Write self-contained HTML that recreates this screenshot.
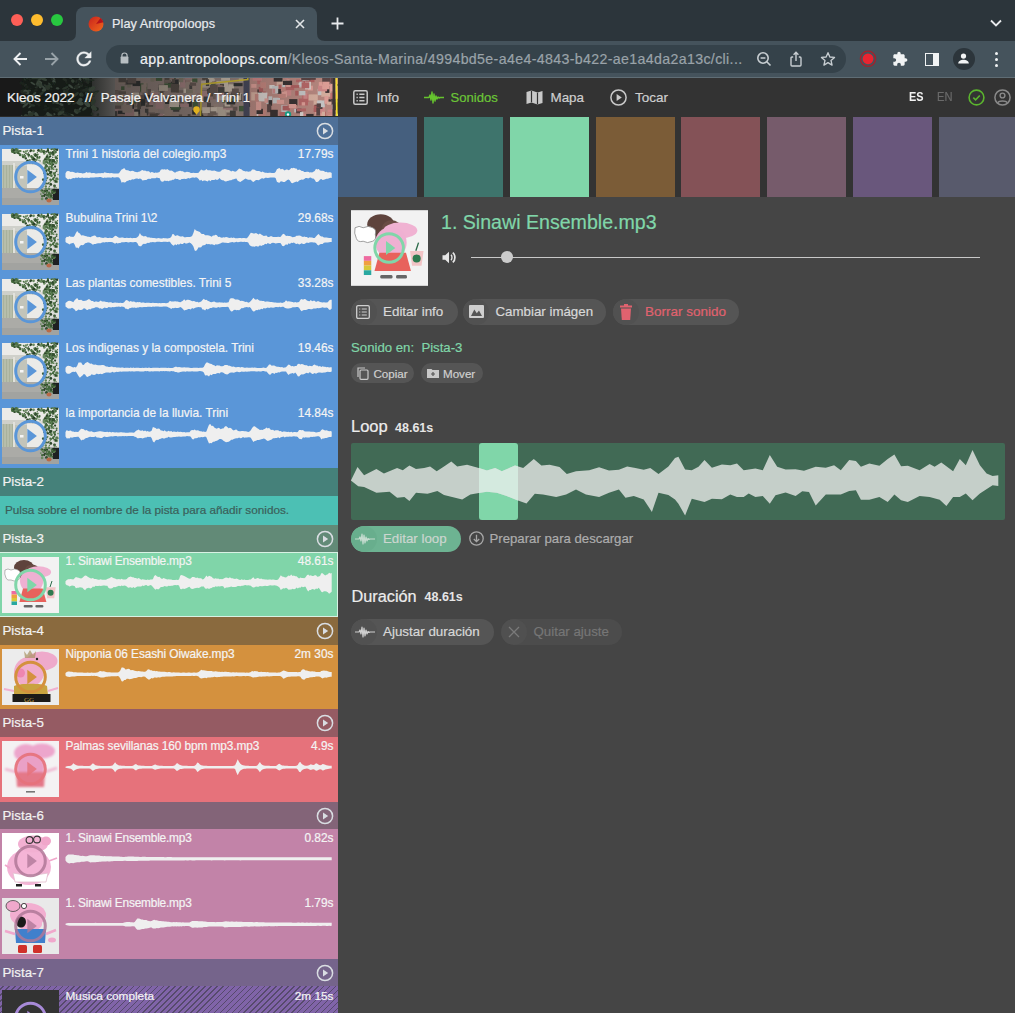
<!DOCTYPE html><html><head><meta charset="utf-8"><style>
*{margin:0;padding:0;box-sizing:border-box}
html,body{width:1015px;height:1013px;overflow:hidden;background:#2c353b;font-family:"Liberation Sans", sans-serif;}
.a{position:absolute}
.t{position:absolute;white-space:nowrap;line-height:1;-webkit-text-stroke:0.2px currentColor}
svg{position:absolute;overflow:visible}
</style></head><body><div class="a" style="left:0;top:0;width:1015px;height:41px;background:#2c353b"></div>
<div class="a" style="left:11px;top:14px;width:12px;height:12px;border-radius:50%;background:#fe5f57"></div>
<div class="a" style="left:31px;top:14px;width:12px;height:12px;border-radius:50%;background:#febc2e"></div>
<div class="a" style="left:51px;top:14px;width:12px;height:12px;border-radius:50%;background:#28c840"></div>
<div class="a" style="left:76px;top:7px;width:241px;height:35px;background:#45535c;border-radius:8px 8px 0 0"></div>
<svg style="left:68px;top:33px" width="8" height="8"><path d="M0 8 Q8 8 8 0 L8 8 Z" fill="#45535c"/></svg>
<svg style="left:317px;top:33px" width="8" height="8"><path d="M8 8 Q0 8 0 0 L0 8 Z" fill="#45535c"/></svg>
<svg style="left:88px;top:16px" width="16" height="16" viewBox="0 0 16 16"><defs><linearGradient id="fv" x1="0" y1="0" x2="1" y2="1"><stop offset="0" stop-color="#c8211d"/><stop offset="1" stop-color="#f26a1b"/></linearGradient></defs><circle cx="8" cy="8" r="7.5" fill="url(#fv)"/><path d="M8 8 L12.5 2 A7.5 7.5 0 0 1 15.3 6.3 Z" fill="#b3121c"/></svg>
<div class="t" style="left:112px;top:18px;font-size:12.7px;color:#e8eaed;letter-spacing:0.05px">Play Antropoloops</div>
<svg style="left:295px;top:18.5px" width="10" height="10" viewBox="0 0 10 10"><path d="M1 1 L9 9 M9 1 L1 9" stroke="#e3e6e8" stroke-width="1.6"/></svg>
<svg style="left:331px;top:17px" width="13" height="13" viewBox="0 0 13 13"><path d="M6.5 0.5 V12.5 M0.5 6.5 H12.5" stroke="#e8eaed" stroke-width="1.8"/></svg>
<svg style="left:990px;top:19px" width="12" height="8" viewBox="0 0 12 8"><path d="M1 1.5 L6 6.5 L11 1.5" stroke="#e8eaed" stroke-width="1.8" fill="none"/></svg>
<div class="a" style="left:0;top:41px;width:1015px;height:36px;background:#45535c"></div>
<div class="a" style="left:0;top:77px;width:1015px;height:1px;background:#5f6d75"></div>
<svg style="left:12px;top:51px" width="16" height="16" viewBox="0 0 16 16"><path d="M15 8 H2.5 M8.5 2 L2.5 8 L8.5 14" stroke="#eef0f2" stroke-width="1.9" fill="none"/></svg>
<svg style="left:44px;top:51px" width="16" height="16" viewBox="0 0 16 16"><path d="M1 8 H13.5 M7.5 2 L13.5 8 L7.5 14" stroke="#98a2a8" stroke-width="1.9" fill="none"/></svg>
<svg style="left:73.2px;top:48px" width="21.8" height="21.8" viewBox="0 0 24 24"><path stroke="#eef0f2" stroke-width="0.4" d="M17.65 6.35C16.2 4.9 14.21 4 12 4c-4.42 0-7.99 3.58-7.99 8s3.57 8 7.99 8c3.73 0 6.84-2.55 7.73-6h-2.08c-.82 2.33-3.04 4-5.65 4-3.31 0-6-2.690-6-6s2.69-6 6-6c1.66 0 3.140.69 4.22 1.78L13 11h7V4l-2.350 2.35z" fill="#eef0f2"/></svg>
<div class="a" style="left:106px;top:45px;width:740px;height:28px;border-radius:14px;background:#35424a"></div>
<svg style="left:119.6px;top:51.8px" width="9" height="12" viewBox="0 0 9 12"><path d="M1.9 5 V3.6 A2.6 2.6 0 0 1 7.1 3.6 V5" stroke="#b8bec2" stroke-width="1.2" fill="none"/><rect x="0.6" y="4.6" width="7.8" height="6.8" rx="0.6" fill="#b8bec2"/></svg>
<div class="t" style="left:140px;top:51.5px;font-size:14.2px;letter-spacing:0.35px;color:#eef0f2">app.antropoloops.com<span style="color:#9aa3a9">/Kleos-Santa-Marina/4994bd5e-a4e4-4843-b422-ae1a4da2a13c/cli...</span></div>
<svg style="left:756px;top:51px" width="16" height="16" viewBox="0 0 16 16"><circle cx="7" cy="7" r="5.2" stroke="#c8ced2" stroke-width="1.6" fill="none"/><path d="M4.6 7 H9.4 M10.8 10.8 L14.5 14.5" stroke="#c8ced2" stroke-width="1.6"/></svg>
<svg style="left:788px;top:50px" width="16" height="18" viewBox="0 0 16 18"><path d="M5.2 7 H4 Q3 7 3 8 V15 Q3 16 4 16 H12 Q13 16 13 15 V8 Q13 7 12 7 H10.8" stroke="#c8ced2" stroke-width="1.4" fill="none"/><path d="M8 11 V2.5 M5.6 4.7 L8 2.2 L10.4 4.7" stroke="#c8ced2" stroke-width="1.4" fill="none"/></svg>
<svg style="left:820px;top:51px" width="16" height="16" viewBox="0 0 24 24"><path d="M12 2.5 L14.8 9 L21.8 9.6 L16.5 14.2 L18.1 21.1 L12 17.4 L5.9 21.1 L7.5 14.2 L2.2 9.6 L9.2 9 Z" stroke="#c8ced2" stroke-width="2" fill="none" stroke-linejoin="round"/></svg>
<svg style="left:858px;top:49px" width="20" height="20" viewBox="0 0 20 20"><circle cx="10" cy="9.8" r="7.6" stroke="#a2222c" stroke-width="1.3" fill="none"/><circle cx="10" cy="9.8" r="5.4" fill="#ea2430"/></svg>
<svg style="left:892px;top:51px" width="16" height="16" viewBox="0 0 24 24"><path d="M20.5 11H19V7c0-1.1-.9-2-2-2h-4V3.5C13 2.12 11.88 1 10.5 1S8 2.12 8 3.5V5H4c-1.1 0-1.99.9-1.99 2v3.8H3.5c1.49 0 2.7 1.21 2.7 2.7s-1.21 2.7-2.7 2.7H2V20c0 1.1.9 2 2 2h3.8v-1.5c0-1.49 1.21-2.7 2.7-2.7 1.49 0 2.7 1.21 2.7 2.7V22H17c1.1 0 2-.9 2-2v-4h1.5c1.38 0 2.5-1.12 2.5-2.5S21.88 11 20.5 11z" fill="#f1f3f4"/></svg>
<div class="a" style="left:925px;top:53px;width:14px;height:13px;border:1.6px solid #f1f3f4;background:#45535c"></div>
<div class="a" style="left:933px;top:53px;width:6px;height:13px;background:#f1f3f4"></div>
<div class="a" style="left:952.5px;top:48px;width:22px;height:22px;border-radius:50%;background:#2c353b"></div>
<svg style="left:956px;top:51px" width="15" height="15" viewBox="0 0 24 24"><circle cx="12" cy="8" r="4.2" fill="#f1f3f4"/><path d="M3.5 20 C3.5 15.5 8 13.8 12 13.8 C16 13.8 20.5 15.5 20.5 20 Z" fill="#f1f3f4"/></svg>
<div class="a" style="left:994.5px;top:51.5px;width:3.2px;height:3.2px;border-radius:50%;background:#f1f3f4"></div>
<div class="a" style="left:994.5px;top:57.5px;width:3.2px;height:3.2px;border-radius:50%;background:#f1f3f4"></div>
<div class="a" style="left:994.5px;top:63.5px;width:3.2px;height:3.2px;border-radius:50%;background:#f1f3f4"></div>
<svg style="left:0;top:78px;overflow:hidden" width="338" height="38" viewBox="0 0 338 38"><defs><filter id="mb" x="0" y="0" width="1" height="1"><feGaussianBlur stdDeviation="0.75"/></filter><clipPath id="hc"><rect width="338" height="38"/></clipPath></defs><g clip-path="url(#hc)"><rect x="0" y="0" width="338" height="38" fill="#9a8680"/><rect x="250" y="0" width="88" height="38" fill="#b88880"/><g filter="url(#mb)"><rect x="185.2" y="2.3" width="7.4" height="3.0" fill="#9a7a74"/><rect x="133.3" y="20.5" width="9.3" height="3.9" fill="#a08a80"/><rect x="210.0" y="-1.1" width="3.2" height="5.3" fill="#4a6040"/><rect x="140.0" y="5.4" width="7.2" height="8.7" fill="#4a6040"/><rect x="244.3" y="-1.9" width="4.2" height="6.1" fill="#b08888"/><rect x="177.5" y="2.1" width="3.4" height="4.5" fill="#d0c0b0"/><rect x="152.8" y="20.4" width="7.3" height="4.9" fill="#9a7a74"/><rect x="272.9" y="19.7" width="7.1" height="5.7" fill="#c8c8c8"/><rect x="208.6" y="9.2" width="6.9" height="5.4" fill="#303030"/><rect x="168.1" y="3.6" width="8.3" height="3.0" fill="#303030"/><rect x="230.7" y="32.8" width="8.0" height="4.4" fill="#a08a80"/><rect x="138.7" y="13.6" width="8.2" height="3.5" fill="#7a6a62"/><rect x="207.3" y="36.4" width="3.1" height="6.1" fill="#4a4542"/><rect x="188.9" y="10.7" width="6.2" height="7.7" fill="#a08a80"/><rect x="301.8" y="35.7" width="6.1" height="6.8" fill="#d08888"/><rect x="277.2" y="9.0" width="6.8" height="6.9" fill="#3a3030"/><rect x="176.3" y="12.2" width="7.5" height="2.6" fill="#7a6a62"/><rect x="192.3" y="21.7" width="6.2" height="3.9" fill="#303030"/><rect x="141.2" y="6.4" width="5.4" height="8.2" fill="#a08a80"/><rect x="149.6" y="12.9" width="4.6" height="3.4" fill="#c0b0a0"/><rect x="307.3" y="7.7" width="5.6" height="4.8" fill="#e0a098"/><rect x="328.4" y="2.3" width="3.8" height="4.0" fill="#dcd4d0"/><rect x="114.7" y="30.9" width="3.9" height="4.3" fill="#b08888"/><rect x="206.7" y="11.5" width="6.7" height="8.7" fill="#5a5048"/><rect x="306.2" y="35.9" width="7.4" height="7.3" fill="#3a3030"/><rect x="315.3" y="28.8" width="9.1" height="7.7" fill="#e0a098"/><rect x="202.0" y="12.6" width="6.1" height="5.1" fill="#6a5a55"/><rect x="127.2" y="4.8" width="3.7" height="4.7" fill="#8a8070"/><rect x="135.1" y="19.8" width="6.5" height="8.7" fill="#4a6040"/><rect x="117.8" y="32.7" width="7.1" height="3.5" fill="#303030"/><rect x="327.9" y="21.3" width="6.1" height="3.2" fill="#3a3030"/><rect x="336.4" y="15.6" width="6.1" height="3.1" fill="#c07070"/><rect x="281.4" y="27.1" width="6.1" height="7.0" fill="#c8c8c8"/><rect x="117.2" y="35.9" width="6.5" height="3.5" fill="#9a7a74"/><rect x="318.6" y="27.8" width="4.7" height="6.7" fill="#c07070"/><rect x="269.3" y="7.0" width="5.3" height="3.6" fill="#dcd4d0"/><rect x="232.4" y="28.7" width="5.0" height="3.9" fill="#6a5a55"/><rect x="294.2" y="30.4" width="8.0" height="4.0" fill="#c8c8c8"/><rect x="223.4" y="26.7" width="9.9" height="7.6" fill="#7a6a62"/><rect x="170.6" y="25.1" width="9.7" height="5.4" fill="#5a5048"/><rect x="335.3" y="36.1" width="5.2" height="3.9" fill="#dcd4d0"/><rect x="218.2" y="10.2" width="6.1" height="8.9" fill="#4a6040"/><rect x="301.9" y="16.1" width="7.4" height="7.7" fill="#c07070"/><rect x="300.6" y="1.0" width="5.4" height="7.1" fill="#dcd4d0"/><rect x="220.0" y="3.5" width="8.4" height="4.7" fill="#5a5048"/><rect x="201.5" y="12.9" width="9.6" height="7.2" fill="#b08888"/><rect x="336.4" y="-2.8" width="6.9" height="5.5" fill="#c88880"/><rect x="145.0" y="30.7" width="9.9" height="6.8" fill="#4a4542"/><rect x="147.2" y="19.0" width="2.7" height="7.7" fill="#5a5048"/><rect x="258.8" y="18.1" width="9.5" height="5.3" fill="#dcd4d0"/><rect x="298.7" y="4.9" width="4.4" height="4.4" fill="#dcd4d0"/><rect x="284.6" y="9.7" width="6.6" height="7.9" fill="#d08888"/><rect x="317.7" y="10.9" width="5.9" height="6.3" fill="#c8c8c8"/><rect x="207.1" y="34.5" width="6.3" height="6.0" fill="#9a7a74"/><rect x="227.4" y="32.7" width="8.3" height="6.5" fill="#b08888"/><rect x="151.0" y="15.9" width="7.9" height="6.1" fill="#4a4542"/><rect x="266.2" y="18.3" width="6.1" height="7.5" fill="#c8c8c8"/><rect x="124.8" y="4.0" width="2.8" height="3.1" fill="#7a6a62"/><rect x="239.0" y="27.9" width="9.3" height="5.4" fill="#4a6040"/><rect x="332.0" y="21.5" width="4.0" height="4.3" fill="#c8c8c8"/><rect x="232.5" y="16.1" width="9.6" height="7.0" fill="#303030"/><rect x="320.5" y="33.5" width="4.0" height="5.4" fill="#e0a098"/><rect x="139.5" y="14.6" width="3.0" height="4.1" fill="#a08a80"/><rect x="160.1" y="8.7" width="3.4" height="7.6" fill="#5a5048"/><rect x="257.4" y="11.4" width="4.4" height="3.4" fill="#3a3030"/><rect x="161.6" y="36.0" width="5.5" height="5.7" fill="#d0c0b0"/><rect x="300.1" y="2.8" width="5.7" height="5.9" fill="#b06060"/><rect x="207.2" y="11.0" width="3.2" height="4.9" fill="#4a4542"/><rect x="237.2" y="14.5" width="2.6" height="4.7" fill="#4a6040"/><rect x="178.8" y="36.4" width="3.3" height="8.5" fill="#6a5a55"/><rect x="331.6" y="0.4" width="4.5" height="2.8" fill="#d8b0a0"/><rect x="173.1" y="1.4" width="5.7" height="8.4" fill="#303030"/><rect x="203.7" y="18.5" width="6.4" height="5.7" fill="#4a4542"/><rect x="132.2" y="-1.6" width="7.7" height="5.3" fill="#a08a80"/><rect x="172.8" y="-3.3" width="3.2" height="4.2" fill="#4a6040"/><rect x="305.5" y="-1.2" width="9.0" height="5.4" fill="#b06060"/><rect x="336.7" y="13.5" width="9.4" height="6.5" fill="#d08888"/><rect x="231.1" y="6.0" width="3.3" height="3.5" fill="#8a8070"/><rect x="152.9" y="35.2" width="7.2" height="6.0" fill="#6a5a55"/><rect x="177.5" y="17.0" width="3.8" height="4.8" fill="#8a8070"/><rect x="336.8" y="-2.4" width="2.6" height="5.8" fill="#dcd4d0"/><rect x="228.2" y="6.3" width="5.9" height="6.8" fill="#d0c0b0"/><rect x="209.7" y="16.8" width="8.8" height="5.1" fill="#9a7a74"/><rect x="181.6" y="5.0" width="4.2" height="3.8" fill="#5a5048"/><rect x="276.7" y="1.9" width="9.9" height="8.9" fill="#d8b0a0"/><rect x="115.2" y="22.3" width="9.1" height="5.3" fill="#8a8070"/><rect x="131.1" y="31.3" width="9.0" height="6.9" fill="#303030"/><rect x="247.3" y="25.1" width="2.8" height="3.7" fill="#303030"/><rect x="212.8" y="7.1" width="9.7" height="8.8" fill="#9a7a74"/><rect x="185.1" y="-2.6" width="9.1" height="3.9" fill="#b08888"/><rect x="112.2" y="12.0" width="6.1" height="5.8" fill="#6a5a55"/><rect x="168.1" y="28.6" width="3.2" height="7.8" fill="#b08888"/><rect x="202.3" y="-2.2" width="2.7" height="4.5" fill="#6a5a55"/><rect x="131.1" y="36.2" width="8.9" height="3.5" fill="#5a5048"/><rect x="289.2" y="21.1" width="8.2" height="7.2" fill="#3a3030"/><rect x="145.8" y="26.4" width="7.3" height="2.8" fill="#5a5048"/><rect x="313.6" y="22.3" width="8.0" height="7.8" fill="#d8b0a0"/><rect x="317.6" y="27.6" width="6.8" height="7.8" fill="#d08888"/><rect x="298.8" y="20.5" width="9.2" height="6.9" fill="#b86868"/><rect x="257.3" y="-0.4" width="2.8" height="6.6" fill="#c07070"/><rect x="197.1" y="15.0" width="2.9" height="2.6" fill="#9a7a74"/><rect x="265.8" y="16.6" width="2.5" height="7.7" fill="#b86868"/><rect x="322.7" y="33.7" width="3.2" height="5.9" fill="#b86868"/><rect x="278.5" y="6.6" width="3.1" height="4.2" fill="#b86868"/><rect x="283.0" y="5.7" width="7.4" height="5.5" fill="#e0a098"/><rect x="129.3" y="34.2" width="4.7" height="2.8" fill="#d0c0b0"/><rect x="257.3" y="-0.7" width="3.6" height="4.2" fill="#b86868"/><rect x="268.6" y="22.1" width="3.5" height="5.6" fill="#3a3030"/><rect x="172.7" y="24.2" width="7.7" height="6.9" fill="#303030"/><rect x="272.2" y="8.0" width="6.0" height="7.5" fill="#c8c8c8"/><rect x="157.0" y="37.1" width="9.5" height="2.6" fill="#7a6a62"/><rect x="129.3" y="17.3" width="10.0" height="9.0" fill="#c0b0a0"/><rect x="159.4" y="35.7" width="4.1" height="6.3" fill="#b08888"/><rect x="280.9" y="7.0" width="5.2" height="6.4" fill="#c88880"/><rect x="227.0" y="33.2" width="7.8" height="4.0" fill="#7a6a62"/><rect x="201.1" y="2.7" width="9.6" height="6.9" fill="#c0b0a0"/><rect x="180.2" y="1.9" width="5.1" height="4.6" fill="#4a4542"/><rect x="112.4" y="27.5" width="8.8" height="3.3" fill="#6a5a55"/><rect x="273.1" y="33.9" width="4.7" height="4.9" fill="#e0a098"/><rect x="200.2" y="32.5" width="3.1" height="8.5" fill="#303030"/><rect x="305.1" y="7.8" width="2.9" height="6.8" fill="#c88880"/><rect x="323.4" y="6.5" width="4.5" height="5.8" fill="#dcd4d0"/><rect x="286.7" y="29.0" width="5.7" height="2.7" fill="#c88880"/><rect x="202.4" y="32.8" width="6.7" height="3.8" fill="#a08a80"/><rect x="123.2" y="26.8" width="5.9" height="7.4" fill="#d0c0b0"/><rect x="308.5" y="16.4" width="9.3" height="6.1" fill="#d8b0a0"/><rect x="218.7" y="10.4" width="4.7" height="7.3" fill="#d0c0b0"/><rect x="170.8" y="23.6" width="4.8" height="6.1" fill="#c0b0a0"/><rect x="139.1" y="23.0" width="3.1" height="5.8" fill="#7a6a62"/><rect x="236.4" y="15.0" width="5.0" height="7.4" fill="#c0b0a0"/><rect x="143.5" y="4.1" width="3.2" height="4.7" fill="#a08a80"/><rect x="184.2" y="11.5" width="8.6" height="3.8" fill="#8a8070"/><rect x="281.4" y="13.3" width="5.6" height="5.9" fill="#e0a098"/><rect x="173.1" y="27.6" width="6.2" height="6.2" fill="#4a4542"/><rect x="140.4" y="17.1" width="7.2" height="8.1" fill="#6a5a55"/><rect x="132.9" y="33.7" width="5.4" height="6.7" fill="#c0b0a0"/><rect x="327.6" y="31.6" width="9.0" height="2.6" fill="#d08888"/><rect x="208.1" y="28.1" width="8.5" height="8.8" fill="#7a6a62"/><rect x="112.0" y="12.4" width="9.5" height="7.9" fill="#7a6a62"/><rect x="331.7" y="6.4" width="3.3" height="3.5" fill="#c8c8c8"/><rect x="331.6" y="0.6" width="8.7" height="7.1" fill="#3a3030"/><rect x="131.2" y="28.6" width="2.5" height="3.3" fill="#4a6040"/><rect x="319.9" y="23.1" width="4.8" height="3.3" fill="#2a2222"/><rect x="231.4" y="14.4" width="8.2" height="3.1" fill="#303030"/><rect x="230.5" y="20.5" width="5.4" height="4.0" fill="#4a6040"/><rect x="112.3" y="18.6" width="10.0" height="4.3" fill="#4a4542"/><rect x="257.7" y="33.1" width="6.1" height="4.0" fill="#dcd4d0"/><rect x="118.6" y="13.3" width="7.4" height="2.9" fill="#6a5a55"/><rect x="224.6" y="24.3" width="5.7" height="4.2" fill="#d0c0b0"/><rect x="207.9" y="11.5" width="6.2" height="7.0" fill="#5a5048"/><rect x="207.0" y="24.7" width="4.0" height="7.7" fill="#5a5048"/><rect x="303.0" y="-1.2" width="6.2" height="3.8" fill="#dcd4d0"/><rect x="164.2" y="5.3" width="8.2" height="4.4" fill="#4a6040"/><rect x="224.0" y="3.9" width="4.2" height="5.2" fill="#d0c0b0"/><rect x="124.8" y="21.0" width="9.4" height="2.9" fill="#8a8070"/><rect x="332.2" y="2.0" width="2.9" height="2.9" fill="#e0a098"/><rect x="213.6" y="25.9" width="4.9" height="3.2" fill="#a08a80"/><rect x="322.5" y="9.8" width="3.9" height="8.6" fill="#b86868"/><rect x="217.7" y="9.1" width="7.9" height="8.0" fill="#4a4542"/><rect x="212.0" y="0.6" width="3.1" height="3.0" fill="#c0b0a0"/><rect x="327.9" y="1.2" width="9.7" height="3.8" fill="#b06060"/><rect x="285.7" y="9.0" width="8.5" height="3.1" fill="#b86868"/><rect x="219.0" y="11.7" width="9.4" height="3.8" fill="#4a4542"/><rect x="278.6" y="15.9" width="7.2" height="4.1" fill="#c88880"/><rect x="285.3" y="-2.3" width="2.8" height="2.9" fill="#d08888"/><rect x="170.1" y="27.4" width="9.2" height="4.7" fill="#303030"/><rect x="187.7" y="36.1" width="2.8" height="7.4" fill="#5a5048"/><rect x="183.5" y="7.6" width="2.5" height="7.4" fill="#d0c0b0"/><rect x="325.9" y="-1.3" width="8.7" height="3.2" fill="#b86868"/><rect x="328.2" y="36.1" width="5.4" height="4.1" fill="#e0a098"/><rect x="296.1" y="1.6" width="6.2" height="2.6" fill="#b86868"/><rect x="180.5" y="25.1" width="3.6" height="4.0" fill="#4a4542"/><rect x="216.1" y="28.9" width="7.0" height="5.8" fill="#c0b0a0"/><rect x="282.2" y="6.4" width="3.0" height="2.7" fill="#c8c8c8"/><rect x="235.1" y="2.7" width="5.7" height="3.2" fill="#a08a80"/><rect x="171.9" y="-0.5" width="3.2" height="5.7" fill="#5a5048"/><rect x="331.7" y="3.3" width="3.5" height="5.5" fill="#c88880"/><rect x="165.1" y="18.6" width="8.3" height="7.4" fill="#303030"/><rect x="178.4" y="19.8" width="5.3" height="7.3" fill="#6a5a55"/><rect x="211.3" y="3.8" width="4.3" height="4.3" fill="#4a6040"/><rect x="154.5" y="-1.3" width="4.4" height="4.1" fill="#9a7a74"/><rect x="164.3" y="30.0" width="7.4" height="8.9" fill="#a08a80"/><rect x="113.0" y="33.1" width="4.2" height="5.4" fill="#4a4542"/><rect x="121.1" y="8.3" width="3.4" height="3.7" fill="#4a6040"/><rect x="155.9" y="-0.8" width="6.3" height="3.7" fill="#4a6040"/><rect x="170.7" y="28.7" width="9.6" height="3.2" fill="#4a6040"/><rect x="272.4" y="10.7" width="2.8" height="4.7" fill="#d08888"/><rect x="158.1" y="6.7" width="7.0" height="6.7" fill="#6a5a55"/><rect x="296.1" y="30.4" width="5.6" height="4.9" fill="#5a4444"/><rect x="182.6" y="4.5" width="8.5" height="6.1" fill="#a08a80"/><rect x="204.2" y="29.4" width="7.5" height="3.5" fill="#9a7a74"/><rect x="132.6" y="2.9" width="7.7" height="5.2" fill="#303030"/><rect x="262.9" y="13.5" width="2.9" height="7.3" fill="#b06060"/><rect x="205.6" y="-3.2" width="8.2" height="7.7" fill="#d0c0b0"/><rect x="156.6" y="26.6" width="4.0" height="2.5" fill="#b08888"/><rect x="207.8" y="30.5" width="5.5" height="8.2" fill="#7a6a62"/><rect x="286.7" y="1.5" width="2.9" height="3.4" fill="#e0a098"/><rect x="132.1" y="22.1" width="5.3" height="5.8" fill="#b08888"/><rect x="190.6" y="2.8" width="3.8" height="2.9" fill="#c0b0a0"/><rect x="222.9" y="29.8" width="9.8" height="3.8" fill="#b08888"/><rect x="301.2" y="-2.2" width="9.3" height="4.5" fill="#5a4444"/><rect x="321.3" y="12.3" width="9.3" height="6.5" fill="#d8b0a0"/><rect x="256.7" y="32.0" width="7.2" height="6.5" fill="#dcd4d0"/><rect x="299.4" y="3.7" width="4.1" height="5.1" fill="#c8c8c8"/><rect x="147.4" y="11.1" width="3.6" height="8.8" fill="#6a5a55"/><rect x="121.3" y="19.6" width="8.2" height="2.7" fill="#4a4542"/><rect x="138.6" y="21.2" width="6.6" height="6.6" fill="#303030"/><rect x="258.7" y="8.9" width="4.4" height="5.0" fill="#b06060"/><rect x="213.0" y="14.4" width="2.7" height="6.5" fill="#7a6a62"/><rect x="217.2" y="14.8" width="7.1" height="7.8" fill="#b08888"/><rect x="295.2" y="12.8" width="3.0" height="4.8" fill="#b06060"/><rect x="132.7" y="14.6" width="6.3" height="2.8" fill="#d0c0b0"/><rect x="141.4" y="34.7" width="4.9" height="7.2" fill="#a08a80"/><rect x="124.3" y="17.2" width="5.3" height="8.7" fill="#b08888"/><rect x="117.8" y="-1.2" width="7.1" height="7.0" fill="#a08a80"/><rect x="155.8" y="37.2" width="6.2" height="8.7" fill="#b08888"/><rect x="267.1" y="26.3" width="4.2" height="7.9" fill="#5a4444"/><rect x="282.9" y="2.7" width="9.2" height="4.3" fill="#3a3030"/><rect x="144.4" y="17.1" width="9.4" height="3.9" fill="#303030"/><rect x="251.2" y="6.0" width="5.3" height="3.8" fill="#e0a098"/><rect x="148.4" y="35.3" width="7.6" height="8.3" fill="#b08888"/><rect x="291.0" y="7.1" width="8.3" height="2.8" fill="#b06060"/><rect x="330.4" y="15.0" width="6.4" height="7.0" fill="#c07070"/><rect x="169.0" y="18.5" width="8.9" height="7.3" fill="#4a4542"/><rect x="171.8" y="37.6" width="6.8" height="4.8" fill="#a08a80"/><rect x="212.0" y="3.4" width="8.1" height="2.8" fill="#9a7a74"/><rect x="169.3" y="22.8" width="9.9" height="6.3" fill="#d0c0b0"/><rect x="314.4" y="26.8" width="8.1" height="3.9" fill="#2a2222"/><rect x="251.2" y="14.2" width="6.3" height="8.3" fill="#d8b0a0"/><rect x="222.4" y="21.7" width="2.8" height="2.9" fill="#4a6040"/><rect x="192.2" y="0.5" width="5.2" height="4.0" fill="#4a6040"/><rect x="180.1" y="1.6" width="5.2" height="7.9" fill="#b08888"/><rect x="142.5" y="35.3" width="4.3" height="3.5" fill="#a08a80"/><rect x="126.4" y="2.1" width="7.5" height="4.3" fill="#303030"/><rect x="330.6" y="-1.6" width="8.7" height="8.3" fill="#5a4444"/><rect x="257.9" y="14.6" width="9.5" height="7.3" fill="#dcd4d0"/><rect x="149.3" y="-4.0" width="3.0" height="2.7" fill="#b08888"/><rect x="165.7" y="-1.5" width="8.3" height="2.6" fill="#9a7a74"/><rect x="260.4" y="4.3" width="5.6" height="5.9" fill="#c88880"/><rect x="226.6" y="22.9" width="8.6" height="3.6" fill="#303030"/><rect x="126.4" y="22.3" width="10.0" height="7.2" fill="#7a6a62"/><rect x="273.7" y="-3.7" width="8.8" height="7.3" fill="#3a3030"/><rect x="130.2" y="23.5" width="3.8" height="9.0" fill="#303030"/><rect x="164.5" y="-2.4" width="5.0" height="7.4" fill="#5a5048"/><rect x="325.1" y="7.1" width="2.9" height="6.6" fill="#c88880"/><rect x="210.5" y="29.1" width="6.4" height="4.2" fill="#d0c0b0"/><rect x="321.9" y="33.6" width="3.1" height="5.8" fill="#d8b0a0"/><rect x="170.8" y="5.9" width="8.1" height="8.6" fill="#5a5048"/><rect x="318.8" y="4.1" width="5.4" height="6.4" fill="#e0a098"/><rect x="317.1" y="22.5" width="7.7" height="6.8" fill="#c8c8c8"/><rect x="218.1" y="31.3" width="7.7" height="8.1" fill="#c0b0a0"/><rect x="328.0" y="5.8" width="9.1" height="7.6" fill="#e0a098"/><rect x="252.7" y="-0.7" width="9.3" height="3.4" fill="#d08888"/><rect x="137.3" y="22.1" width="3.7" height="8.9" fill="#5a5048"/><rect x="118.5" y="-2.3" width="7.7" height="6.6" fill="#5a5048"/><rect x="127.3" y="-2.0" width="8.9" height="7.5" fill="#6a5a55"/><rect x="296.8" y="30.4" width="9.2" height="2.9" fill="#b86868"/><rect x="325.4" y="0.5" width="4.0" height="3.2" fill="#d08888"/><rect x="326.5" y="34.3" width="8.2" height="3.1" fill="#c88880"/><rect x="254.9" y="16.0" width="3.5" height="7.6" fill="#c88880"/><rect x="158.3" y="9.4" width="5.7" height="2.6" fill="#303030"/><rect x="322.2" y="-2.0" width="8.2" height="8.4" fill="#5a4444"/><rect x="225.8" y="31.8" width="7.1" height="2.7" fill="#c0b0a0"/><rect x="119.1" y="17.8" width="3.2" height="5.5" fill="#8a8070"/><rect x="233.6" y="5.1" width="9.0" height="3.1" fill="#303030"/><rect x="150.5" y="-3.9" width="4.0" height="7.5" fill="#8a8070"/><rect x="113.0" y="16.6" width="6.2" height="7.7" fill="#b08888"/><rect x="330.6" y="20.9" width="9.7" height="5.8" fill="#5a4444"/><rect x="325.3" y="7.9" width="4.1" height="7.0" fill="#3a3030"/><rect x="149.5" y="35.4" width="8.3" height="5.7" fill="#5a5048"/><rect x="238.8" y="0.4" width="4.9" height="3.1" fill="#c0b0a0"/><rect x="313.6" y="27.3" width="5.7" height="6.7" fill="#b06060"/><rect x="158.6" y="7.1" width="9.3" height="5.8" fill="#c0b0a0"/><rect x="334.0" y="22.5" width="9.6" height="3.3" fill="#5a4444"/><rect x="282.5" y="27.6" width="7.3" height="4.8" fill="#b06060"/><rect x="229.9" y="32.5" width="5.9" height="6.1" fill="#4a4542"/><rect x="150.3" y="14.4" width="8.3" height="6.3" fill="#b08888"/><rect x="187.5" y="23.0" width="7.7" height="5.8" fill="#303030"/><rect x="180.1" y="25.5" width="8.8" height="3.5" fill="#b08888"/><rect x="332.3" y="26.4" width="7.0" height="4.8" fill="#dcd4d0"/><rect x="186.1" y="3.9" width="9.8" height="7.2" fill="#a08a80"/><rect x="149.2" y="23.6" width="4.0" height="3.5" fill="#b08888"/><rect x="291.6" y="26.8" width="5.8" height="3.8" fill="#c88880"/><rect x="318.0" y="7.8" width="9.1" height="5.5" fill="#d08888"/><rect x="202.2" y="29.2" width="7.7" height="5.8" fill="#d0c0b0"/><rect x="178.9" y="-3.1" width="4.4" height="7.3" fill="#8a8070"/><rect x="279.5" y="34.1" width="5.7" height="6.2" fill="#b86868"/><rect x="258.3" y="31.5" width="7.5" height="6.7" fill="#c88880"/><rect x="270.2" y="31.8" width="7.6" height="6.7" fill="#3a3030"/><rect x="209.8" y="6.9" width="7.8" height="8.3" fill="#6a5a55"/><rect x="288.8" y="26.0" width="7.2" height="4.1" fill="#e0a098"/><rect x="221.1" y="-3.2" width="8.9" height="5.9" fill="#d0c0b0"/><rect x="322.2" y="3.7" width="7.4" height="7.6" fill="#e0a098"/><rect x="300.0" y="34.1" width="3.3" height="4.1" fill="#dcd4d0"/><rect x="148.4" y="28.8" width="9.6" height="5.9" fill="#a08a80"/><rect x="303.5" y="15.2" width="4.0" height="5.6" fill="#d08888"/><rect x="256.5" y="30.8" width="6.4" height="5.2" fill="#3a3030"/><rect x="159.5" y="24.7" width="5.4" height="7.5" fill="#a08a80"/><rect x="276.8" y="21.8" width="7.3" height="4.1" fill="#e0a098"/><rect x="202.3" y="-3.4" width="5.6" height="5.2" fill="#5a5048"/><rect x="264.5" y="20.4" width="3.3" height="4.5" fill="#e0a098"/><rect x="324.4" y="18.1" width="4.1" height="7.7" fill="#e0a098"/><rect x="216.4" y="2.9" width="9.5" height="2.9" fill="#d0c0b0"/><rect x="155.7" y="23.0" width="7.9" height="7.8" fill="#b08888"/><rect x="191.8" y="22.8" width="8.6" height="7.8" fill="#7a6a62"/><rect x="337.1" y="27.9" width="7.4" height="7.6" fill="#3a3030"/><rect x="192.2" y="31.7" width="4.5" height="4.9" fill="#303030"/><rect x="334.1" y="24.5" width="6.1" height="7.7" fill="#2a2222"/><rect x="192.9" y="23.5" width="4.9" height="5.7" fill="#4a6040"/><rect x="256.0" y="23.7" width="5.2" height="8.5" fill="#e0a098"/><rect x="124.9" y="30.8" width="9.3" height="7.6" fill="#b08888"/><rect x="231.9" y="10.5" width="6.9" height="6.8" fill="#6a5a55"/><rect x="327.1" y="23.6" width="4.4" height="3.2" fill="#d8b0a0"/><rect x="305.0" y="3.8" width="5.9" height="7.6" fill="#dcd4d0"/><rect x="316.3" y="29.3" width="3.8" height="8.3" fill="#5a4444"/><rect x="332.8" y="-0.2" width="9.3" height="6.1" fill="#c88880"/><rect x="301.6" y="4.3" width="7.7" height="6.0" fill="#b86868"/><rect x="301.7" y="24.2" width="3.4" height="3.3" fill="#e0a098"/><rect x="164.9" y="1.9" width="6.2" height="2.9" fill="#7a6a62"/><rect x="316.6" y="25.4" width="4.3" height="3.6" fill="#5a4444"/><rect x="307.0" y="-3.7" width="8.8" height="5.5" fill="#5a4444"/><rect x="224.5" y="8.5" width="6.0" height="5.3" fill="#d0c0b0"/><rect x="129.0" y="22.8" width="7.3" height="2.7" fill="#4a6040"/><rect x="122.4" y="26.9" width="10.0" height="7.8" fill="#a08a80"/><rect x="227.4" y="16.4" width="9.2" height="2.7" fill="#5a5048"/><rect x="205.9" y="1.3" width="3.2" height="6.8" fill="#4a4542"/><rect x="219.2" y="18.1" width="8.3" height="3.9" fill="#c0b0a0"/><rect x="189.3" y="6.6" width="2.9" height="4.4" fill="#4a4542"/><rect x="299.1" y="13.0" width="6.3" height="4.3" fill="#c8c8c8"/><rect x="189.9" y="4.5" width="6.2" height="3.3" fill="#6a5a55"/><rect x="243.5" y="0" width="6" height="38" fill="#4a4a5c"/><rect x="332.5" y="0" width="3" height="38" fill="#3a3434"/></g><path d="M200.5 38 L201.7 6.3 L247.8 1.5 L247.8 -1" stroke="#d8c030" stroke-width="1.5" fill="none"/><path d="M336.4 0 L336.8 38" stroke="#f0e030" stroke-width="1.8" fill="none"/><defs><linearGradient id="hg" x1="0" y1="0" x2="1" y2="0"><stop offset="0" stop-color="#141615" stop-opacity="0.45"/><stop offset="0.6" stop-color="#141615" stop-opacity="0.2"/><stop offset="1" stop-color="#141615" stop-opacity="0"/></linearGradient><linearGradient id="wg" x1="0" y1="0" x2="1" y2="0"><stop offset="0" stop-color="#2e302e"/><stop offset="1" stop-color="#545250"/></linearGradient></defs><rect x="115" y="0" width="223" height="38" fill="url(#hg)"/><rect x="0" y="0" width="115" height="38" fill="#161b17"/><rect x="92" y="0" width="23" height="38" fill="url(#wg)"/><rect x="0" y="0" width="22" height="38" fill="#191919"/><g filter="url(#mb)"><ellipse cx="46.1" cy="9.9" rx="2.8" ry="1.7" fill="#2a342c" transform="rotate(-12 46.1 9.9)"/><ellipse cx="64.1" cy="14.5" rx="2.8" ry="1.4" fill="#2a342c" transform="rotate(-59 64.1 14.5)"/><ellipse cx="36.4" cy="36.6" rx="2.9" ry="1.7" fill="#3b463d" transform="rotate(49 36.4 36.6)"/><ellipse cx="68.5" cy="23.5" rx="3.0" ry="1.8" fill="#3b463d" transform="rotate(45 68.5 23.5)"/><ellipse cx="28.3" cy="-1.3" rx="3.0" ry="1.7" fill="#222a23" transform="rotate(-48 28.3 -1.3)"/><ellipse cx="35.8" cy="-1.4" rx="3.4" ry="2.1" fill="#2a342c" transform="rotate(-16 35.8 -1.4)"/><ellipse cx="84.5" cy="30.8" rx="2.8" ry="1.2" fill="#323e33" transform="rotate(-38 84.5 30.8)"/><ellipse cx="24.6" cy="-2.1" rx="2.8" ry="1.6" fill="#2a342c" transform="rotate(-0 24.6 -2.1)"/><ellipse cx="61.7" cy="32.5" rx="3.4" ry="1.4" fill="#1a201b" transform="rotate(-6 61.7 32.5)"/><ellipse cx="23.1" cy="13.6" rx="2.9" ry="2.1" fill="#222a23" transform="rotate(-3 23.1 13.6)"/><ellipse cx="53.3" cy="1.4" rx="3.0" ry="1.1" fill="#222a23" transform="rotate(15 53.3 1.4)"/><ellipse cx="54.5" cy="-2.6" rx="3.1" ry="2.2" fill="#2a342c" transform="rotate(-34 54.5 -2.6)"/><ellipse cx="31.2" cy="17.3" rx="2.0" ry="1.6" fill="#1a201b" transform="rotate(28 31.2 17.3)"/><ellipse cx="36.2" cy="-0.8" rx="3.4" ry="1.8" fill="#222a23" transform="rotate(28 36.2 -0.8)"/><ellipse cx="28.4" cy="24.0" rx="3.2" ry="1.4" fill="#323e33" transform="rotate(50 28.4 24.0)"/><ellipse cx="26.0" cy="-1.6" rx="1.4" ry="2.0" fill="#3b463d" transform="rotate(-50 26.0 -1.6)"/><ellipse cx="45.6" cy="28.4" rx="1.7" ry="2.0" fill="#1a201b" transform="rotate(13 45.6 28.4)"/><ellipse cx="46.0" cy="37.8" rx="3.2" ry="1.5" fill="#222a23" transform="rotate(-43 46.0 37.8)"/><ellipse cx="82.6" cy="12.6" rx="3.0" ry="1.7" fill="#1a201b" transform="rotate(-3 82.6 12.6)"/><ellipse cx="81.1" cy="16.5" rx="2.0" ry="1.9" fill="#323e33" transform="rotate(-25 81.1 16.5)"/><ellipse cx="26.6" cy="38.9" rx="3.2" ry="2.0" fill="#323e33" transform="rotate(44 26.6 38.9)"/><ellipse cx="77.2" cy="-2.3" rx="1.6" ry="2.0" fill="#3b463d" transform="rotate(-9 77.2 -2.3)"/><ellipse cx="89.5" cy="13.2" rx="3.1" ry="1.6" fill="#222a23" transform="rotate(37 89.5 13.2)"/><ellipse cx="43.5" cy="-2.9" rx="1.9" ry="1.4" fill="#3b463d" transform="rotate(50 43.5 -2.9)"/><ellipse cx="80.0" cy="30.7" rx="2.0" ry="1.0" fill="#3b463d" transform="rotate(-42 80.0 30.7)"/><ellipse cx="96.1" cy="31.3" rx="2.7" ry="1.9" fill="#1a201b" transform="rotate(-18 96.1 31.3)"/><ellipse cx="28.5" cy="20.8" rx="3.4" ry="1.1" fill="#222a23" transform="rotate(-23 28.5 20.8)"/><ellipse cx="26.4" cy="14.0" rx="3.2" ry="2.1" fill="#3b463d" transform="rotate(30 26.4 14.0)"/><ellipse cx="82.2" cy="16.8" rx="1.4" ry="1.9" fill="#2a342c" transform="rotate(-32 82.2 16.8)"/><ellipse cx="66.0" cy="35.6" rx="3.7" ry="1.5" fill="#1a201b" transform="rotate(1 66.0 35.6)"/><ellipse cx="37.3" cy="6.1" rx="1.5" ry="1.9" fill="#323e33" transform="rotate(-16 37.3 6.1)"/><ellipse cx="64.9" cy="14.3" rx="2.6" ry="1.0" fill="#2a342c" transform="rotate(51 64.9 14.3)"/><ellipse cx="59.5" cy="34.3" rx="2.2" ry="1.4" fill="#2a342c" transform="rotate(-41 59.5 34.3)"/><ellipse cx="67.4" cy="11.8" rx="2.7" ry="0.8" fill="#2a342c" transform="rotate(-35 67.4 11.8)"/><ellipse cx="88.2" cy="21.3" rx="2.8" ry="1.1" fill="#323e33" transform="rotate(-9 88.2 21.3)"/><ellipse cx="93.9" cy="30.0" rx="3.5" ry="2.1" fill="#323e33" transform="rotate(41 93.9 30.0)"/><ellipse cx="47.8" cy="39.8" rx="2.3" ry="0.8" fill="#2a342c" transform="rotate(7 47.8 39.8)"/><ellipse cx="88.2" cy="16.7" rx="3.9" ry="2.1" fill="#2a342c" transform="rotate(44 88.2 16.7)"/><ellipse cx="70.6" cy="36.7" rx="3.2" ry="0.9" fill="#323e33" transform="rotate(8 70.6 36.7)"/><ellipse cx="70.7" cy="38.1" rx="3.1" ry="1.4" fill="#1a201b" transform="rotate(42 70.7 38.1)"/><ellipse cx="50.2" cy="7.1" rx="3.2" ry="1.0" fill="#323e33" transform="rotate(53 50.2 7.1)"/><ellipse cx="26.5" cy="20.8" rx="1.3" ry="2.1" fill="#323e33" transform="rotate(34 26.5 20.8)"/><ellipse cx="75.9" cy="24.8" rx="4.0" ry="0.9" fill="#222a23" transform="rotate(-22 75.9 24.8)"/><ellipse cx="22.4" cy="5.6" rx="3.3" ry="1.6" fill="#1a201b" transform="rotate(31 22.4 5.6)"/><ellipse cx="30.0" cy="10.9" rx="1.9" ry="1.0" fill="#1a201b" transform="rotate(-14 30.0 10.9)"/><ellipse cx="55.5" cy="31.7" rx="3.8" ry="2.0" fill="#1a201b" transform="rotate(26 55.5 31.7)"/><ellipse cx="36.8" cy="-1.5" rx="3.8" ry="1.1" fill="#3b463d" transform="rotate(44 36.8 -1.5)"/><ellipse cx="89.5" cy="3.0" rx="2.5" ry="0.9" fill="#1a201b" transform="rotate(41 89.5 3.0)"/><ellipse cx="69.8" cy="16.5" rx="2.2" ry="2.0" fill="#1a201b" transform="rotate(-46 69.8 16.5)"/><ellipse cx="49.8" cy="11.3" rx="3.3" ry="1.1" fill="#1a201b" transform="rotate(6 49.8 11.3)"/><ellipse cx="33.0" cy="34.4" rx="1.9" ry="1.4" fill="#222a23" transform="rotate(-57 33.0 34.4)"/><ellipse cx="65.4" cy="9.8" rx="3.5" ry="1.2" fill="#2a342c" transform="rotate(-22 65.4 9.8)"/><ellipse cx="90.6" cy="1.9" rx="3.9" ry="0.9" fill="#222a23" transform="rotate(7 90.6 1.9)"/><ellipse cx="85.5" cy="2.1" rx="3.3" ry="2.2" fill="#1a201b" transform="rotate(59 85.5 2.1)"/><ellipse cx="97.9" cy="36.8" rx="1.5" ry="1.2" fill="#222a23" transform="rotate(-53 97.9 36.8)"/><ellipse cx="77.2" cy="9.6" rx="3.9" ry="0.8" fill="#3b463d" transform="rotate(-19 77.2 9.6)"/><ellipse cx="32.7" cy="-2.9" rx="3.5" ry="1.5" fill="#222a23" transform="rotate(-17 32.7 -2.9)"/><ellipse cx="25.1" cy="14.6" rx="2.0" ry="1.1" fill="#222a23" transform="rotate(3 25.1 14.6)"/><ellipse cx="39.5" cy="4.6" rx="2.9" ry="2.0" fill="#3b463d" transform="rotate(28 39.5 4.6)"/><ellipse cx="79.9" cy="4.5" rx="1.6" ry="1.7" fill="#222a23" transform="rotate(10 79.9 4.5)"/><ellipse cx="37.4" cy="-0.2" rx="3.3" ry="1.4" fill="#2a342c" transform="rotate(2 37.4 -0.2)"/><ellipse cx="48.4" cy="9.1" rx="3.0" ry="2.1" fill="#2a342c" transform="rotate(-58 48.4 9.1)"/><ellipse cx="91.2" cy="17.5" rx="3.6" ry="1.2" fill="#222a23" transform="rotate(8 91.2 17.5)"/><ellipse cx="96.9" cy="-1.4" rx="3.2" ry="1.6" fill="#2a342c" transform="rotate(-17 96.9 -1.4)"/><ellipse cx="92.8" cy="38.7" rx="1.4" ry="1.3" fill="#222a23" transform="rotate(38 92.8 38.7)"/><ellipse cx="87.8" cy="10.8" rx="3.2" ry="1.3" fill="#2a342c" transform="rotate(-25 87.8 10.8)"/><ellipse cx="30.2" cy="28.4" rx="2.5" ry="0.8" fill="#3b463d" transform="rotate(-44 30.2 28.4)"/><ellipse cx="40.5" cy="0.8" rx="2.9" ry="1.0" fill="#323e33" transform="rotate(-30 40.5 0.8)"/><ellipse cx="84.1" cy="-1.7" rx="1.5" ry="1.8" fill="#222a23" transform="rotate(-29 84.1 -1.7)"/><ellipse cx="85.6" cy="24.4" rx="2.5" ry="1.1" fill="#1a201b" transform="rotate(-48 85.6 24.4)"/><ellipse cx="88.1" cy="27.8" rx="1.3" ry="1.0" fill="#1a201b" transform="rotate(10 88.1 27.8)"/><ellipse cx="79.9" cy="1.7" rx="1.5" ry="2.0" fill="#3b463d" transform="rotate(11 79.9 1.7)"/><ellipse cx="87.4" cy="3.3" rx="2.8" ry="1.8" fill="#222a23" transform="rotate(54 87.4 3.3)"/><ellipse cx="23.4" cy="24.3" rx="3.1" ry="1.6" fill="#3b463d" transform="rotate(3 23.4 24.3)"/><ellipse cx="52.1" cy="37.5" rx="3.4" ry="1.3" fill="#222a23" transform="rotate(41 52.1 37.5)"/><ellipse cx="76.4" cy="33.3" rx="2.8" ry="2.2" fill="#323e33" transform="rotate(38 76.4 33.3)"/><ellipse cx="86.4" cy="-0.7" rx="2.6" ry="2.1" fill="#323e33" transform="rotate(-30 86.4 -0.7)"/><ellipse cx="54.1" cy="24.2" rx="2.2" ry="1.5" fill="#2a342c" transform="rotate(-21 54.1 24.2)"/><ellipse cx="37.3" cy="25.8" rx="1.8" ry="1.4" fill="#1a201b" transform="rotate(33 37.3 25.8)"/><ellipse cx="93.2" cy="24.2" rx="3.5" ry="2.0" fill="#2a342c" transform="rotate(-56 93.2 24.2)"/><ellipse cx="70.8" cy="8.4" rx="3.1" ry="1.2" fill="#3b463d" transform="rotate(37 70.8 8.4)"/><ellipse cx="24.7" cy="1.3" rx="1.5" ry="0.8" fill="#222a23" transform="rotate(54 24.7 1.3)"/><ellipse cx="43.9" cy="10.1" rx="3.0" ry="1.0" fill="#3b463d" transform="rotate(55 43.9 10.1)"/><ellipse cx="92.0" cy="35.8" rx="1.4" ry="1.6" fill="#222a23" transform="rotate(-7 92.0 35.8)"/><ellipse cx="60.9" cy="35.1" rx="3.8" ry="1.6" fill="#323e33" transform="rotate(-31 60.9 35.1)"/><ellipse cx="28.7" cy="20.5" rx="3.6" ry="1.7" fill="#3b463d" transform="rotate(-33 28.7 20.5)"/><ellipse cx="51.4" cy="20.6" rx="2.2" ry="2.0" fill="#323e33" transform="rotate(14 51.4 20.6)"/><ellipse cx="57.6" cy="10.4" rx="1.9" ry="1.1" fill="#3b463d" transform="rotate(6 57.6 10.4)"/><ellipse cx="95.7" cy="14.0" rx="3.8" ry="1.0" fill="#222a23" transform="rotate(-21 95.7 14.0)"/><ellipse cx="46.7" cy="8.6" rx="3.7" ry="1.1" fill="#2a342c" transform="rotate(33 46.7 8.6)"/><ellipse cx="34.1" cy="-0.1" rx="3.6" ry="1.4" fill="#2a342c" transform="rotate(2 34.1 -0.1)"/><ellipse cx="85.4" cy="12.2" rx="3.3" ry="1.5" fill="#222a23" transform="rotate(-10 85.4 12.2)"/><ellipse cx="72.8" cy="3.0" rx="1.8" ry="1.7" fill="#323e33" transform="rotate(39 72.8 3.0)"/><ellipse cx="61.4" cy="28.8" rx="3.3" ry="1.9" fill="#1a201b" transform="rotate(-28 61.4 28.8)"/><ellipse cx="69.9" cy="24.2" rx="3.2" ry="1.4" fill="#2a342c" transform="rotate(-59 69.9 24.2)"/><ellipse cx="80.2" cy="22.2" rx="2.6" ry="2.1" fill="#3b463d" transform="rotate(-42 80.2 22.2)"/><ellipse cx="86.6" cy="9.0" rx="2.9" ry="1.0" fill="#1a201b" transform="rotate(23 86.6 9.0)"/><ellipse cx="43.9" cy="12.2" rx="2.2" ry="1.5" fill="#3b463d" transform="rotate(-14 43.9 12.2)"/><ellipse cx="46.5" cy="30.8" rx="3.6" ry="1.5" fill="#1a201b" transform="rotate(-24 46.5 30.8)"/><ellipse cx="62.8" cy="31.5" rx="2.4" ry="1.3" fill="#222a23" transform="rotate(-49 62.8 31.5)"/><ellipse cx="91.9" cy="10.9" rx="3.6" ry="2.0" fill="#323e33" transform="rotate(-35 91.9 10.9)"/><ellipse cx="54.4" cy="36.2" rx="1.2" ry="0.9" fill="#3b463d" transform="rotate(48 54.4 36.2)"/><ellipse cx="44.8" cy="20.1" rx="2.1" ry="1.7" fill="#1a201b" transform="rotate(2 44.8 20.1)"/><ellipse cx="61.3" cy="26.5" rx="2.3" ry="1.3" fill="#3b463d" transform="rotate(21 61.3 26.5)"/><ellipse cx="56.4" cy="-2.6" rx="1.4" ry="1.1" fill="#1a201b" transform="rotate(-15 56.4 -2.6)"/><ellipse cx="52.5" cy="21.1" rx="2.8" ry="2.0" fill="#1a201b" transform="rotate(-2 52.5 21.1)"/><ellipse cx="55.5" cy="23.9" rx="4.0" ry="1.3" fill="#3b463d" transform="rotate(30 55.5 23.9)"/><ellipse cx="29.0" cy="12.6" rx="2.2" ry="0.9" fill="#323e33" transform="rotate(2 29.0 12.6)"/><ellipse cx="30.4" cy="35.5" rx="3.1" ry="1.9" fill="#3b463d" transform="rotate(47 30.4 35.5)"/><ellipse cx="54.0" cy="3.7" rx="2.0" ry="1.5" fill="#3b463d" transform="rotate(47 54.0 3.7)"/><ellipse cx="53.3" cy="-0.4" rx="2.8" ry="0.9" fill="#3b463d" transform="rotate(59 53.3 -0.4)"/><ellipse cx="70.4" cy="-1.2" rx="2.4" ry="1.9" fill="#323e33" transform="rotate(25 70.4 -1.2)"/><ellipse cx="64.0" cy="36.4" rx="2.3" ry="0.9" fill="#2a342c" transform="rotate(20 64.0 36.4)"/><ellipse cx="36.9" cy="18.4" rx="2.7" ry="1.2" fill="#3b463d" transform="rotate(2 36.9 18.4)"/><ellipse cx="32.9" cy="5.5" rx="2.9" ry="1.0" fill="#3b463d" transform="rotate(31 32.9 5.5)"/><ellipse cx="30.1" cy="1.3" rx="1.7" ry="1.5" fill="#1a201b" transform="rotate(14 30.1 1.3)"/><ellipse cx="83.3" cy="-0.3" rx="1.2" ry="1.9" fill="#323e33" transform="rotate(-43 83.3 -0.3)"/><ellipse cx="40.1" cy="8.8" rx="1.3" ry="1.7" fill="#3b463d" transform="rotate(-52 40.1 8.8)"/><ellipse cx="36.6" cy="23.8" rx="1.3" ry="1.1" fill="#1a201b" transform="rotate(10 36.6 23.8)"/><ellipse cx="94.9" cy="15.9" rx="2.9" ry="1.1" fill="#2a342c" transform="rotate(-41 94.9 15.9)"/><ellipse cx="66.6" cy="4.5" rx="1.2" ry="2.0" fill="#1a201b" transform="rotate(-24 66.6 4.5)"/><ellipse cx="67.8" cy="38.3" rx="2.6" ry="2.1" fill="#222a23" transform="rotate(21 67.8 38.3)"/><ellipse cx="73.3" cy="22.1" rx="2.4" ry="1.4" fill="#1a201b" transform="rotate(-57 73.3 22.1)"/><ellipse cx="88.0" cy="0.8" rx="1.7" ry="1.3" fill="#2a342c" transform="rotate(57 88.0 0.8)"/><ellipse cx="44.1" cy="21.1" rx="1.5" ry="1.5" fill="#1a201b" transform="rotate(-20 44.1 21.1)"/><ellipse cx="71.5" cy="38.3" rx="2.4" ry="2.1" fill="#3b463d" transform="rotate(-31 71.5 38.3)"/><ellipse cx="36.5" cy="9.2" rx="1.9" ry="0.8" fill="#2a342c" transform="rotate(-19 36.5 9.2)"/><ellipse cx="33.8" cy="27.4" rx="1.5" ry="1.2" fill="#222a23" transform="rotate(7 33.8 27.4)"/><ellipse cx="57.5" cy="31.2" rx="1.9" ry="1.3" fill="#222a23" transform="rotate(27 57.5 31.2)"/><ellipse cx="50.6" cy="38.2" rx="1.8" ry="2.1" fill="#3b463d" transform="rotate(-35 50.6 38.2)"/><ellipse cx="87.2" cy="26.0" rx="3.8" ry="2.2" fill="#3b463d" transform="rotate(48 87.2 26.0)"/><ellipse cx="66.7" cy="12.8" rx="1.9" ry="1.7" fill="#222a23" transform="rotate(-45 66.7 12.8)"/><ellipse cx="79.1" cy="26.1" rx="1.5" ry="2.0" fill="#1a201b" transform="rotate(-57 79.1 26.1)"/><ellipse cx="76.6" cy="3.2" rx="1.2" ry="1.8" fill="#222a23" transform="rotate(33 76.6 3.2)"/><ellipse cx="39.6" cy="5.1" rx="3.7" ry="0.9" fill="#323e33" transform="rotate(37 39.6 5.1)"/><ellipse cx="79.6" cy="5.3" rx="3.2" ry="0.9" fill="#323e33" transform="rotate(-45 79.6 5.3)"/><ellipse cx="76.5" cy="9.1" rx="2.3" ry="2.1" fill="#222a23" transform="rotate(52 76.5 9.1)"/><ellipse cx="35.4" cy="12.8" rx="3.4" ry="1.8" fill="#1a201b" transform="rotate(-57 35.4 12.8)"/><ellipse cx="75.5" cy="16.9" rx="4.0" ry="1.4" fill="#2a342c" transform="rotate(-38 75.5 16.9)"/><ellipse cx="30.8" cy="36.2" rx="3.3" ry="1.8" fill="#2a342c" transform="rotate(-11 30.8 36.2)"/><ellipse cx="68.2" cy="15.5" rx="3.3" ry="1.0" fill="#2a342c" transform="rotate(6 68.2 15.5)"/><ellipse cx="69.8" cy="37.5" rx="2.8" ry="1.1" fill="#1a201b" transform="rotate(26 69.8 37.5)"/><ellipse cx="41.4" cy="15.7" rx="3.1" ry="1.3" fill="#2a342c" transform="rotate(-47 41.4 15.7)"/><ellipse cx="80.0" cy="25.2" rx="3.7" ry="2.0" fill="#3b463d" transform="rotate(13 80.0 25.2)"/><ellipse cx="25.6" cy="7.5" rx="1.5" ry="1.9" fill="#222a23" transform="rotate(33 25.6 7.5)"/><ellipse cx="48.3" cy="36.3" rx="2.4" ry="1.8" fill="#3b463d" transform="rotate(39 48.3 36.3)"/><ellipse cx="43.4" cy="0.9" rx="3.8" ry="1.4" fill="#323e33" transform="rotate(23 43.4 0.9)"/><ellipse cx="78.1" cy="32.7" rx="3.0" ry="1.4" fill="#2a342c" transform="rotate(21 78.1 32.7)"/><ellipse cx="37.7" cy="25.9" rx="3.6" ry="1.9" fill="#1a201b" transform="rotate(31 37.7 25.9)"/><ellipse cx="25.3" cy="27.2" rx="3.5" ry="1.2" fill="#3b463d" transform="rotate(-40 25.3 27.2)"/><ellipse cx="81.3" cy="7.1" rx="1.9" ry="2.1" fill="#222a23" transform="rotate(-17 81.3 7.1)"/><ellipse cx="53.3" cy="5.7" rx="2.1" ry="1.0" fill="#1a201b" transform="rotate(20 53.3 5.7)"/><ellipse cx="40.1" cy="7.4" rx="2.6" ry="1.4" fill="#323e33" transform="rotate(24 40.1 7.4)"/><ellipse cx="32.1" cy="27.4" rx="2.8" ry="1.1" fill="#2a342c" transform="rotate(6 32.1 27.4)"/><ellipse cx="79.8" cy="4.3" rx="3.1" ry="1.6" fill="#1a201b" transform="rotate(41 79.8 4.3)"/><ellipse cx="52.9" cy="5.9" rx="3.1" ry="0.8" fill="#1a201b" transform="rotate(-35 52.9 5.9)"/><ellipse cx="26.6" cy="9.1" rx="1.8" ry="1.8" fill="#1a201b" transform="rotate(56 26.6 9.1)"/><ellipse cx="34.3" cy="16.1" rx="2.8" ry="1.2" fill="#3b463d" transform="rotate(-51 34.3 16.1)"/><ellipse cx="22.8" cy="39.7" rx="3.3" ry="0.9" fill="#323e33" transform="rotate(58 22.8 39.7)"/><ellipse cx="64.8" cy="1.7" rx="2.6" ry="1.4" fill="#222a23" transform="rotate(34 64.8 1.7)"/></g><circle cx="196.5" cy="31.5" r="3.2" fill="#e0b020"/><path d="M193.6 32.5 L196.5 37 L199.4 32.5 Z" fill="#e0b020"/><circle cx="288" cy="36.5" r="3.2" fill="#1a9a84"/><circle cx="288" cy="36.5" r="1.2" fill="#fff"/></g></svg>
<div class="a" style="left:0;top:116px;width:338px;height:1px;background:#2a2a2a"></div>
<div class="t" style="left:7px;top:90.5px;font-size:13.5px;color:#f2f2f2">Kleos 2022</div>
<div class="t" style="left:85px;top:90.5px;font-size:13.5px;color:#f2f2f2">//</div>
<div class="t" style="left:100.8px;top:90.7px;font-size:13.2px;color:#f2f2f2">Pasaje Valvanera / Trini 1</div>
<div class="a" style="left:338px;top:78px;width:677px;height:39px;background:#333333"></div>
<svg style="left:353px;top:90px" width="15" height="15" viewBox="0 0 15 15"><rect x="0.8" y="0.8" width="13.4" height="13.4" rx="1.5" stroke="#c9c9c9" stroke-width="1.5" fill="none"/><path d="M3.5 4.3 H4.8 M6.3 4.3 H11.5 M3.5 7.5 H4.8 M6.3 7.5 H11.5 M3.5 10.7 H4.8 M6.3 10.7 H11.5" stroke="#c9c9c9" stroke-width="1.4"/></svg>
<div class="t" style="left:376.5px;top:91px;font-size:13.6px;color:#cfcfcf">Info</div>
<svg style="left:424px;top:90px" width="20" height="15" viewBox="0 0 20 15"><path d="M0 7.5 H5 L6 5 L7 10 L8 2 L9 13 L10 4 L11 11 L12 6 L13 9 L14 7 L15 8 L16 7.5 H20" stroke="#66c32e" stroke-width="1.4" fill="none" stroke-linejoin="round"/></svg>
<div class="t" style="left:450.5px;top:91px;font-size:13.1px;color:#6cc637">Sonidos</div>
<svg style="left:526px;top:90px" width="17" height="15" viewBox="0 0 17 15"><path d="M0.5 2 L5.5 0.5 L11.5 2.5 L16.5 1 V13 L11.5 14.5 L5.5 12.5 L0.5 14 Z" fill="#c9c9c9"/><path d="M5.5 0.8 V12.3 M11.5 2.7 V14.2" stroke="#333" stroke-width="1.2"/></svg>
<div class="t" style="left:550.5px;top:91px;font-size:13.4px;color:#cfcfcf">Mapa</div>
<svg style="left:610px;top:89px" width="17" height="17" viewBox="0 0 17 17"><circle cx="8.5" cy="8.5" r="7.6" stroke="#c9c9c9" stroke-width="1.5" fill="none"/><path d="M6.6 5 L11.8 8.5 L6.6 12 Z" fill="#c9c9c9"/></svg>
<div class="t" style="left:635px;top:91px;font-size:13.5px;color:#cfcfcf">Tocar</div>
<div class="t" style="left:908.5px;top:91px;font-size:12.4px;font-weight:bold;color:#f2f2f2;-webkit-text-stroke:0;transform:scaleX(0.88);transform-origin:0 0">ES</div>
<div class="t" style="left:937px;top:91px;font-size:12.4px;color:#6a6a6a;transform:scaleX(0.9);transform-origin:0 0">EN</div>
<svg style="left:968px;top:89px" width="17" height="17" viewBox="0 0 17 17"><circle cx="8.5" cy="8.5" r="7.4" stroke="#5bb52e" stroke-width="1.6" fill="none"/><path d="M5.3 8.6 L7.6 10.8 L11.8 6.5" stroke="#5bb52e" stroke-width="1.6" fill="none"/></svg>
<svg style="left:993.5px;top:89px" width="17" height="17" viewBox="0 0 17 17"><circle cx="8.5" cy="8.5" r="7.6" stroke="#8a8a8a" stroke-width="1.5" fill="none"/><circle cx="8.5" cy="6.5" r="2.4" stroke="#8a8a8a" stroke-width="1.4" fill="none"/><path d="M3.8 13.8 C5 11.3 12 11.3 13.2 13.8" stroke="#8a8a8a" stroke-width="1.4" fill="none"/></svg>
<div class="a" style="left:338px;top:117px;width:677px;height:80px;background:#333333"></div>
<div class="a" style="left:338px;top:197px;width:677px;height:816px;background:#454545"></div>
<div class="a" style="left:338.00px;top:117px;width:79.00px;height:80px;background:#455f7e"></div>
<div class="a" style="left:423.86px;top:117px;width:79.00px;height:80px;background:#3e746c"></div>
<div class="a" style="left:509.72px;top:117px;width:79.00px;height:80px;background:#80d6a9"></div>
<div class="a" style="left:595.58px;top:117px;width:79.00px;height:80px;background:#7b5c37"></div>
<div class="a" style="left:681.44px;top:117px;width:79.00px;height:80px;background:#845257"></div>
<div class="a" style="left:767.30px;top:117px;width:79.00px;height:80px;background:#765b6b"></div>
<div class="a" style="left:853.16px;top:117px;width:79.00px;height:80px;background:#69577c"></div>
<div class="a" style="left:939.02px;top:117px;width:79.00px;height:80px;background:#585a6c"></div>
<div class="a" style="left:0;top:117px;width:338px;height:28px;background:#4f7098"></div>
<div class="t" style="left:2.5px;top:124.3px;font-size:13.3px;color:#f2f2f2">Pista-1</div>
<svg style="left:315.8px;top:122.1px" width="18" height="18" viewBox="0 0 18 18"><circle cx="9" cy="9" r="7.6" stroke="#d9dde2" stroke-width="1.5" fill="none"/><path d="M7 5.6 L12.2 9 L7 12.4 Z" fill="#d9dde2"/></svg>
<div class="a" style="left:0;top:145px;width:338px;height:323px;background:#5a96d8"></div>
<svg width="0" height="0" style="left:0;top:0"><defs><g id="wall"><rect width="57" height="56" fill="#dcdcd8"/><rect x="0" y="0" width="57" height="13" fill="#ecebe8"/><rect x="0" y="12" width="25" height="28" fill="#cfd0ca"/><rect x="0.5" y="16" width="10.5" height="24" fill="#a9b19c"/><path d="M3 16 V40 M6 16 V40 M9 16 V40" stroke="#d8dcd2" stroke-width="0.6"/><rect x="11" y="14" width="2" height="26" fill="#e2e2dc"/><rect x="13" y="17" width="12" height="23" fill="#c2c4ba"/><rect x="25" y="16" width="17" height="24" fill="#ebebe8"/><rect x="0" y="39" width="57" height="17" fill="#ababa7"/><rect x="0" y="49" width="57" height="7" fill="#a2a3a0"/><rect x="51" y="40" width="6" height="11" fill="#1e2022"/><circle cx="41.9" cy="12.9" r="1.0" fill="#2b4428"/><circle cx="53.1" cy="17.6" r="1.1" fill="#2b4428"/><circle cx="45.6" cy="13.8" r="1.0" fill="#34502f"/><circle cx="48.8" cy="35.4" r="1.4" fill="#2b4428"/><circle cx="42.4" cy="34.6" r="1.3" fill="#34502f"/><circle cx="10.5" cy="2.9" r="0.6" fill="#5f8054"/><circle cx="38.1" cy="12.0" r="0.8" fill="#5f8054"/><circle cx="24.1" cy="2.8" r="0.8" fill="#6a8a60"/><circle cx="50.3" cy="49.8" r="0.8" fill="#6a8a60"/><circle cx="41.1" cy="30.5" r="1.2" fill="#5f8054"/><circle cx="51.1" cy="5.4" r="1.3" fill="#34502f"/><circle cx="12.9" cy="4.1" r="0.9" fill="#2b4428"/><circle cx="49.5" cy="26.8" r="1.2" fill="#42663b"/><circle cx="26.8" cy="6.0" r="1.2" fill="#2b4428"/><circle cx="13.4" cy="0.5" r="1.0" fill="#34502f"/><circle cx="45.8" cy="2.6" r="0.8" fill="#5f8054"/><circle cx="50.7" cy="15.2" r="0.9" fill="#34502f"/><circle cx="54.0" cy="10.0" r="0.8" fill="#5f8054"/><circle cx="46.9" cy="18.4" r="1.1" fill="#5f8054"/><circle cx="23.9" cy="2.1" r="0.6" fill="#4d7244"/><circle cx="44.5" cy="43.2" r="0.7" fill="#34502f"/><circle cx="50.0" cy="19.7" r="1.1" fill="#4d7244"/><circle cx="18.2" cy="5.9" r="1.3" fill="#42663b"/><circle cx="28.9" cy="13.8" r="0.8" fill="#5f8054"/><circle cx="47.7" cy="13.2" r="1.1" fill="#42663b"/><circle cx="39.4" cy="1.2" r="0.7" fill="#34502f"/><circle cx="23.5" cy="2.3" r="0.9" fill="#6a8a60"/><circle cx="53.0" cy="6.9" r="0.7" fill="#5f8054"/><circle cx="44.4" cy="12.8" r="1.1" fill="#5f8054"/><circle cx="44.2" cy="13.0" r="1.2" fill="#42663b"/><circle cx="15.8" cy="1.5" r="0.7" fill="#34502f"/><circle cx="42.3" cy="1.8" r="0.7" fill="#4d7244"/><circle cx="34.6" cy="10.8" r="1.1" fill="#5f8054"/><circle cx="10.5" cy="0.1" r="1.2" fill="#4d7244"/><circle cx="50.5" cy="10.9" r="0.7" fill="#2b4428"/><circle cx="28.4" cy="2.2" r="1.0" fill="#2b4428"/><circle cx="49.4" cy="46.0" r="0.7" fill="#6a8a60"/><circle cx="42.3" cy="23.7" r="1.3" fill="#2b4428"/><circle cx="52.9" cy="26.7" r="1.1" fill="#2b4428"/><circle cx="49.7" cy="25.3" r="0.7" fill="#5f8054"/><circle cx="11.6" cy="1.0" r="1.2" fill="#2b4428"/><circle cx="47.5" cy="8.1" r="1.0" fill="#2b4428"/><circle cx="48.3" cy="30.7" r="1.1" fill="#4d7244"/><circle cx="31.4" cy="10.6" r="1.2" fill="#2b4428"/><circle cx="54.2" cy="29.5" r="0.8" fill="#4d7244"/><circle cx="43.5" cy="18.1" r="1.1" fill="#4d7244"/><circle cx="52.5" cy="4.6" r="0.8" fill="#6a8a60"/><circle cx="50.2" cy="42.1" r="1.3" fill="#42663b"/><circle cx="42.7" cy="4.4" r="0.7" fill="#42663b"/><circle cx="52.7" cy="0.6" r="1.4" fill="#34502f"/><circle cx="29.4" cy="7.4" r="1.3" fill="#4d7244"/><circle cx="48.8" cy="25.3" r="0.9" fill="#6a8a60"/><circle cx="44.6" cy="49.3" r="1.3" fill="#34502f"/><circle cx="43.4" cy="9.5" r="1.1" fill="#4d7244"/><circle cx="49.3" cy="0.3" r="0.9" fill="#42663b"/><circle cx="48.6" cy="3.7" r="1.2" fill="#42663b"/><circle cx="42.6" cy="14.6" r="1.1" fill="#5f8054"/><circle cx="48.2" cy="48.3" r="1.3" fill="#42663b"/><circle cx="46.9" cy="10.6" r="1.2" fill="#5f8054"/><circle cx="32.7" cy="5.6" r="1.4" fill="#6a8a60"/><circle cx="40.1" cy="49.9" r="1.3" fill="#6a8a60"/><circle cx="23.1" cy="6.9" r="1.0" fill="#42663b"/><circle cx="52.4" cy="0.1" r="1.1" fill="#5f8054"/><circle cx="53.1" cy="41.9" r="0.9" fill="#2b4428"/><circle cx="54.0" cy="14.0" r="1.3" fill="#6a8a60"/><circle cx="13.4" cy="1.8" r="1.4" fill="#34502f"/><circle cx="43.8" cy="41.6" r="1.3" fill="#6a8a60"/><circle cx="26.6" cy="7.5" r="0.9" fill="#5f8054"/><circle cx="53.4" cy="3.1" r="0.9" fill="#34502f"/><circle cx="17.5" cy="4.6" r="1.0" fill="#42663b"/><circle cx="46.1" cy="46.0" r="1.2" fill="#6a8a60"/><circle cx="55.0" cy="29.7" r="1.2" fill="#34502f"/><circle cx="41.9" cy="11.6" r="1.1" fill="#5f8054"/><circle cx="47.0" cy="43.7" r="1.1" fill="#4d7244"/><circle cx="47.6" cy="44.8" r="1.3" fill="#4d7244"/><circle cx="49.1" cy="31.0" r="0.9" fill="#42663b"/><circle cx="10.1" cy="1.1" r="1.4" fill="#5f8054"/><circle cx="53.0" cy="26.0" r="0.7" fill="#5f8054"/><circle cx="12.3" cy="3.9" r="0.9" fill="#2b4428"/><circle cx="42.2" cy="46.9" r="1.0" fill="#2b4428"/><circle cx="52.8" cy="13.1" r="1.0" fill="#2b4428"/><circle cx="15.9" cy="0.2" r="0.7" fill="#4d7244"/><circle cx="43.9" cy="10.9" r="0.6" fill="#42663b"/><circle cx="47.2" cy="3.4" r="0.7" fill="#2b4428"/><circle cx="48.7" cy="14.9" r="1.2" fill="#4d7244"/><circle cx="38.8" cy="45.1" r="0.9" fill="#6a8a60"/><circle cx="44.1" cy="16.4" r="1.0" fill="#6a8a60"/><circle cx="30.9" cy="8.5" r="1.3" fill="#5f8054"/><circle cx="47.7" cy="11.3" r="0.9" fill="#42663b"/><circle cx="53.5" cy="3.1" r="1.3" fill="#42663b"/><circle cx="13.4" cy="3.4" r="0.9" fill="#4d7244"/><circle cx="54.1" cy="7.6" r="0.7" fill="#6a8a60"/><circle cx="45.9" cy="0.2" r="1.1" fill="#42663b"/><circle cx="50.3" cy="5.1" r="1.0" fill="#6a8a60"/><circle cx="51.0" cy="30.1" r="1.2" fill="#42663b"/><circle cx="24.8" cy="12.2" r="1.0" fill="#5f8054"/><circle cx="43.8" cy="15.9" r="0.7" fill="#42663b"/><circle cx="33.1" cy="10.1" r="0.6" fill="#5f8054"/><circle cx="52.4" cy="28.5" r="0.9" fill="#4d7244"/><circle cx="35.3" cy="3.4" r="0.6" fill="#4d7244"/><circle cx="41.4" cy="43.8" r="0.9" fill="#2b4428"/><circle cx="53.5" cy="8.5" r="1.0" fill="#34502f"/><circle cx="22.5" cy="7.4" r="1.3" fill="#6a8a60"/><circle cx="46.6" cy="47.6" r="1.0" fill="#42663b"/><circle cx="42.7" cy="42.2" r="1.2" fill="#34502f"/><circle cx="44.9" cy="42.6" r="1.3" fill="#4d7244"/><circle cx="50.6" cy="40.7" r="0.8" fill="#2b4428"/><circle cx="49.5" cy="4.2" r="0.6" fill="#34502f"/><circle cx="44.4" cy="8.7" r="0.8" fill="#42663b"/><circle cx="44.2" cy="22.0" r="1.1" fill="#2b4428"/><circle cx="56.0" cy="25.6" r="0.8" fill="#6a8a60"/><circle cx="15.5" cy="3.3" r="1.1" fill="#34502f"/><circle cx="47.0" cy="20.3" r="1.2" fill="#34502f"/><circle cx="44.9" cy="10.4" r="1.3" fill="#4d7244"/><circle cx="55.2" cy="30.3" r="1.3" fill="#5f8054"/><circle cx="16.2" cy="3.9" r="1.1" fill="#5f8054"/><circle cx="55.0" cy="11.8" r="0.9" fill="#42663b"/><circle cx="46.7" cy="44.2" r="0.6" fill="#5f8054"/><circle cx="48.9" cy="26.8" r="0.8" fill="#5f8054"/><circle cx="44.8" cy="29.3" r="1.1" fill="#4d7244"/><circle cx="52.6" cy="11.1" r="0.6" fill="#5f8054"/><circle cx="48.1" cy="5.5" r="1.2" fill="#4d7244"/><circle cx="23.8" cy="9.4" r="1.2" fill="#34502f"/><circle cx="47.0" cy="3.5" r="0.6" fill="#42663b"/><circle cx="21.3" cy="7.9" r="1.4" fill="#42663b"/><circle cx="41.8" cy="34.1" r="0.9" fill="#5f8054"/><circle cx="22.1" cy="3.2" r="0.7" fill="#42663b"/><circle cx="45.4" cy="6.4" r="1.1" fill="#4d7244"/><circle cx="52.2" cy="24.6" r="1.4" fill="#42663b"/><circle cx="42.7" cy="19.5" r="1.2" fill="#4d7244"/><circle cx="45.1" cy="24.4" r="1.2" fill="#6a8a60"/><circle cx="45.2" cy="17.6" r="0.8" fill="#42663b"/><circle cx="55.4" cy="12.8" r="0.6" fill="#6a8a60"/><circle cx="13.8" cy="2.1" r="0.6" fill="#5f8054"/><circle cx="32.9" cy="11.3" r="0.7" fill="#6a8a60"/><circle cx="55.4" cy="6.8" r="0.8" fill="#4d7244"/><circle cx="47.8" cy="11.7" r="1.2" fill="#34502f"/><circle cx="50.3" cy="11.7" r="1.0" fill="#42663b"/><circle cx="43.3" cy="25.6" r="1.1" fill="#42663b"/><circle cx="49.2" cy="23.0" r="1.3" fill="#6a8a60"/><circle cx="44.9" cy="8.1" r="1.3" fill="#2b4428"/><circle cx="11.2" cy="2.0" r="1.3" fill="#2b4428"/><circle cx="50.4" cy="0.1" r="0.8" fill="#4d7244"/><circle cx="45.6" cy="13.3" r="1.2" fill="#6a8a60"/><circle cx="52.2" cy="3.1" r="1.2" fill="#6a8a60"/><circle cx="27.8" cy="11.2" r="1.1" fill="#5f8054"/><circle cx="43.8" cy="37.5" r="1.2" fill="#5f8054"/><circle cx="34.2" cy="6.2" r="1.3" fill="#6a8a60"/><circle cx="35.6" cy="5.6" r="1.1" fill="#4d7244"/><circle cx="50.0" cy="41.8" r="1.2" fill="#4d7244"/><circle cx="47.1" cy="43.5" r="0.7" fill="#42663b"/><circle cx="51.4" cy="11.4" r="1.0" fill="#42663b"/><circle cx="54.8" cy="32.7" r="1.3" fill="#6a8a60"/><circle cx="42.6" cy="4.3" r="0.7" fill="#5f8054"/><circle cx="20.3" cy="7.3" r="0.6" fill="#34502f"/><circle cx="53.2" cy="13.9" r="0.8" fill="#2b4428"/><circle cx="48.5" cy="7.3" r="0.9" fill="#2b4428"/><circle cx="55.0" cy="9.4" r="1.0" fill="#2b4428"/><circle cx="50.3" cy="12.9" r="0.9" fill="#34502f"/><circle cx="52.5" cy="36.7" r="1.3" fill="#2b4428"/><circle cx="47.6" cy="48.3" r="0.9" fill="#5f8054"/><circle cx="11.5" cy="3.5" r="0.8" fill="#42663b"/><circle cx="44.3" cy="9.6" r="0.8" fill="#4d7244"/><circle cx="33.3" cy="14.2" r="1.0" fill="#34502f"/><circle cx="43.3" cy="22.1" r="1.3" fill="#42663b"/><circle cx="48.2" cy="10.7" r="0.9" fill="#34502f"/><circle cx="35.5" cy="8.7" r="1.2" fill="#5f8054"/><circle cx="43.8" cy="19.0" r="0.9" fill="#4d7244"/><circle cx="47.5" cy="47.5" r="1.0" fill="#5f8054"/><circle cx="52.4" cy="12.8" r="1.1" fill="#4d7244"/><circle cx="53.9" cy="13.7" r="0.6" fill="#2b4428"/><circle cx="44.7" cy="42.1" r="1.2" fill="#5f8054"/><circle cx="39.8" cy="41.5" r="1.3" fill="#42663b"/><circle cx="45.0" cy="46.2" r="1.2" fill="#42663b"/><circle cx="43.4" cy="16.3" r="0.7" fill="#4d7244"/><circle cx="40.8" cy="42.4" r="1.4" fill="#6a8a60"/><circle cx="41.1" cy="2.1" r="0.6" fill="#42663b"/><circle cx="51.0" cy="43.8" r="0.9" fill="#34502f"/><circle cx="53.9" cy="31.1" r="1.0" fill="#6a8a60"/><circle cx="53.0" cy="33.5" r="0.6" fill="#4d7244"/><circle cx="30.2" cy="10.5" r="0.8" fill="#2b4428"/><circle cx="42.9" cy="31.0" r="0.9" fill="#4d7244"/><circle cx="41.8" cy="14.0" r="1.2" fill="#6a8a60"/><circle cx="46.0" cy="1.5" r="1.1" fill="#2b4428"/><circle cx="40.8" cy="41.4" r="0.6" fill="#2b4428"/><circle cx="46.7" cy="3.3" r="0.7" fill="#5f8054"/><circle cx="51.2" cy="44.2" r="0.8" fill="#6a8a60"/><circle cx="46.6" cy="21.6" r="1.2" fill="#5f8054"/><circle cx="47.5" cy="40.2" r="0.8" fill="#34502f"/><circle cx="47.4" cy="4.6" r="1.1" fill="#4d7244"/><circle cx="53.4" cy="23.3" r="0.7" fill="#34502f"/><circle cx="50.5" cy="15.3" r="0.7" fill="#42663b"/><circle cx="50.8" cy="8.3" r="0.7" fill="#34502f"/><circle cx="23.8" cy="4.3" r="0.9" fill="#34502f"/><circle cx="40.2" cy="47.1" r="1.2" fill="#42663b"/><circle cx="46.0" cy="25.4" r="1.1" fill="#2b4428"/><circle cx="44.8" cy="34.5" r="1.1" fill="#42663b"/><circle cx="46.0" cy="10.7" r="0.8" fill="#4d7244"/><circle cx="41.8" cy="2.9" r="1.2" fill="#4d7244"/><circle cx="42.4" cy="34.5" r="1.3" fill="#5f8054"/><circle cx="48.5" cy="24.1" r="1.1" fill="#42663b"/><circle cx="53.9" cy="14.0" r="1.3" fill="#6a8a60"/><circle cx="54.2" cy="8.8" r="1.2" fill="#42663b"/><circle cx="16.7" cy="2.6" r="0.9" fill="#4d7244"/><circle cx="47.9" cy="24.4" r="1.0" fill="#34502f"/><circle cx="49.5" cy="19.5" r="1.0" fill="#5f8054"/><circle cx="54.6" cy="20.6" r="1.1" fill="#4d7244"/><circle cx="21.5" cy="2.5" r="0.8" fill="#4d7244"/><circle cx="41.5" cy="43.2" r="1.2" fill="#5f8054"/><circle cx="36.9" cy="11.3" r="0.7" fill="#6a8a60"/><circle cx="52.2" cy="43.9" r="1.1" fill="#5f8054"/><circle cx="44.0" cy="10.7" r="0.6" fill="#2b4428"/><circle cx="47.1" cy="14.7" r="1.0" fill="#4d7244"/><circle cx="42.2" cy="4.6" r="1.2" fill="#6a8a60"/><circle cx="45.0" cy="41.5" r="1.1" fill="#2b4428"/><circle cx="37.2" cy="9.0" r="1.1" fill="#6a8a60"/><circle cx="33.0" cy="13.1" r="1.3" fill="#2b4428"/><circle cx="47.5" cy="26.4" r="0.7" fill="#5f8054"/><circle cx="48.8" cy="23.2" r="1.3" fill="#2b4428"/><circle cx="25.7" cy="11.6" r="1.2" fill="#2b4428"/><circle cx="43.8" cy="40.1" r="1.3" fill="#5f8054"/><circle cx="51.0" cy="3.4" r="1.4" fill="#2b4428"/><circle cx="27.4" cy="14.0" r="0.8" fill="#5f8054"/><circle cx="31.5" cy="1.8" r="1.4" fill="#6a8a60"/><circle cx="44.8" cy="44.7" r="0.8" fill="#42663b"/><circle cx="53.9" cy="32.7" r="1.0" fill="#34502f"/><circle cx="22.4" cy="5.3" r="0.6" fill="#2b4428"/><circle cx="33.6" cy="5.2" r="1.0" fill="#34502f"/><circle cx="41.0" cy="2.0" r="1.1" fill="#6a8a60"/><circle cx="10.4" cy="2.9" r="0.9" fill="#4d7244"/><circle cx="20.9" cy="6.6" r="0.8" fill="#42663b"/><circle cx="40.4" cy="37.7" r="1.3" fill="#4d7244"/><circle cx="39.1" cy="2.5" r="1.4" fill="#6a8a60"/><circle cx="44.2" cy="2.7" r="1.1" fill="#34502f"/><circle cx="50.2" cy="13.5" r="1.3" fill="#4d7244"/><circle cx="51.4" cy="15.4" r="0.9" fill="#2b4428"/><circle cx="51.6" cy="1.7" r="0.8" fill="#6a8a60"/><circle cx="31.5" cy="10.2" r="0.9" fill="#4d7244"/><circle cx="47.2" cy="45.4" r="1.4" fill="#42663b"/><circle cx="44.4" cy="17.2" r="1.1" fill="#42663b"/><circle cx="23.8" cy="4.4" r="0.7" fill="#5f8054"/><circle cx="49.8" cy="10.3" r="0.8" fill="#5f8054"/><circle cx="45.3" cy="13.5" r="0.8" fill="#42663b"/><circle cx="41.5" cy="2.6" r="1.4" fill="#42663b"/><circle cx="16.5" cy="4.7" r="0.6" fill="#2b4428"/><circle cx="42.0" cy="12.4" r="1.3" fill="#6a8a60"/><circle cx="39.5" cy="0.5" r="1.0" fill="#4d7244"/><circle cx="47.4" cy="37.4" r="0.7" fill="#5f8054"/><circle cx="50.1" cy="16.6" r="1.1" fill="#42663b"/><circle cx="51.7" cy="20.2" r="0.8" fill="#6a8a60"/><circle cx="31.1" cy="9.0" r="0.8" fill="#2b4428"/><circle cx="55.1" cy="0.7" r="1.3" fill="#2b4428"/><circle cx="28.9" cy="1.4" r="1.2" fill="#2b4428"/><circle cx="52.2" cy="38.9" r="0.7" fill="#34502f"/><circle cx="48.4" cy="32.8" r="0.8" fill="#6a8a60"/><circle cx="14.4" cy="0.2" r="1.3" fill="#4d7244"/><circle cx="50.5" cy="41.2" r="0.7" fill="#2b4428"/><circle cx="44.8" cy="16.9" r="1.0" fill="#42663b"/><circle cx="46.9" cy="33.8" r="0.9" fill="#4d7244"/><circle cx="30.9" cy="14.5" r="0.7" fill="#34502f"/><circle cx="42.1" cy="34.0" r="1.0" fill="#6a8a60"/><circle cx="44.6" cy="11.6" r="0.7" fill="#5f8054"/><circle cx="33.5" cy="6.6" r="1.4" fill="#34502f"/><circle cx="54.0" cy="38.7" r="0.8" fill="#5f8054"/><circle cx="41.7" cy="3.4" r="0.7" fill="#2b4428"/><circle cx="33.9" cy="13.9" r="0.8" fill="#5f8054"/><circle cx="42.7" cy="13.9" r="0.9" fill="#6a8a60"/><circle cx="47.4" cy="44.6" r="1.0" fill="#42663b"/><circle cx="51.0" cy="5.3" r="0.8" fill="#34502f"/><circle cx="29.9" cy="8.7" r="1.0" fill="#42663b"/><circle cx="43.0" cy="10.6" r="1.0" fill="#2b4428"/><circle cx="52.6" cy="37.2" r="1.0" fill="#42663b"/><circle cx="25.5" cy="5.3" r="1.1" fill="#4d7244"/><circle cx="46.9" cy="39.7" r="1.3" fill="#5f8054"/><circle cx="46.4" cy="20.7" r="1.2" fill="#42663b"/><circle cx="44.6" cy="15.5" r="0.6" fill="#34502f"/><circle cx="36.3" cy="1.5" r="0.9" fill="#2b4428"/><circle cx="41.4" cy="30.8" r="1.1" fill="#2b4428"/><circle cx="30.0" cy="8.2" r="0.6" fill="#42663b"/><circle cx="37.6" cy="7.9" r="1.0" fill="#42663b"/><circle cx="47.8" cy="22.6" r="0.7" fill="#2b4428"/><circle cx="33.0" cy="10.7" r="0.7" fill="#2b4428"/><circle cx="42.5" cy="24.2" r="0.9" fill="#4d7244"/><circle cx="25.3" cy="1.8" r="1.0" fill="#6a8a60"/><circle cx="20.7" cy="6.2" r="1.1" fill="#6a8a60"/><circle cx="51.3" cy="18.6" r="0.7" fill="#6a8a60"/><circle cx="52.7" cy="25.0" r="0.7" fill="#4d7244"/><circle cx="36.6" cy="1.2" r="1.3" fill="#2b4428"/><circle cx="46.5" cy="3.1" r="0.8" fill="#2b4428"/><circle cx="51.7" cy="24.0" r="0.7" fill="#5f8054"/><circle cx="37.5" cy="2.4" r="0.8" fill="#5f8054"/><circle cx="54.7" cy="22.3" r="0.7" fill="#2b4428"/><circle cx="42.3" cy="46.5" r="1.0" fill="#2b4428"/><circle cx="45.8" cy="28.8" r="0.7" fill="#4d7244"/><circle cx="14.5" cy="2.0" r="0.8" fill="#4d7244"/><circle cx="48.0" cy="17.4" r="0.9" fill="#5f8054"/><circle cx="51.6" cy="11.2" r="1.2" fill="#42663b"/><circle cx="46.1" cy="34.8" r="0.7" fill="#2b4428"/><circle cx="16.5" cy="2.8" r="0.6" fill="#2b4428"/><circle cx="17.1" cy="2.0" r="1.0" fill="#4d7244"/><circle cx="18.5" cy="2.0" r="1.1" fill="#4d7244"/><circle cx="24.0" cy="9.2" r="0.6" fill="#2b4428"/><circle cx="50.1" cy="44.0" r="1.1" fill="#34502f"/><circle cx="53.2" cy="43.2" r="0.8" fill="#4d7244"/><circle cx="10.3" cy="2.5" r="1.2" fill="#42663b"/><circle cx="50.3" cy="48.6" r="0.9" fill="#42663b"/><circle cx="43.3" cy="42.2" r="0.8" fill="#2b4428"/><circle cx="44.1" cy="31.4" r="0.9" fill="#42663b"/><circle cx="49.3" cy="46.7" r="1.4" fill="#34502f"/><circle cx="43.0" cy="45.4" r="1.0" fill="#2b4428"/><circle cx="50.3" cy="11.6" r="1.3" fill="#2b4428"/><circle cx="13.6" cy="2.4" r="0.9" fill="#6a8a60"/><circle cx="51.7" cy="20.1" r="0.7" fill="#4d7244"/><circle cx="49.5" cy="18.2" r="1.1" fill="#42663b"/><circle cx="46.6" cy="8.7" r="1.2" fill="#4d7244"/><circle cx="15.3" cy="3.8" r="1.1" fill="#42663b"/><circle cx="51.3" cy="28.9" r="0.8" fill="#42663b"/><circle cx="32.1" cy="10.1" r="1.3" fill="#2b4428"/><circle cx="51.7" cy="11.9" r="1.3" fill="#34502f"/><circle cx="35.4" cy="8.0" r="0.9" fill="#34502f"/><circle cx="51.5" cy="43.3" r="0.9" fill="#42663b"/><circle cx="49.6" cy="11.7" r="0.8" fill="#4d7244"/><circle cx="43.1" cy="26.3" r="0.9" fill="#5f8054"/><circle cx="52.4" cy="31.8" r="1.0" fill="#42663b"/><circle cx="53.8" cy="32.2" r="0.9" fill="#2b4428"/><circle cx="52.3" cy="3.8" r="0.7" fill="#5f8054"/><circle cx="44.4" cy="21.0" r="0.8" fill="#2b4428"/><circle cx="42.6" cy="32.4" r="1.3" fill="#34502f"/><circle cx="26.5" cy="3.9" r="0.7" fill="#2b4428"/><circle cx="43.9" cy="49.7" r="0.9" fill="#34502f"/><ellipse cx="47" cy="51.5" rx="2.6" ry="2" fill="#b86a48"/><rect x="18" y="27" width="3.5" height="2.5" fill="#f5f5f5"/></g></defs></svg>
<div class="t" style="left:65.5px;top:148.6px;font-size:11.9px;letter-spacing:0px;color:#f4f4f4">Trini 1 historia del colegio.mp3</div>
<div class="t" style="right:681.5px;top:148.6px;font-size:11.9px;color:#f4f4f4">17.79s</div>
<svg style="left:2px;top:149px" width="57" height="56" viewBox="0 0 57 56"><use href="#wall"/><circle cx="28.5" cy="28" r="14.8" stroke="#5a96d8" stroke-width="3.0" fill="none" opacity="1.0"/><path d="M25.3 20.8 L34.9 28.0 L25.3 35.2 Z" fill="#5a96d8" opacity="1.0"/></svg>
<div class="t" style="left:65.5px;top:213.3px;font-size:11.9px;letter-spacing:0px;color:#f4f4f4">Bubulina Trini 1\2</div>
<div class="t" style="right:681.5px;top:213.3px;font-size:11.9px;color:#f4f4f4">29.68s</div>
<svg style="left:2px;top:213.75px" width="57" height="56" viewBox="0 0 57 56"><use href="#wall"/><circle cx="28.5" cy="28" r="14.8" stroke="#5a96d8" stroke-width="3.0" fill="none" opacity="1.0"/><path d="M25.3 20.8 L34.9 28.0 L25.3 35.2 Z" fill="#5a96d8" opacity="1.0"/></svg>
<div class="t" style="left:65.5px;top:278.1px;font-size:11.9px;letter-spacing:0px;color:#f4f4f4">Las plantas comestibles. Trini 5</div>
<div class="t" style="right:681.5px;top:278.1px;font-size:11.9px;color:#f4f4f4">33.28s</div>
<svg style="left:2px;top:278.5px" width="57" height="56" viewBox="0 0 57 56"><use href="#wall"/><circle cx="28.5" cy="28" r="14.8" stroke="#5a96d8" stroke-width="3.0" fill="none" opacity="1.0"/><path d="M25.3 20.8 L34.9 28.0 L25.3 35.2 Z" fill="#5a96d8" opacity="1.0"/></svg>
<div class="t" style="left:65.5px;top:342.9px;font-size:11.9px;letter-spacing:0px;color:#f4f4f4">Los indigenas y la compostela. Trini</div>
<div class="t" style="right:681.5px;top:342.9px;font-size:11.9px;color:#f4f4f4">19.46s</div>
<svg style="left:2px;top:343.25px" width="57" height="56" viewBox="0 0 57 56"><use href="#wall"/><circle cx="28.5" cy="28" r="14.8" stroke="#5a96d8" stroke-width="3.0" fill="none" opacity="1.0"/><path d="M25.3 20.8 L34.9 28.0 L25.3 35.2 Z" fill="#5a96d8" opacity="1.0"/></svg>
<div class="t" style="left:65.5px;top:407.6px;font-size:11.9px;letter-spacing:0px;color:#f4f4f4">la importancia de la lluvia. Trini</div>
<div class="t" style="right:681.5px;top:407.6px;font-size:11.9px;color:#f4f4f4">14.84s</div>
<svg style="left:2px;top:408px" width="57" height="56" viewBox="0 0 57 56"><use href="#wall"/><circle cx="28.5" cy="28" r="14.8" stroke="#5a96d8" stroke-width="3.0" fill="none" opacity="1.0"/><path d="M25.3 20.8 L34.9 28.0 L25.3 35.2 Z" fill="#5a96d8" opacity="1.0"/></svg>
<div class="a" style="left:0;top:468px;width:338px;height:28px;background:#45817a"></div>
<div class="t" style="left:2.5px;top:475.3px;font-size:13.3px;color:#f2f2f2">Pista-2</div>
<div class="a" style="left:0;top:496px;width:338px;height:29px;background:#4cc0b4"></div>
<div class="t" style="left:5px;top:503.6px;font-size:11.75px;color:#3b5f5a">Pulsa sobre el nombre de la pista para añadir sonidos.</div>
<div class="a" style="left:0;top:525px;width:338px;height:27px;background:#628a77"></div>
<div class="t" style="left:2.5px;top:531.8px;font-size:13.3px;color:#f2f2f2">Pista-3</div>
<svg style="left:315.8px;top:529.6px" width="18" height="18" viewBox="0 0 18 18"><circle cx="9" cy="9" r="7.6" stroke="#d9dde2" stroke-width="1.5" fill="none"/><path d="M7 5.6 L12.2 9 L7 12.4 Z" fill="#d9dde2"/></svg>
<div class="a" style="left:0;top:552px;width:338px;height:65px;background:#80d5a9;border:1px solid #d8f2e4;border-left:none"></div>
<div class="t" style="left:65.5px;top:555.6px;font-size:11.9px;letter-spacing:-0.22px;color:#f4f4f4">1. Sinawi Ensemble.mp3</div>
<div class="t" style="right:681.5px;top:555.6px;font-size:11.9px;color:#f4f4f4">48.61s</div>
<svg style="left:2px;top:557px" width="57" height="56" viewBox="0 0 57 56"><rect width="57" height="56" fill="#f2f2f2"/><ellipse cx="22" cy="10.5" rx="10" ry="7.5" fill="#5e433c"/><ellipse cx="30" cy="13" rx="7" ry="5.5" fill="#6a4c44"/><ellipse cx="19" cy="17" rx="4" ry="4" fill="#5e433c"/><path d="M3 13 Q6 11 9 13 Q13 11 16 13 Q19 14 18 18 Q19 22 16 23 Q12 25 9 23 Q5 24 4 21 Q2 17 3 13 Z" fill="#ffffff" stroke="#8a8a8a" stroke-width="0.6"/><ellipse cx="36.5" cy="15" rx="12.6" ry="5.8" fill="#f0b2d2"/><circle cx="29.6" cy="24" r="11.6" fill="#efb0d2"/><path d="M21 31.5 L40.7 31.5 L44.4 45 L17.4 45 Z" fill="#e8625c"/><rect x="9.5" y="34" width="5.5" height="3.5" fill="#ee6aa0"/><rect x="9.5" y="37.5" width="5.5" height="3.5" fill="#f0a040"/><rect x="9.5" y="41" width="5.5" height="3.5" fill="#d8c838"/><rect x="9.5" y="44.5" width="5.5" height="3.5" fill="#28a8a0"/><path d="M43.7 30.2 L53.7 30.2 L52.2 41.2 L45.2 41.2 Z" fill="#f2c4c6"/><circle cx="48.6" cy="35.8" r="3" fill="#2e7a50"/><path d="M48 30 L50 24" stroke="#2a6a48" stroke-width="1"/><rect x="21.7" y="48" width="9" height="2.6" rx="1" fill="#666"/><rect x="33.4" y="48" width="8" height="2.6" rx="1" fill="#666"/><circle cx="28.5" cy="28" r="14.8" stroke="#80d6a9" stroke-width="3.0" fill="none" opacity="1.0"/><path d="M25.3 20.8 L34.9 28.0 L25.3 35.2 Z" fill="#80d6a9" opacity="1.0"/></svg>
<div class="a" style="left:0;top:617px;width:338px;height:28px;background:#8a6a3e"></div>
<div class="t" style="left:2.5px;top:624.3px;font-size:13.3px;color:#f2f2f2">Pista-4</div>
<svg style="left:315.8px;top:622.1px" width="18" height="18" viewBox="0 0 18 18"><circle cx="9" cy="9" r="7.6" stroke="#d9dde2" stroke-width="1.5" fill="none"/><path d="M7 5.6 L12.2 9 L7 12.4 Z" fill="#d9dde2"/></svg>
<div class="a" style="left:0;top:645px;width:338px;height:64px;background:#d4913e"></div>
<div class="t" style="left:65.5px;top:648.6px;font-size:11.9px;letter-spacing:-0.1px;color:#f4f4f4">Nipponia 06 Esashi Oiwake.mp3</div>
<div class="t" style="right:681.5px;top:648.6px;font-size:11.9px;color:#f4f4f4">2m 30s</div>
<svg style="left:2px;top:649px" width="57" height="56" viewBox="0 0 57 56"><rect width="57" height="56" fill="#ececec"/><ellipse cx="40" cy="12" rx="15.5" ry="9.5" fill="#eeaacb"/><circle cx="27" cy="23" r="15" fill="#f0accb"/><circle cx="18.5" cy="24" r="4.5" fill="#ee86b0"/><path d="M22 2 L25 6 L28 1 L31 6 L34 2 L33 9 L23 9 Z" fill="#a89060" opacity="0.7"/><circle cx="35" cy="10" r="1.2" fill="#222"/><path d="M12 37 C18 34 40 34 45 37 L46 46 L12 46 Z" fill="#c9a340"/><rect x="10.5" y="45" width="38" height="8" fill="#1c1a18"/><text x="22" y="52.5" font-size="7" fill="#c9a544" font-family="Liberation Serif">GG</text><path d="M2 40 L12 42 M46 42 L56 39" stroke="#f0b0d0" stroke-width="2"/><circle cx="28.5" cy="28" r="14.8" stroke="#d4913e" stroke-width="3.0" fill="none" opacity="1.0"/><path d="M25.3 20.8 L34.9 28.0 L25.3 35.2 Z" fill="#d4913e" opacity="1.0"/></svg>
<div class="a" style="left:0;top:709px;width:338px;height:28px;background:#955b63"></div>
<div class="t" style="left:2.5px;top:716.3px;font-size:13.3px;color:#f2f2f2">Pista-5</div>
<svg style="left:315.8px;top:714.1px" width="18" height="18" viewBox="0 0 18 18"><circle cx="9" cy="9" r="7.6" stroke="#d9dde2" stroke-width="1.5" fill="none"/><path d="M7 5.6 L12.2 9 L7 12.4 Z" fill="#d9dde2"/></svg>
<div class="a" style="left:0;top:737px;width:338px;height:65px;background:#e6727b"></div>
<div class="t" style="left:65.5px;top:740.6px;font-size:11.9px;letter-spacing:-0.12px;color:#f4f4f4">Palmas sevillanas 160 bpm mp3.mp3</div>
<div class="t" style="right:681.5px;top:740.6px;font-size:11.9px;color:#f4f4f4">4.9s</div>
<svg style="left:2px;top:741px" width="57" height="56" viewBox="0 0 57 56"><defs><filter id="bl" x="-0.2" y="-0.2" width="1.4" height="1.4"><feGaussianBlur stdDeviation="1.2"/></filter></defs><rect width="57" height="56" fill="#f4f2f3"/><g filter="url(#bl)"><ellipse cx="40" cy="10" rx="13" ry="7.5" fill="#eda6cc"/><ellipse cx="24" cy="12" rx="12" ry="9" fill="#eda6cc"/><circle cx="28.5" cy="26" r="14" fill="#eaa0c6"/><path d="M14 31 L43 31 L42 46 L15 46 Z" fill="#e47888"/><path d="M3 28 L14 31 M43 31 L55 27" stroke="#f0b5d0" stroke-width="2.5"/></g><rect x="24" y="50" width="9" height="1.6" fill="#777"/><circle cx="28.5" cy="28" r="14.8" stroke="#e6727b" stroke-width="3.0" fill="none" opacity="0.92"/><path d="M25.3 20.8 L34.9 28.0 L25.3 35.2 Z" fill="#e6727b" opacity="0.85"/></svg>
<div class="a" style="left:0;top:802px;width:338px;height:27px;background:#836478"></div>
<div class="t" style="left:2.5px;top:808.8px;font-size:13.3px;color:#f2f2f2">Pista-6</div>
<svg style="left:315.8px;top:806.6px" width="18" height="18" viewBox="0 0 18 18"><circle cx="9" cy="9" r="7.6" stroke="#d9dde2" stroke-width="1.5" fill="none"/><path d="M7 5.6 L12.2 9 L7 12.4 Z" fill="#d9dde2"/></svg>
<div class="a" style="left:0;top:829px;width:338px;height:130px;background:#c283a8"></div>
<div class="t" style="left:65.5px;top:832.6px;font-size:11.9px;letter-spacing:-0.22px;color:#f4f4f4">1. Sinawi Ensemble.mp3</div>
<div class="t" style="right:681.5px;top:832.6px;font-size:11.9px;color:#f4f4f4">0.82s</div>
<svg style="left:2px;top:833px" width="57" height="56" viewBox="0 0 57 56"><rect width="57" height="56" fill="#ffffff"/><ellipse cx="27" cy="34" rx="22" ry="18" fill="#f4b4d6"/><ellipse cx="31" cy="11" rx="15" ry="8.5" fill="#f2b0d2"/><ellipse cx="44" cy="8" rx="5" ry="4.5" fill="#f0a6ca"/><circle cx="27.5" cy="7" r="3.4" fill="none" stroke="#333" stroke-width="1.1"/><circle cx="35" cy="6.5" r="3.4" fill="none" stroke="#333" stroke-width="1.1"/><path d="M11 40 Q28 44 46 40 L44 49 L13 49 Z" fill="#ffffff" stroke="#e2bccd" stroke-width="0.8"/><rect x="14" y="51" width="6" height="2.5" fill="#222"/><rect x="33" y="51" width="6" height="2.5" fill="#222"/><path d="M47 28 L55 25 M3 32 L8 35" stroke="#f0a8cc" stroke-width="1.8"/><circle cx="28.5" cy="28" r="14.8" stroke="#b07898" stroke-width="3.0" fill="none" opacity="0.85"/><path d="M25.3 20.8 L34.9 28.0 L25.3 35.2 Z" fill="#b07898" opacity="0.8"/></svg>
<div class="t" style="left:65.5px;top:897.6px;font-size:11.9px;letter-spacing:-0.22px;color:#f4f4f4">1. Sinawi Ensemble.mp3</div>
<div class="t" style="right:681.5px;top:897.6px;font-size:11.9px;color:#f4f4f4">1.79s</div>
<svg style="left:2px;top:898px" width="57" height="56" viewBox="0 0 57 56"><rect width="57" height="56" fill="#e9e9e9"/><ellipse cx="26" cy="17" rx="18" ry="12" fill="#f2aed0"/><ellipse cx="11" cy="8" rx="7" ry="5.5" fill="#f0a8cc" stroke="#444" stroke-width="0.8"/><circle cx="22" cy="8" r="2.6" fill="#fff" stroke="#333" stroke-width="0.9"/><ellipse cx="28" cy="26" rx="12" ry="7" fill="#f2aed0"/><ellipse cx="19" cy="24" rx="5" ry="5.5" fill="#1a1a1a"/><path d="M13 31 L44 31 L43 45 L14 45 Z" fill="#4080cc"/><rect x="16" y="47" width="9" height="8" rx="1.5" fill="#d0302a"/><rect x="31" y="47" width="9" height="8" rx="1.5" fill="#d0302a"/><path d="M3 33 L13 36 M44 36 L54 32" stroke="#f0a8cc" stroke-width="2.5"/><ellipse cx="50" cy="42" rx="4" ry="2.5" fill="#f0a8cc"/><circle cx="28.5" cy="28" r="14.8" stroke="#b07898" stroke-width="3.0" fill="none" opacity="0.85"/><path d="M25.3 20.8 L34.9 28.0 L25.3 35.2 Z" fill="#b07898" opacity="0.8"/></svg>
<div class="a" style="left:0;top:959px;width:338px;height:27px;background:#75648b"></div>
<div class="t" style="left:2.5px;top:965.8px;font-size:13.3px;color:#f2f2f2">Pista-7</div>
<svg style="left:315.8px;top:963.6px" width="18" height="18" viewBox="0 0 18 18"><circle cx="9" cy="9" r="7.6" stroke="#d9dde2" stroke-width="1.5" fill="none"/><path d="M7 5.6 L12.2 9 L7 12.4 Z" fill="#d9dde2"/></svg>
<div class="a" style="left:0;top:986px;width:338px;height:27px;background:repeating-linear-gradient(-45deg,#8064a8 0px,#8064a8 3.1px,#564a6c 3.1px,#564a6c 4.2px)"></div>
<div class="a" style="left:2px;top:990px;width:57px;height:30px;background:#333"></div>
<svg style="left:2px;top:990px" width="57" height="23" viewBox="0 0 57 23"><circle cx="28.5" cy="28" r="14.8" stroke="#a88ad8" stroke-width="3" fill="none"/><path d="M25.3 20.8 L34.9 28 L25.3 35.2 Z" fill="#a88ad8"/></svg>
<div class="t" style="left:65.5px;top:990.5px;font-size:11.8px;color:#f4f4f4">Musica completa</div>
<div class="t" style="right:681.5px;top:990.5px;font-size:11.8px;color:#f4f4f4">2m 15s</div>
<svg style="left:0;top:0" width="338" height="1013" viewBox="0 0 338 1013"><polygon points="65.5,173.2 66.8,171.3 68.1,171 69.4,171.3 70.7,172 72,171.7 73.3,172 74.6,172.4 75.9,172.9 77.2,172.5 78.5,172.8 79.9,172.9 81.2,172.9 82.5,173.4 83.8,173.2 85.1,173.1 86.4,172.1 87.7,172.8 89,172.5 90.3,172.6 91.6,173.3 92.9,172.9 94.2,172.9 95.5,173.5 96.8,173.5 98.1,173.3 99.4,173.3 100.7,173.2 102,173.1 103.3,173.2 104.6,172.2 106,172.8 107.3,173 108.6,173.1 109.9,173.2 111.2,172.9 112.5,173.3 113.8,173.4 115.1,173.5 116.4,173.6 117.7,173.6 119,173.2 120.3,171.3 121.6,169.4 122.9,168.9 124.2,167.9 125.5,169.8 126.8,170.3 128.1,170.2 129.4,171.1 130.7,171.2 132.1,170.7 133.4,170.9 134.7,171.8 136,172 137.3,172.2 138.6,171.7 139.9,171.5 141.2,170.6 142.5,170.1 143.8,170.7 145.1,170.4 146.4,171.2 147.7,171.2 149,171.3 150.3,172.7 151.6,171.9 152.9,172.2 154.2,173 155.5,172.6 156.8,172.7 158.1,172.6 159.5,172 160.8,169.7 162.1,169.2 163.4,169.6 164.7,169.3 166,169.8 167.3,169 168.6,170.1 169.9,170.8 171.2,170.4 172.5,171 173.8,171.9 175.1,172.7 176.4,171.8 177.7,171.4 179,170.9 180.3,170.8 181.6,171.3 182.9,171.3 184.2,172.3 185.6,172.3 186.9,171.8 188.2,171.9 189.5,172.2 190.8,172.9 192.1,173 193.4,172.8 194.7,173.1 196,173 197.3,173 198.6,172.7 199.9,171.1 201.2,169.5 202.5,170.3 203.8,170.4 205.1,170.2 206.4,169 207.7,170.2 209,170.2 210.3,170.2 211.6,170.7 213,170.8 214.3,170.6 215.6,170.9 216.9,171.5 218.2,171.7 219.5,171.8 220.8,171.2 222.1,169.7 223.4,169.5 224.7,168.9 226,169.2 227.3,169.8 228.6,170.1 229.9,170.4 231.2,171.4 232.5,170.8 233.8,171.3 235.1,171.8 236.4,171.2 237.7,170 239.1,168.6 240.4,169 241.7,169.4 243,170.8 244.3,171.1 245.6,171.6 246.9,171.2 248.2,171.7 249.5,171.5 250.8,171.2 252.1,169.4 253.4,169.5 254.7,169.7 256,170.7 257.3,170.9 258.6,171 259.9,171.3 261.2,172.2 262.5,171.5 263.8,172.3 265.1,172.8 266.5,172.7 267.8,173.1 269.1,172.8 270.4,172.8 271.7,173.1 273,173 274.3,173 275.6,172.1 276.9,169.2 278.2,168.4 279.5,167.9 280.8,169.5 282.1,168.7 283.4,169.5 284.7,170.4 286,169.6 287.3,169.6 288.6,170.3 289.9,169.4 291.2,168 292.6,168.2 293.9,167.7 295.2,168.6 296.5,168.6 297.8,170.3 299.1,169.4 300.4,169.9 301.7,171.1 303,171.1 304.3,172.1 305.6,172.1 306.9,171.7 308.2,171.7 309.5,172.5 310.8,172.3 312.1,172.6 313.4,171.8 314.7,171 316,168.8 317.3,169.6 318.7,169.1 320,170.6 321.3,170.7 322.6,170.8 323.9,171 325.2,171.9 326.5,171.7 327.8,172.6 329.1,172.3 330.4,172.3 331.7,173 331.7,178 330.4,177.7 329.1,178.2 327.8,178.8 326.5,178.8 325.2,179.3 323.9,179.7 322.6,179.9 321.3,179.1 320,179.5 318.7,181.2 317.3,181.9 316,181.9 314.7,179.7 313.4,178.4 312.1,178.6 310.8,177.6 309.5,177.7 308.2,178.4 306.9,177.9 305.6,178.1 304.3,178.9 303,179.8 301.7,179.4 300.4,180.1 299.1,180.6 297.8,181.9 296.5,181.4 295.2,182 293.9,182.6 292.6,183.3 291.2,182.8 289.9,180.5 288.6,179.6 287.3,179.9 286,180.9 284.7,182 283.4,181.9 282.1,181.5 280.8,181.3 279.5,182.7 278.2,182.4 276.9,181.8 275.6,178 274.3,177.6 273,177.5 271.7,177.5 270.4,177.5 269.1,177.7 267.8,178 266.5,177.8 265.1,177.7 263.8,178.8 262.5,178.3 261.2,178.5 259.9,179.6 258.6,180.3 257.3,180 256,180 254.7,181 253.4,182 252.1,181.2 250.8,179.8 249.5,179.7 248.2,179.7 246.9,179.2 245.6,178.6 244.3,179.3 243,180.2 241.7,181 240.4,181.9 239.1,181.6 237.7,180.7 236.4,178.6 235.1,178.7 233.8,179.3 232.5,179.6 231.2,180.2 229.9,180.3 228.6,180.8 227.3,181 226,181.6 224.7,181.3 223.4,180.3 222.1,180.3 220.8,179.4 219.5,178.1 218.2,179.4 216.9,180 215.6,179.3 214.3,179.9 213,180.1 211.6,180 210.3,181.2 209,180 207.7,181.4 206.4,181.1 205.1,180.4 203.8,180.6 202.5,181.2 201.2,179.8 199.9,180.7 198.6,179.1 197.3,177.8 196,177.3 194.7,177.8 193.4,177.6 192.1,177.6 190.8,178 189.5,178.4 188.2,177.9 186.9,178.8 185.6,178.9 184.2,178.7 182.9,178.9 181.6,179 180.3,180 179,179.8 177.7,178.9 176.4,179 175.1,178.5 173.8,179.7 172.5,179.7 171.2,180.5 169.9,180.4 168.6,181.2 167.3,180.7 166,180.9 164.7,180.6 163.4,181.6 162.1,181.7 160.8,180.9 159.5,177.9 158.1,177.9 156.8,177.6 155.5,178.3 154.2,178.3 152.9,178.3 151.6,178.3 150.3,179.1 149,178.7 147.7,179 146.4,179.9 145.1,179.9 143.8,180.3 142.5,180.4 141.2,179.1 139.9,178.5 138.6,179.1 137.3,178.4 136,178.6 134.7,179.1 133.4,179.5 132.1,179.2 130.7,180.2 129.4,179.9 128.1,180.8 126.8,180.9 125.5,182.3 124.2,182.5 122.9,182 121.6,182.7 120.3,179.2 119,177.6 117.7,177.3 116.4,177.2 115.1,177.4 113.8,177.5 112.5,177.1 111.2,177.8 109.9,177.4 108.6,177.4 107.3,177.4 106,177.8 104.6,177.4 103.3,177.9 102,177.6 100.7,177 99.4,177 98.1,177.2 96.8,177.2 95.5,177.2 94.2,177.5 92.9,177.5 91.6,177.4 90.3,177.4 89,177.9 87.7,177.7 86.4,177.8 85.1,177.8 83.8,178 82.5,177.5 81.2,177.7 79.9,177.9 78.5,177.3 77.2,178.1 75.9,177.6 74.6,178.2 73.3,178.1 72,178.5 70.7,179.2 69.4,178.7 68.1,179.6 66.8,178.5 65.5,177.3" fill="#efefef"/><polygon points="65.5,238.2 66.8,236.7 68.1,236.9 69.4,236.1 70.7,236.7 72,236.7 73.3,237.1 74.6,235.7 75.9,233.1 77.2,231 78.5,232.7 79.9,233.6 81.2,235.4 82.5,235.2 83.8,235.4 85.1,235.9 86.4,236.3 87.7,236.8 89,236.8 90.3,237.2 91.6,236.4 92.9,236 94.2,235.6 95.5,235.8 96.8,237.2 98.1,237.3 99.4,237.1 100.7,237.6 102,237.8 103.3,238 104.6,237.4 106,237.6 107.3,237.9 108.6,237.9 109.9,237.8 111.2,238 112.5,238.1 113.8,237 115.1,235.7 116.4,236.1 117.7,236.9 119,237.7 120.3,237.7 121.6,237.5 122.9,237.4 124.2,238.1 125.5,238.1 126.8,237.7 128.1,237.9 129.4,238 130.7,237.8 132.1,238.3 133.4,237.9 134.7,238 136,237.9 137.3,237.3 138.6,236 139.9,233.1 141.2,235.2 142.5,235.7 143.8,236.5 145.1,235.9 146.4,236.6 147.7,237.4 149,237.2 150.3,237.8 151.6,237.7 152.9,238.1 154.2,238 155.5,238.3 156.8,238.4 158.1,238.1 159.5,238.3 160.8,238.4 162.1,238.4 163.4,238.1 164.7,238.2 166,238.2 167.3,238.4 168.6,238.3 169.9,238.1 171.2,237.1 172.5,234.1 173.8,234.2 175.1,235.9 176.4,235.4 177.7,235.3 179,235.9 180.3,236.4 181.6,236.4 182.9,236.2 184.2,237.2 185.6,237.2 186.9,237.1 188.2,237 189.5,237 190.8,236.8 192.1,235.9 193.4,233.1 194.7,228.9 196,230.6 197.3,230.9 198.6,231.5 199.9,232.1 201.2,233.7 202.5,233.9 203.8,234 205.1,235.3 206.4,235.2 207.7,235.3 209,235.5 210.3,236.1 211.6,236.8 213,235.5 214.3,235.4 215.6,234.8 216.9,235.2 218.2,236.9 219.5,236.8 220.8,237.4 222.1,237.7 223.4,237.3 224.7,237.4 226,237 227.3,237.3 228.6,237.7 229.9,237.9 231.2,237.4 232.5,237.9 233.8,237.6 235.1,238.2 236.4,238.2 237.7,238.2 239.1,238 240.4,238.1 241.7,238.2 243,238 244.3,238.1 245.6,238.3 246.9,238.2 248.2,236.7 249.5,234.7 250.8,232.8 252.1,233 253.4,233.6 254.7,233.4 256,233.1 257.3,233.7 258.6,234.4 259.9,233.6 261.2,234.6 262.5,235.2 263.8,236 265.1,235.7 266.5,235.6 267.8,237.1 269.1,236.9 270.4,236.2 271.7,236.2 273,237.1 274.3,237 275.6,237.1 276.9,237 278.2,236.7 279.5,237.1 280.8,236.7 282.1,234.7 283.4,233.7 284.7,234.6 286,236 287.3,235.8 288.6,235.9 289.9,235.9 291.2,236.6 292.6,237.2 293.9,237.1 295.2,236.7 296.5,235.7 297.8,235.8 299.1,235.5 300.4,235.7 301.7,236.6 303,237 304.3,236.5 305.6,237.1 306.9,237 308.2,237.9 309.5,237.2 310.8,237.5 312.1,237.5 313.4,238.1 314.7,238 316,236.6 317.3,234.9 318.7,234.1 320,235.7 321.3,236.4 322.6,236.6 323.9,237.4 325.2,237.5 326.5,237.6 327.8,237.8 329.1,238.1 330.4,238.1 331.7,238 331.7,242.1 330.4,242.1 329.1,242.3 327.8,242.4 326.5,242.4 325.2,242.6 323.9,242.7 322.6,244 321.3,244 320,244.2 318.7,245.6 317.3,244.7 316,243 314.7,242.6 313.4,242.5 312.1,242.2 310.8,242.3 309.5,242.6 308.2,242.9 306.9,242.4 305.6,243.3 304.3,243.9 303,243.9 301.7,243.3 300.4,244.1 299.1,244.4 297.8,243.5 296.5,244.1 295.2,243.4 293.9,242.5 292.6,243 291.2,242.7 289.9,243.9 288.6,243.3 287.3,245.1 286,244.3 284.7,245.5 283.4,246.2 282.1,245.7 280.8,243.3 279.5,242.9 278.2,243.1 276.9,243.3 275.6,243.5 274.3,243.1 273,242.8 271.7,243.1 270.4,244 269.1,243.7 267.8,242.9 266.5,244.2 265.1,243.8 263.8,245.1 262.5,245.2 261.2,245.9 259.9,245.2 258.6,246.4 257.3,246.6 256,246 254.7,246.7 253.4,246.4 252.1,246.4 250.8,246.1 249.5,245 248.2,242.6 246.9,242 245.6,241.9 244.3,241.8 243,241.9 241.7,241.8 240.4,241.8 239.1,241.9 237.7,242.2 236.4,241.8 235.1,242.2 233.8,242.5 232.5,242.1 231.2,242.3 229.9,242.4 228.6,243.1 227.3,243 226,242.7 224.7,242.8 223.4,242.6 222.1,242.5 220.8,243.2 219.5,243.8 218.2,244.3 216.9,244.4 215.6,244.3 214.3,245.2 213,244.4 211.6,244.2 210.3,244.5 209,244.1 207.7,244.3 206.4,243.8 205.1,245 203.8,245.2 202.5,245.4 201.2,247.3 199.9,247.4 198.6,247.3 197.3,249.4 196,250.9 194.7,250.5 193.4,246.4 192.1,244.4 190.8,243.3 189.5,242.6 188.2,243.1 186.9,243.6 185.6,243.4 184.2,242.8 182.9,244.1 181.6,244.1 180.3,243.4 179,244.7 177.7,244.1 176.4,245.3 175.1,244.2 173.8,245.7 172.5,245.1 171.2,243.8 169.9,241.8 168.6,241.7 167.3,241.9 166,241.8 164.7,241.7 163.4,241.7 162.1,241.9 160.8,242 159.5,241.7 158.1,241.7 156.8,241.8 155.5,242.2 154.2,242.3 152.9,242 151.6,242.2 150.3,242.3 149,243.1 147.7,242.7 146.4,243.5 145.1,244 143.8,243.8 142.5,244.5 141.2,246.2 139.9,246.3 138.6,245.7 137.3,242.9 136,242.1 134.7,242 133.4,242.2 132.1,242.2 130.7,241.9 129.4,242.3 128.1,242.4 126.8,241.9 125.5,241.9 124.2,242.2 122.9,242.2 121.6,242.2 120.3,242.9 119,243.1 117.7,243.5 116.4,242.8 115.1,243.8 113.8,242.9 112.5,242.3 111.2,241.9 109.9,242.1 108.6,241.9 107.3,242.3 106,242.1 104.6,242.6 103.3,242.3 102,242.4 100.7,243.3 99.4,243.3 98.1,243.3 96.8,243.5 95.5,243.9 94.2,244.1 92.9,244.8 91.6,243.7 90.3,243 89,242.6 87.7,242.6 86.4,243.1 85.1,243.2 83.8,244.8 82.5,245.2 81.2,245.1 79.9,246.1 78.5,248.5 77.2,247.4 75.9,247.7 74.6,244.4 73.3,242.7 72,243.3 70.7,243.4 69.4,244.6 68.1,243.6 66.8,243 65.5,242.1" fill="#efefef"/><polygon points="65.5,303.1 66.8,302 68.1,300.9 69.4,300.7 70.7,300.9 72,301.4 73.3,302.2 74.6,300.2 75.9,299 77.2,298.1 78.5,300.1 79.9,300.1 81.2,299.8 82.5,300.7 83.8,300.9 85.1,300.8 86.4,300.5 87.7,299.7 89,299.1 90.3,299.9 91.6,301 92.9,301.1 94.2,302 95.5,301.5 96.8,301.6 98.1,302 99.4,301.4 100.7,300.6 102,301.4 103.3,301.4 104.6,301.5 106,301.9 107.3,302.1 108.6,302.4 109.9,302.2 111.2,302.3 112.5,302.9 113.8,302.7 115.1,302.5 116.4,302.7 117.7,302.8 119,302.9 120.3,302.8 121.6,303 122.9,303 124.2,302.3 125.5,300.5 126.8,300.1 128.1,300.7 129.4,301.7 130.7,300.9 132.1,301.8 133.4,301.6 134.7,301.7 136,302.4 137.3,302 138.6,302.3 139.9,302.1 141.2,302.7 142.5,302.6 143.8,302.5 145.1,302.9 146.4,302.7 147.7,302.7 149,302.7 150.3,303.1 151.6,303.1 152.9,302.8 154.2,303.1 155.5,303 156.8,302.9 158.1,303.2 159.5,302.9 160.8,303.2 162.1,303.1 163.4,303.1 164.7,303.1 166,303.2 167.3,303 168.6,302.5 169.9,300.7 171.2,301.4 172.5,301.6 173.8,301.5 175.1,301.3 176.4,301.5 177.7,301.5 179,301.9 180.3,302.2 181.6,301.4 182.9,300.8 184.2,299.3 185.6,300.8 186.9,299.7 188.2,299.7 189.5,300 190.8,300.5 192.1,301.2 193.4,301 194.7,301.2 196,302 197.3,301.8 198.6,302.6 199.9,302 201.2,301.5 202.5,300.1 203.8,298.8 205.1,299.9 206.4,299.7 207.7,300.8 209,301.2 210.3,301.9 211.6,302.3 213,301.7 214.3,301.4 215.6,302.3 216.9,302.4 218.2,302.5 219.5,302.2 220.8,302.4 222.1,302.4 223.4,302.7 224.7,302.4 226,302.8 227.3,302.5 228.6,302.2 229.9,298.8 231.2,298.3 232.5,298.3 233.8,298.6 235.1,299.5 236.4,299.6 237.7,299.6 239.1,299.9 240.4,301 241.7,300.8 243,300.9 244.3,301.5 245.6,302 246.9,301.7 248.2,302.7 249.5,302.2 250.8,301.1 252.1,299.5 253.4,297.7 254.7,299.2 256,299.8 257.3,299 258.6,300.1 259.9,300.7 261.2,300.7 262.5,301.1 263.8,300.9 265.1,301.7 266.5,301.5 267.8,301.6 269.1,301.8 270.4,302 271.7,302.1 273,302.3 274.3,302.6 275.6,302.4 276.9,302.7 278.2,302.8 279.5,302.8 280.8,302.6 282.1,302.9 283.4,302.6 284.7,302 286,300.2 287.3,301.5 288.6,301.2 289.9,301.6 291.2,301.7 292.6,302.1 293.9,302.5 295.2,301.9 296.5,302.4 297.8,302.2 299.1,301.9 300.4,299.7 301.7,299 303,299.7 304.3,299 305.6,299.3 306.9,300.6 308.2,300.9 309.5,301.3 310.8,300.1 312.1,301.3 313.4,300.8 314.7,300.8 316,301.9 317.3,301.3 318.7,301.2 320,301.9 321.3,302.3 322.6,302.4 323.9,302.3 325.2,302.5 326.5,302.6 327.8,302.2 329.1,300.4 330.4,299.8 331.7,299.7 331.7,308.5 330.4,309.8 329.1,309.8 327.8,307.9 326.5,307.6 325.2,307.7 323.9,307.7 322.6,307.2 321.3,307.8 320,307.9 318.7,308.3 317.3,308 316,308.4 314.7,308.5 313.4,308.4 312.1,309.3 310.8,309.2 309.5,309.1 308.2,309 306.9,309.7 305.6,310 304.3,310.1 303,310.2 301.7,311.3 300.4,309.9 299.1,307.7 297.8,307.1 296.5,307.1 295.2,307.3 293.9,307.3 292.6,307.3 291.2,307.9 289.9,308.2 288.6,308.5 287.3,308.6 286,308.2 284.7,307.8 283.4,306.8 282.1,306.7 280.8,307.2 279.5,306.7 278.2,307.3 276.9,307 275.6,307 274.3,307.6 273,307.7 271.7,307.6 270.4,307.5 269.1,307.9 267.8,307.4 266.5,307.9 265.1,308.6 263.8,308 262.5,309.2 261.2,308.7 259.9,309.8 258.6,309.6 257.3,310.3 256,310 254.7,311.2 253.4,311.5 252.1,310.2 250.8,308 249.5,307.1 248.2,307.5 246.9,307.1 245.6,307.3 244.3,307.6 243,308.2 241.7,308.1 240.4,309.2 239.1,310.2 237.7,310 236.4,310.2 235.1,309.7 233.8,310 232.5,311.3 231.2,311.5 229.9,310.1 228.6,307.2 227.3,306.7 226,307.1 224.7,307 223.4,307 222.1,306.9 220.8,307.3 219.5,307.4 218.2,307.1 216.9,307.7 215.6,307.8 214.3,307.4 213,307.3 211.6,308 210.3,308 209,308.8 207.7,309.5 206.4,308.8 205.1,310.5 203.8,309.5 202.5,309.5 201.2,307.2 199.9,307.2 198.6,307 197.3,307.3 196,307.4 194.7,308.1 193.4,308.8 192.1,307.9 190.8,309.4 189.5,309 188.2,309 186.9,309.8 185.6,309.9 184.2,310.4 182.9,309.1 181.6,307.7 180.3,307.1 179,307.7 177.7,307.9 176.4,308.1 175.1,307.8 173.8,308.2 172.5,308 171.2,309 169.9,308.1 168.6,307.4 167.3,306.8 166,306.6 164.7,306.5 163.4,306.4 162.1,306.8 160.8,306.7 159.5,306.8 158.1,306.6 156.8,306.5 155.5,306.5 154.2,306.7 152.9,306.5 151.6,306.9 150.3,306.8 149,306.8 147.7,306.8 146.4,306.9 145.1,306.9 143.8,307 142.5,307.3 141.2,307.2 139.9,306.9 138.6,307.4 137.3,307.5 136,307.9 134.7,307.6 133.4,307.7 132.1,307.6 130.7,308 129.4,308.2 128.1,309.5 126.8,308.7 125.5,308.7 124.2,307.1 122.9,306.7 121.6,306.6 120.3,306.9 119,306.6 117.7,306.8 116.4,306.7 115.1,307.1 113.8,307.2 112.5,307.1 111.2,307.4 109.9,307.2 108.6,307.1 107.3,307.9 106,308.1 104.6,307.6 103.3,308.3 102,309 100.7,308.3 99.4,308.4 98.1,307.4 96.8,307.2 95.5,307.3 94.2,308.1 92.9,308.3 91.6,308.5 90.3,309.4 89,309.1 87.7,310.1 86.4,309.7 85.1,308.6 83.8,308.2 82.5,309.4 81.2,309.9 79.9,309.9 78.5,309.5 77.2,310.4 75.9,311.2 74.6,309.5 73.3,308.4 72,307.7 70.7,308.6 69.4,308.6 68.1,308.5 66.8,307.5 65.5,306.6" fill="#efefef"/><polygon points="65.5,367.8 66.8,366.2 68.1,365.8 69.4,365.9 70.7,366.3 72,367 73.3,367.5 74.6,366.9 75.9,367.4 77.2,365.7 78.5,362.6 79.9,362.5 81.2,362.6 82.5,364.7 83.8,365.1 85.1,363.2 86.4,362.5 87.7,362.1 89,363.1 90.3,363.8 91.6,363.4 92.9,364.5 94.2,364.7 95.5,364.6 96.8,365 98.1,365.2 99.4,365.3 100.7,365.3 102,365.1 103.3,364.9 104.6,365.6 106,366.5 107.3,366.4 108.6,366.9 109.9,367 111.2,366.5 112.5,366.8 113.8,367.2 115.1,367 116.4,367.4 117.7,367.6 119,367.5 120.3,367.7 121.6,367.6 122.9,367.5 124.2,367.9 125.5,367.7 126.8,367.8 128.1,367.8 129.4,368 130.7,367.6 132.1,367.9 133.4,367.6 134.7,368 136,367.8 137.3,367.8 138.6,367.8 139.9,367.9 141.2,367.9 142.5,367.7 143.8,368 145.1,367.8 146.4,367.7 147.7,368 149,367.6 150.3,368 151.6,368 152.9,367.8 154.2,367.7 155.5,367.7 156.8,367.7 158.1,367.8 159.5,367.9 160.8,367.8 162.1,367.8 163.4,367.8 164.7,367.8 166,367.8 167.3,368.1 168.6,367.8 169.9,367.9 171.2,368 172.5,367.9 173.8,367.4 175.1,366.8 176.4,366.7 177.7,367.2 179,367.1 180.3,367.2 181.6,367.5 182.9,367.4 184.2,367.2 185.6,367.4 186.9,367.4 188.2,367.4 189.5,367.8 190.8,367.9 192.1,367.9 193.4,367.8 194.7,367.7 196,367.7 197.3,367.8 198.6,368 199.9,367.8 201.2,367.7 202.5,367.8 203.8,366.9 205.1,364.3 206.4,362.6 207.7,362.5 209,363.2 210.3,363.8 211.6,363.9 213,365 214.3,365.3 215.6,366.2 216.9,365.3 218.2,365.4 219.5,365.6 220.8,366.3 222.1,366.3 223.4,365.9 224.7,365.1 226,365 227.3,365 228.6,365.8 229.9,365.8 231.2,366.4 232.5,366.7 233.8,366.6 235.1,367.2 236.4,367.2 237.7,367 239.1,366.9 240.4,367.6 241.7,367.1 243,367.3 244.3,367.7 245.6,367.8 246.9,367.6 248.2,367.7 249.5,367.7 250.8,367.7 252.1,367.5 253.4,367.8 254.7,367.5 256,367.7 257.3,367.9 258.6,367.9 259.9,368 261.2,368 262.5,367.7 263.8,367.6 265.1,367.9 266.5,367.8 267.8,366.3 269.1,364.6 270.4,364.5 271.7,365.8 273,365.6 274.3,365.4 275.6,366.2 276.9,366.7 278.2,366.7 279.5,367 280.8,367.2 282.1,367.1 283.4,367.7 284.7,367.6 286,367.2 287.3,365.7 288.6,364.5 289.9,365 291.2,366.2 292.6,366 293.9,366.4 295.2,366.1 296.5,365.9 297.8,363.9 299.1,363.8 300.4,364.6 301.7,364 303,364.3 304.3,364.9 305.6,365.3 306.9,365.3 308.2,366.3 309.5,365.8 310.8,366 312.1,366.2 313.4,364.9 314.7,364.6 316,365.4 317.3,365.5 318.7,366.5 320,366 321.3,367 322.6,366.3 323.9,366.8 325.2,366.8 326.5,367.2 327.8,366.9 329.1,367.6 330.4,367.2 331.7,367.2 331.7,371.4 330.4,372 329.1,372 327.8,371.8 326.5,371.9 325.2,372.4 323.9,372.5 322.6,372.7 321.3,372.8 320,372.6 318.7,372.6 317.3,373 316,373.8 314.7,373.1 313.4,373.8 312.1,374 310.8,372.8 309.5,372.3 308.2,373.6 306.9,372.7 305.6,373.2 304.3,374.1 303,374.4 301.7,374.2 300.4,374.9 299.1,376.5 297.8,376.2 296.5,373.9 295.2,372.6 293.9,373.7 292.6,372.9 291.2,373.4 289.9,373.7 288.6,375 287.3,373.5 286,371.6 284.7,371.6 283.4,371.5 282.1,371.4 280.8,371.7 279.5,372.4 278.2,372.3 276.9,372.9 275.6,372.8 274.3,374 273,372.9 271.7,373.3 270.4,374.8 269.1,374.4 267.8,372.9 266.5,371.6 265.1,371.4 263.8,371.1 262.5,371.1 261.2,371.4 259.9,371.4 258.6,371.2 257.3,371.5 256,371.4 254.7,371.2 253.4,371.3 252.1,371.3 250.8,371.2 249.5,371.5 248.2,371.4 246.9,371.7 245.6,371.5 244.3,371.8 243,371.7 241.7,371.5 240.4,372.1 239.1,372.2 237.7,371.7 236.4,371.7 235.1,372.3 233.8,372.7 232.5,372.5 231.2,372.5 229.9,372.7 228.6,373.8 227.3,374.6 226,374.2 224.7,373.8 223.4,372.7 222.1,372.3 220.8,372.3 219.5,373.5 218.2,372.9 216.9,373.2 215.6,374.1 214.3,373.9 213,374 211.6,375.3 210.3,374.6 209,376.4 207.7,375.5 206.4,375.3 205.1,375.5 203.8,372.4 202.5,371.5 201.2,371.3 199.9,371.1 198.6,371.3 197.3,371.5 196,371.4 194.7,371.5 193.4,371.5 192.1,371.2 190.8,371.4 189.5,371.5 188.2,371.5 186.9,371.3 185.6,371.7 184.2,371.6 182.9,371.6 181.6,371.8 180.3,371.9 179,372.5 177.7,372.4 176.4,372 175.1,372.1 173.8,371.3 172.5,371.3 171.2,371.1 169.9,371.4 168.6,371.3 167.3,371.2 166,371.1 164.7,371.2 163.4,371 162.1,371.2 160.8,371.1 159.5,371.4 158.1,371.3 156.8,371.2 155.5,371.2 154.2,371.3 152.9,371.4 151.6,371.3 150.3,371.4 149,371.4 147.7,371.1 146.4,371.3 145.1,371.1 143.8,371.4 142.5,371.5 141.2,371.4 139.9,371.4 138.6,371.3 137.3,371.2 136,371.2 134.7,371.5 133.4,371.4 132.1,371.2 130.7,371.5 129.4,371.2 128.1,371.5 126.8,371.5 125.5,371.5 124.2,371.4 122.9,371.5 121.6,371.8 120.3,371.4 119,371.7 117.7,371.9 116.4,371.7 115.1,372.2 113.8,372.4 112.5,371.7 111.2,372.6 109.9,372.7 108.6,372.5 107.3,372.6 106,372.6 104.6,372.9 103.3,373.6 102,374.3 100.7,373.7 99.4,374.1 98.1,374.3 96.8,373.5 95.5,374.4 94.2,375 92.9,374.7 91.6,374.3 90.3,375.7 89,376.1 87.7,376.9 86.4,376.5 85.1,374.6 83.8,374 82.5,375.6 81.2,376.6 79.9,377.8 78.5,376 77.2,373.7 75.9,371.6 74.6,371.9 73.3,371.8 72,372.1 70.7,373 69.4,373.7 68.1,373.7 66.8,373.6 65.5,371.6" fill="#efefef"/><polygon points="65.5,432 66.8,430.1 68.1,431 69.4,430.8 70.7,430.5 72,431.6 73.3,431.4 74.6,431.9 75.9,431.7 77.2,432 78.5,431.7 79.9,429.9 81.2,428.7 82.5,428.9 83.8,429.3 85.1,430.5 86.4,429.9 87.7,430.7 89,431.6 90.3,431.5 91.6,431.2 92.9,432 94.2,432.3 95.5,432 96.8,431.7 98.1,431.5 99.4,431.2 100.7,431.3 102,431.4 103.3,431.8 104.6,431.9 106,432 107.3,431.8 108.6,432.2 109.9,431.7 111.2,432.4 112.5,432 113.8,432.3 115.1,432.6 116.4,432.3 117.7,432.4 119,432.6 120.3,432.3 121.6,432.3 122.9,432.5 124.2,432.5 125.5,432.7 126.8,432.7 128.1,432.7 129.4,432.5 130.7,432.6 132.1,432.5 133.4,432.8 134.7,432.2 136,430.7 137.3,430.3 138.6,429.4 139.9,430.6 141.2,430.7 142.5,430.2 143.8,431.2 145.1,430.5 146.4,431.6 147.7,431 149,431.8 150.3,431.5 151.6,430.8 152.9,426.9 154.2,427.4 155.5,428.1 156.8,429 158.1,428.6 159.5,428.7 160.8,430.6 162.1,430.5 163.4,431.2 164.7,430.2 166,431.4 167.3,431.4 168.6,430.7 169.9,431.6 171.2,430.9 172.5,431.9 173.8,431.4 175.1,431.7 176.4,432.1 177.7,431.6 179,432.1 180.3,431.8 181.6,431.9 182.9,432.2 184.2,432.1 185.6,432.4 186.9,432.2 188.2,432.2 189.5,432.3 190.8,430.4 192.1,430.1 193.4,430.3 194.7,429.5 196,430.6 197.3,430.3 198.6,430.5 199.9,431.3 201.2,431.2 202.5,431.7 203.8,431.6 205.1,432 206.4,431.4 207.7,428.1 209,424.8 210.3,424 211.6,425.9 213,425.8 214.3,427.5 215.6,428.2 216.9,428.7 218.2,427.8 219.5,428.3 220.8,429.3 222.1,428.5 223.4,428.6 224.7,426.8 226,425.9 227.3,426.9 228.6,428.3 229.9,427.7 231.2,428.3 232.5,429.7 233.8,430.5 235.1,429.8 236.4,429.6 237.7,430.8 239.1,431.3 240.4,431.2 241.7,431 243,430.9 244.3,431.3 245.6,431.2 246.9,431.6 248.2,431.9 249.5,431.4 250.8,430.2 252.1,428.1 253.4,426.5 254.7,426.2 256,427.2 257.3,428.2 258.6,429.1 259.9,430 261.2,429.7 262.5,430 263.8,429.3 265.1,428.8 266.5,427.4 267.8,428.4 269.1,427.7 270.4,429.6 271.7,430.1 273,429.7 274.3,430.8 275.6,430.2 276.9,430.2 278.2,430.2 279.5,431.3 280.8,430.9 282.1,431.9 283.4,431.6 284.7,431.5 286,431.8 287.3,431.9 288.6,431.7 289.9,432.3 291.2,431.8 292.6,432.4 293.9,432 295.2,432.1 296.5,432.3 297.8,431.9 299.1,430.1 300.4,430 301.7,430.2 303,429.9 304.3,431.2 305.6,431.5 306.9,431.6 308.2,431.6 309.5,431.5 310.8,431.7 312.1,431.8 313.4,431.7 314.7,432.1 316,432.4 317.3,432.3 318.7,431.9 320,431.7 321.3,429.9 322.6,429.3 323.9,430 325.2,430.4 326.5,430.2 327.8,430.8 329.1,431.2 330.4,431.1 331.7,431.5 331.7,436.8 330.4,436.9 329.1,437.1 327.8,437.6 326.5,437.9 325.2,437.9 323.9,438.6 322.6,438.6 321.3,439.4 320,437.1 318.7,436.2 317.3,436.3 316,436.4 314.7,436.8 313.4,436.8 312.1,437.1 310.8,436.7 309.5,437.4 308.2,437.5 306.9,437.6 305.6,437.3 304.3,437.8 303,437.2 301.7,439.2 300.4,439.1 299.1,438.7 297.8,437.1 296.5,436.4 295.2,436.6 293.9,436.3 292.6,436.4 291.2,436.7 289.9,436.4 288.6,436.7 287.3,436.8 286,436.7 284.7,437.4 283.4,436.5 282.1,437 280.8,437.3 279.5,438.2 278.2,437.3 276.9,438 275.6,438.1 274.3,438.2 273,438.2 271.7,439.5 270.4,440.1 269.1,440.4 267.8,440.9 266.5,440.2 265.1,439 263.8,438.5 262.5,438.9 261.2,439.3 259.9,439.8 258.6,439.9 257.3,439.9 256,440.8 254.7,440.9 253.4,442 252.1,440 250.8,437.8 249.5,437.2 248.2,437.3 246.9,437.6 245.6,437.4 244.3,437.8 243,437.1 241.7,438 240.4,438.3 239.1,437.4 237.7,438.2 236.4,438.3 235.1,438.5 233.8,439.1 232.5,439.7 231.2,439.7 229.9,441 228.6,441.8 227.3,442.1 226,442.2 224.7,441.4 223.4,440.8 222.1,439.4 220.8,438.9 219.5,439.1 218.2,439.9 216.9,440.8 215.6,441 214.3,441.7 213,441.7 211.6,443.3 210.3,443.1 209,443.6 207.7,440.5 206.4,437.3 205.1,436.6 203.8,436.9 202.5,437.3 201.2,437 199.9,437.5 198.6,437.2 197.3,438.1 196,438.3 194.7,438.2 193.4,439.4 192.1,439.1 190.8,436.8 189.5,436.3 188.2,436.2 186.9,436.1 185.6,436.4 184.2,436.4 182.9,436.6 181.6,436.7 180.3,436.7 179,436.4 177.7,436.8 176.4,436.8 175.1,437.1 173.8,437 172.5,437.2 171.2,437.5 169.9,437.6 168.6,436.8 167.3,437.8 166,437.8 164.7,438.4 163.4,438.4 162.1,437.9 160.8,438.7 159.5,439 158.1,439.9 156.8,439.7 155.5,440.5 154.2,442.5 152.9,441.4 151.6,438.1 150.3,436.8 149,436.9 147.7,436.8 146.4,437.5 145.1,437.6 143.8,437.9 142.5,438.5 141.2,438.1 139.9,438 138.6,438.2 137.3,438.2 136,437 134.7,436.7 133.4,436.1 132.1,436 130.7,436.1 129.4,436.1 128.1,435.9 126.8,436.2 125.5,436 124.2,436.3 122.9,436 121.6,436.3 120.3,436.3 119,436.2 117.7,436.4 116.4,436.1 115.1,436.1 113.8,436.3 112.5,436.4 111.2,436.3 109.9,436.4 108.6,436.7 107.3,436.9 106,437 104.6,436.6 103.3,436.9 102,437.9 100.7,437.9 99.4,437.7 98.1,437.4 96.8,437.5 95.5,436.3 94.2,436.9 92.9,437.1 91.6,436.9 90.3,436.7 89,437.1 87.7,437.7 86.4,437.9 85.1,438.5 83.8,439.8 82.5,439.8 81.2,440.6 79.9,438.5 78.5,436.7 77.2,436.7 75.9,436.9 74.6,437.1 73.3,437.2 72,437.8 70.7,437.2 69.4,438.4 68.1,438.3 66.8,438.4 65.5,436.6" fill="#efefef"/><polygon points="65.5,581.3 66.8,580 68.1,579.2 69.4,579.2 70.7,579 72,579.2 73.3,579.4 74.6,578.2 75.9,576.9 77.2,577.5 78.5,577.8 79.9,578.2 81.2,578.6 82.5,577.8 83.8,576.6 85.1,575.4 86.4,575.8 87.7,576.8 89,577.6 90.3,578.3 91.6,578.6 92.9,578.1 94.2,579.1 95.5,579.1 96.8,579.3 98.1,579.8 99.4,579.7 100.7,579.3 102,579.8 103.3,579.7 104.6,579.8 106,579.8 107.3,579.1 108.6,578.4 109.9,577.9 111.2,577 112.5,577.4 113.8,578.2 115.1,578.6 116.4,579.3 117.7,579.2 119,579 120.3,579.5 121.6,578.8 122.9,579.6 124.2,579.6 125.5,579.4 126.8,579.1 128.1,577.5 129.4,577 130.7,576.5 132.1,577.3 133.4,577.2 134.7,577.9 136,578.1 137.3,578.7 138.6,578.1 139.9,578.8 141.2,579.7 142.5,579.3 143.8,579.5 145.1,579.8 146.4,579.9 147.7,579.5 149,580 150.3,579.6 151.6,579.4 152.9,579.2 154.2,575.9 155.5,575.1 156.8,576.2 158.1,577 159.5,576.8 160.8,578.3 162.1,578.9 163.4,578 164.7,578.5 166,579 167.3,579.6 168.6,579.3 169.9,579.5 171.2,579.5 172.5,580.1 173.8,579.9 175.1,580.1 176.4,579.8 177.7,580.1 179,579.6 180.3,575.4 181.6,575 182.9,575.6 184.2,576.1 185.6,576.7 186.9,577.6 188.2,578.3 189.5,578.7 190.8,578.4 192.1,577.1 193.4,576.9 194.7,577.2 196,578 197.3,577.6 198.6,578.2 199.9,578.3 201.2,578.2 202.5,579.4 203.8,578.9 205.1,577.6 206.4,575.6 207.7,577.1 209,575.8 210.3,576.3 211.6,576.7 213,578.3 214.3,578.7 215.6,578.2 216.9,578.7 218.2,578.6 219.5,579.3 220.8,579.1 222.1,579.3 223.4,578.7 224.7,578.1 226,577.6 227.3,577.7 228.6,578.3 229.9,577.3 231.2,578.3 232.5,578.2 233.8,578.8 235.1,579 236.4,578.5 237.7,579 239.1,579.7 240.4,580 241.7,579.2 243,580 244.3,579.6 245.6,580 246.9,580 248.2,580 249.5,579.6 250.8,579.4 252.1,578.3 253.4,577.3 254.7,578.9 256,578.8 257.3,578.1 258.6,578.2 259.9,578.9 261.2,578.6 262.5,579.3 263.8,579.2 265.1,579.5 266.5,579.4 267.8,579.8 269.1,579.6 270.4,579.4 271.7,579.8 273,579.4 274.3,579.7 275.6,580.1 276.9,580 278.2,579.5 279.5,577.4 280.8,575.3 282.1,576.6 283.4,576.8 284.7,577.3 286,577.5 287.3,576.6 288.6,575.4 289.9,575.9 291.2,574.4 292.6,576 293.9,575.5 295.2,576.3 296.5,576.2 297.8,577.4 299.1,578.4 300.4,577.4 301.7,578 303,577.9 304.3,578.3 305.6,577.3 306.9,575.2 308.2,574.5 309.5,575.8 310.8,575.3 312.1,576.1 313.4,576 314.7,575.3 316,575.3 317.3,576.7 318.7,576.4 320,575.9 321.3,573.2 322.6,573.3 323.9,574.5 325.2,575.5 326.5,574.7 327.8,574.2 329.1,572.7 330.4,573.6 331.7,572.9 331.7,591.7 330.4,592.7 329.1,593.7 327.8,592.3 326.5,591.4 325.2,591.3 323.9,591.3 322.6,592.2 321.3,591.8 320,589.5 318.7,587.8 317.3,588.9 316,588.6 314.7,589.8 313.4,589.2 312.1,589 310.8,590.1 309.5,590.1 308.2,591.5 306.9,589.6 305.6,586.8 304.3,586.7 303,587.2 301.7,586.4 300.4,587.7 299.1,587.5 297.8,588.5 296.5,587.4 295.2,588.9 293.9,589.3 292.6,588.7 291.2,589.5 289.9,589.5 288.6,589.7 287.3,588.6 286,587.8 284.7,588.6 283.4,588.2 282.1,588.9 280.8,590 279.5,587.5 278.2,586.4 276.9,585.7 275.6,585.4 274.3,585.2 273,585.6 271.7,585.5 270.4,585.3 269.1,585.5 267.8,585.9 266.5,586.1 265.1,585.7 263.8,585.9 262.5,586.3 261.2,586.2 259.9,585.9 258.6,586.7 257.3,586.7 256,586.6 254.7,587.3 253.4,587.5 252.1,587 250.8,585.7 249.5,585.5 248.2,585.3 246.9,585.5 245.6,585.1 244.3,585.3 243,585.7 241.7,585.7 240.4,586.2 239.1,586 237.7,586.1 236.4,586.7 235.1,586.9 233.8,586.9 232.5,586.9 231.2,586.5 229.9,586.9 228.6,587.3 227.3,587.4 226,587.4 224.7,588.5 223.4,586.6 222.1,585.9 220.8,586.3 219.5,586.4 218.2,586.3 216.9,586.8 215.6,586.3 214.3,587.2 213,587 211.6,587.9 210.3,588.2 209,589.1 207.7,588.2 206.4,588.7 205.1,588.4 203.8,586.4 202.5,586.6 201.2,586.5 199.9,587.6 198.6,587.9 197.3,587.7 196,588 194.7,588.3 193.4,588.8 192.1,589.1 190.8,588.5 189.5,586.7 188.2,587.2 186.9,587.9 185.6,588.4 184.2,589.1 182.9,588.5 181.6,589.2 180.3,589.1 179,585.6 177.7,585.1 176.4,585.3 175.1,585.1 173.8,585.3 172.5,585.7 171.2,585.7 169.9,586 168.6,585.8 167.3,586.5 166,586.4 164.7,586 163.4,586.8 162.1,587 160.8,587.1 159.5,588.4 158.1,589.4 156.8,588.7 155.5,589.7 154.2,588.5 152.9,587 151.6,585.6 150.3,585.1 149,585.8 147.7,585.9 146.4,585.1 145.1,585.2 143.8,585.9 142.5,585.6 141.2,586.5 139.9,586.6 138.6,586.5 137.3,586.6 136,587.2 134.7,587.9 133.4,587 132.1,588.1 130.7,587.3 129.4,587.5 128.1,587.7 126.8,586.4 125.5,585.7 124.2,585.4 122.9,585.9 121.6,585.6 120.3,586.2 119,585.8 117.7,586.3 116.4,586.7 115.1,587.3 113.8,587.1 112.5,588.1 111.2,588.6 109.9,588.4 108.6,587.9 107.3,585.7 106,585.7 104.6,585.4 103.3,585.5 102,585.8 100.7,585.9 99.4,585.8 98.1,585.9 96.8,586.1 95.5,585.7 94.2,587 92.9,586.5 91.6,587.9 90.3,588.4 89,587.7 87.7,588.1 86.4,588.6 85.1,590.3 83.8,589.2 82.5,587.7 81.2,587.5 79.9,587.2 78.5,587.8 77.2,587.7 75.9,588.2 74.6,586 73.3,585.8 72,585.5 70.7,586.1 69.4,586.5 68.1,585.5 66.8,585.3 65.5,584.1" fill="#efefef"/><polygon points="65.5,673 66.8,672 68.1,671.5 69.4,671.6 70.7,671.7 72,671.7 73.3,672.2 74.6,672.3 75.9,672.3 77.2,672.6 78.5,672.4 79.9,672.6 81.2,672.6 82.5,672.5 83.8,672.7 85.1,672.7 86.4,672.7 87.7,672.6 89,672.8 90.3,672.7 91.6,672.6 92.9,672.8 94.2,672.7 95.5,672.7 96.8,672.6 98.1,672.2 99.4,671.3 100.7,670.9 102,671.4 103.3,671.3 104.6,671.6 106,672 107.3,672.2 108.6,672.2 109.9,672.2 111.2,672.4 112.5,672.4 113.8,672.4 115.1,672.6 116.4,672.6 117.7,672.4 119,672.1 120.3,670.4 121.6,667.5 122.9,667.6 124.2,668 125.5,669.4 126.8,669.3 128.1,668.8 129.4,669.1 130.7,670.3 132.1,669.9 133.4,670.3 134.7,670.7 136,671 137.3,671.3 138.6,671 139.9,671.3 141.2,671.4 142.5,671.4 143.8,671.8 145.1,671.7 146.4,671.1 147.7,669.4 149,669.2 150.3,670.3 151.6,670.3 152.9,671 154.2,670.7 155.5,671.2 156.8,671.1 158.1,671.4 159.5,671.4 160.8,671.8 162.1,671.8 163.4,671.8 164.7,671.8 166,672 167.3,672.2 168.6,672.1 169.9,672.1 171.2,672.5 172.5,672.6 173.8,672.3 175.1,672.4 176.4,672.4 177.7,672.6 179,672.6 180.3,672.7 181.6,672.7 182.9,672.6 184.2,672.6 185.6,672.8 186.9,672.7 188.2,672.6 189.5,672.6 190.8,672.8 192.1,672.8 193.4,672.6 194.7,672.6 196,672.7 197.3,672.6 198.6,671.9 199.9,670.9 201.2,669.8 202.5,670.2 203.8,670.2 205.1,670.6 206.4,670.7 207.7,671.1 209,671 210.3,671.1 211.6,671.1 213,671.5 214.3,671.4 215.6,671.3 216.9,671.4 218.2,671.8 219.5,671.7 220.8,671.9 222.1,671.8 223.4,672 224.7,671.8 226,671.8 227.3,672 228.6,672.1 229.9,672.3 231.2,672.4 232.5,672.2 233.8,672.2 235.1,672.5 236.4,672.3 237.7,672.5 239.1,672.5 240.4,672.5 241.7,672.6 243,672.5 244.3,672.5 245.6,672.7 246.9,672.4 248.2,672.7 249.5,672.6 250.8,672.1 252.1,671.1 253.4,671.5 254.7,671.1 256,671.3 257.3,671.3 258.6,671.9 259.9,671.9 261.2,671.7 262.5,672.1 263.8,671.9 265.1,672 266.5,672.3 267.8,672.1 269.1,672.4 270.4,672.4 271.7,672.6 273,672.5 274.3,672.6 275.6,672.6 276.9,672.7 278.2,672.6 279.5,672.5 280.8,672.1 282.1,671.2 283.4,670.6 284.7,670.7 286,671.2 287.3,671.7 288.6,671.9 289.9,671.9 291.2,672 292.6,672.1 293.9,671.9 295.2,672 296.5,672 297.8,672.3 299.1,672.1 300.4,671.9 301.7,669.9 303,669.2 304.3,669.5 305.6,670.5 306.9,670.4 308.2,670.9 309.5,671.3 310.8,671.5 312.1,671.2 313.4,671.5 314.7,671.6 316,672 317.3,672.1 318.7,672.1 320,671.9 321.3,670.9 322.6,670.8 323.9,670.6 325.2,670.8 326.5,670.8 327.8,671.3 329.1,671.8 330.4,672.1 331.7,672.1 331.7,676.7 330.4,676.7 329.1,677 327.8,677.2 326.5,677.7 325.2,677.5 323.9,677.8 322.6,678.4 321.3,677.7 320,676.8 318.7,676.6 317.3,676.5 316,676.5 314.7,676.9 313.4,676.9 312.1,677.2 310.8,677.3 309.5,677.4 308.2,678.1 306.9,678 305.6,678.4 304.3,679.8 303,679.6 301.7,678.7 300.4,676.7 299.1,676.2 297.8,676.2 296.5,676.5 295.2,676.5 293.9,676.5 292.6,676.6 291.2,676.5 289.9,676.8 288.6,676.8 287.3,677.1 286,677.6 284.7,678.3 283.4,678.8 282.1,677.3 280.8,676.3 279.5,676.1 278.2,675.9 276.9,676.1 275.6,675.9 274.3,676.1 273,676.1 271.7,676.2 270.4,676.3 269.1,676.4 267.8,676.3 266.5,676.3 265.1,676.4 263.8,676.6 262.5,676.6 261.2,676.7 259.9,676.6 258.6,676.7 257.3,677.1 256,677.2 254.7,677.3 253.4,677.5 252.1,677.3 250.8,676.5 249.5,676.2 248.2,676 246.9,676.1 245.6,676.2 244.3,676.1 243,676 241.7,676.2 240.4,676.3 239.1,676.2 237.7,676.1 236.4,676.1 235.1,676.3 233.8,676.5 232.5,676.3 231.2,676.4 229.9,676.5 228.6,676.5 227.3,676.6 226,676.6 224.7,676.5 223.4,676.6 222.1,676.7 220.8,676.8 219.5,676.9 218.2,677 216.9,677.2 215.6,677.1 214.3,676.8 213,677.2 211.6,677.2 210.3,677.6 209,677.6 207.7,677.6 206.4,678.3 205.1,677.8 203.8,677.9 202.5,678.2 201.2,678.4 199.9,678 198.6,676.6 197.3,676.1 196,675.8 194.7,675.9 193.4,675.9 192.1,675.8 190.8,675.9 189.5,675.9 188.2,676 186.9,675.9 185.6,676 184.2,676 182.9,675.9 181.6,676.1 180.3,676 179,676.1 177.7,675.9 176.4,676 175.1,676.2 173.8,676.3 172.5,676.4 171.2,676.4 169.9,676.5 168.6,676.5 167.3,676.5 166,676.4 164.7,676.7 163.4,676.8 162.1,676.7 160.8,677.2 159.5,677.5 158.1,677.2 156.8,677.7 155.5,677.6 154.2,677.4 152.9,678.4 151.6,678.1 150.3,678.9 149,679.7 147.7,679 146.4,678 145.1,676.7 143.8,676.6 142.5,676.8 141.2,677.2 139.9,677.1 138.6,677.1 137.3,677.4 136,678 134.7,678.1 133.4,678.2 132.1,678.7 130.7,679.1 129.4,679.2 128.1,678.8 126.8,678.7 125.5,680.1 124.2,680 122.9,681.4 121.6,681.3 120.3,678.6 119,676.4 117.7,676.1 116.4,676.2 115.1,676.3 113.8,676.2 112.5,676.3 111.2,676.3 109.9,676.4 108.6,676.4 107.3,676.7 106,676.8 104.6,677.2 103.3,677.4 102,677.5 100.7,677.4 99.4,677.1 98.1,676.4 96.8,676 95.5,675.9 94.2,675.8 92.9,675.9 91.6,675.8 90.3,676 89,676 87.7,676 86.4,676 85.1,675.9 83.8,676 82.5,675.9 81.2,676.1 79.9,676 78.5,676 77.2,676.1 75.9,676.2 74.6,676.5 73.3,676.4 72,676.6 70.7,676.8 69.4,677 68.1,676.8 66.8,676.4 65.5,675.5" fill="#efefef"/><polygon points="65.5,766.7 66.8,766.2 68.1,766 69.4,765.9 70.7,765.7 72,764.9 73.3,763.3 74.6,764.2 75.9,765 77.2,765.5 78.5,765.7 79.9,765.8 81.2,765.8 82.5,765.8 83.8,765.9 85.1,765.9 86.4,765.9 87.7,765.9 89,765.9 90.3,765.7 91.6,764.6 92.9,763.3 94.2,764.3 95.5,765.2 96.8,765.6 98.1,765.7 99.4,765.8 100.7,765.9 102,765.9 103.3,765.9 104.6,765.9 106,765.9 107.3,765.9 108.6,765.9 109.9,765.9 111.2,765.8 112.5,765.5 113.8,764 115.1,762.3 116.4,764 117.7,764.8 119,765.4 120.3,765.6 121.6,765.8 122.9,765.8 124.2,765.8 125.5,765.9 126.8,765.9 128.1,765.9 129.4,765.9 130.7,765.9 132.1,765.9 133.4,765.6 134.7,764.6 136,764.1 137.3,764.9 138.6,765.4 139.9,765.6 141.2,765.8 142.5,765.8 143.8,765.8 145.1,765.9 146.4,765.9 147.7,765.9 149,765.9 150.3,765.9 151.6,765.9 152.9,765.6 154.2,764.7 155.5,764.6 156.8,765.2 158.1,765.5 159.5,765.7 160.8,765.8 162.1,765.8 163.4,765.9 164.7,765.9 166,765.9 167.3,765.9 168.6,765.9 169.9,765.9 171.2,765.9 172.5,765.9 173.8,765.8 175.1,765.2 176.4,763.6 177.7,763.3 179,764.6 180.3,765.1 181.6,765.6 182.9,765.7 184.2,765.8 185.6,765.8 186.9,765.8 188.2,765.9 189.5,765.9 190.8,765.9 192.1,765.9 193.4,765.9 194.7,765.7 196,764.7 197.3,762.4 198.6,763.1 199.9,764.5 201.2,765.2 202.5,765.5 203.8,765.7 205.1,765.8 206.4,765.8 207.7,765.9 209,765.9 210.3,765.9 211.6,765.9 213,765.9 214.3,765.9 215.6,765.9 216.9,765.9 218.2,765.9 219.5,765.9 220.8,765.9 222.1,765.9 223.4,765.9 224.7,765.9 226,765.9 227.3,765.9 228.6,765.9 229.9,765.9 231.2,765.9 232.5,765.9 233.8,765.8 235.1,765.2 236.4,762.4 237.7,759.2 239.1,761.9 240.4,763.7 241.7,764.7 243,765.2 244.3,765.5 245.6,765.7 246.9,765.8 248.2,765.8 249.5,765.9 250.8,765.9 252.1,765.9 253.4,765.9 254.7,765.9 256,765.9 257.3,765.5 258.6,763.8 259.9,762.1 261.2,764 262.5,765 263.8,765.4 265.1,765.7 266.5,765.8 267.8,765.8 269.1,765.8 270.4,765.9 271.7,765.9 273,765.9 274.3,765.9 275.6,765.9 276.9,765.5 278.2,764.2 279.5,763.7 280.8,764.8 282.1,765.4 283.4,765.6 284.7,765.7 286,765.8 287.3,765.8 288.6,765.9 289.9,765.9 291.2,765.9 292.6,765.9 293.9,765.9 295.2,765.9 296.5,765.8 297.8,765 299.1,762.4 300.4,761.9 301.7,764 303,764.8 304.3,765.4 305.6,765.7 306.9,765.8 308.2,765.6 309.5,765 310.8,764.2 312.1,764.8 313.4,765.1 314.7,764.6 316,763.3 317.3,763.8 318.7,764.7 320,765.2 321.3,765.1 322.6,764 323.9,764.2 325.2,764.8 326.5,765.2 327.8,765.5 329.1,765.7 330.4,765.7 331.7,765.8 331.7,768.6 330.4,768.6 329.1,768.7 327.8,768.9 326.5,769.2 325.2,769.5 323.9,770.3 322.6,770.4 321.3,769.4 320,769.3 318.7,769.8 317.3,770.5 316,770.8 314.7,769.7 313.4,769.2 312.1,769.6 310.8,770.1 309.5,769.5 308.2,768.8 306.9,768.6 305.6,768.8 304.3,769.1 303,769.5 301.7,770.6 300.4,772.2 299.1,771.7 297.8,769.4 296.5,768.6 295.2,768.5 293.9,768.5 292.6,768.5 291.2,768.5 289.9,768.5 288.6,768.5 287.3,768.6 286,768.6 284.7,768.7 283.4,768.8 282.1,769.1 280.8,769.7 279.5,770.6 278.2,770 276.9,769 275.6,768.6 274.3,768.5 273,768.5 271.7,768.5 270.4,768.5 269.1,768.6 267.8,768.6 266.5,768.6 265.1,768.7 263.8,769 262.5,769.5 261.2,770.6 259.9,772.2 258.6,770.5 257.3,768.9 256,768.5 254.7,768.5 253.4,768.5 252.1,768.5 250.8,768.5 249.5,768.5 248.2,768.6 246.9,768.6 245.6,768.7 244.3,768.8 243,769.1 241.7,769.7 240.4,770.6 239.1,772.3 237.7,775.3 236.4,772.4 235.1,769.1 233.8,768.5 232.5,768.5 231.2,768.5 229.9,768.5 228.6,768.5 227.3,768.5 226,768.5 224.7,768.5 223.4,768.5 222.1,768.5 220.8,768.5 219.5,768.5 218.2,768.5 216.9,768.5 215.6,768.5 214.3,768.5 213,768.5 211.6,768.5 210.3,768.5 209,768.5 207.7,768.5 206.4,768.5 205.1,768.6 203.8,768.7 202.5,768.9 201.2,769.2 199.9,770 198.6,771.3 197.3,771.9 196,769.7 194.7,768.7 193.4,768.5 192.1,768.5 190.8,768.5 189.5,768.5 188.2,768.5 186.9,768.5 185.6,768.5 184.2,768.6 182.9,768.7 181.6,768.9 180.3,769.1 179,769.8 177.7,770.7 176.4,770.7 175.1,769.2 173.8,768.6 172.5,768.5 171.2,768.5 169.9,768.5 168.6,768.5 167.3,768.5 166,768.5 164.7,768.5 163.4,768.6 162.1,768.6 160.8,768.6 159.5,768.7 158.1,768.9 156.8,769.2 155.5,769.8 154.2,769.5 152.9,768.8 151.6,768.6 150.3,768.5 149,768.5 147.7,768.5 146.4,768.5 145.1,768.5 143.8,768.5 142.5,768.6 141.2,768.7 139.9,768.8 138.6,769.1 137.3,769.5 136,770.5 134.7,769.8 133.4,768.8 132.1,768.6 130.7,768.5 129.4,768.5 128.1,768.5 126.8,768.5 125.5,768.5 124.2,768.6 122.9,768.6 121.6,768.7 120.3,768.8 119,769 117.7,769.5 116.4,770.4 115.1,772.2 113.8,770.3 112.5,768.9 111.2,768.5 109.9,768.5 108.6,768.5 107.3,768.5 106,768.5 104.6,768.5 103.3,768.5 102,768.5 100.7,768.6 99.4,768.6 98.1,768.7 96.8,768.9 95.5,769.3 94.2,770 92.9,770.9 91.6,769.7 90.3,768.7 89,768.5 87.7,768.5 86.4,768.5 85.1,768.5 83.8,768.5 82.5,768.5 81.2,768.6 79.9,768.6 78.5,768.7 77.2,769 75.9,769.5 74.6,770.3 73.3,771 72,769.5 70.7,768.7 69.4,768.5 68.1,768.3 66.8,768.1 65.5,767.7" fill="#efefef"/><polygon points="65.5,857.1 66.8,855.4 68.1,854.6 69.4,854.5 70.7,854.4 72,854.4 73.3,854.6 74.6,855 75.9,855.1 77.2,855.3 78.5,855.3 79.9,855.7 81.2,855.9 82.5,855.8 83.8,856.1 85.1,856.3 86.4,856.3 87.7,856.1 89,855.6 90.3,855.3 91.6,855.2 92.9,855.2 94.2,855.3 95.5,855.5 96.8,855.4 98.1,855.6 99.4,855.6 100.7,855.9 102,856.1 103.3,856.2 104.6,856.1 106,856.2 107.3,856.2 108.6,856.3 109.9,856.2 111.2,856.3 112.5,856.5 113.8,856.5 115.1,856.5 116.4,856.6 117.7,856.6 119,856.6 120.3,856.7 121.6,856.8 122.9,856.9 124.2,856.9 125.5,856.8 126.8,856.7 128.1,856.6 129.4,856.5 130.7,856.5 132.1,856.6 133.4,856.6 134.7,856.7 136,856.7 137.3,856.7 138.6,856.8 139.9,856.9 141.2,856.9 142.5,856.8 143.8,856.8 145.1,856.8 146.4,856.9 147.7,856.9 149,857 150.3,857 151.6,857 152.9,857 154.2,857.1 155.5,857.1 156.8,857.1 158.1,857.1 159.5,857.1 160.8,857.1 162.1,857.1 163.4,857.1 164.7,857.2 166,857.2 167.3,857.1 168.6,857.1 169.9,857.1 171.2,857.1 172.5,857.2 173.8,857.2 175.1,857.2 176.4,857.2 177.7,857.2 179,857.2 180.3,857.2 181.6,857.2 182.9,857.2 184.2,857.2 185.6,857.2 186.9,857.2 188.2,857.3 189.5,857.3 190.8,857.2 192.1,857.2 193.4,857.2 194.7,857.3 196,857.3 197.3,857.3 198.6,857.2 199.9,857.2 201.2,857.2 202.5,857.2 203.8,857.2 205.1,857.3 206.4,857.3 207.7,857.3 209,857.3 210.3,857.3 211.6,857.2 213,857.3 214.3,857.2 215.6,857.3 216.9,857.3 218.2,857.2 219.5,857.3 220.8,857.3 222.1,857.3 223.4,857.3 224.7,857.3 226,857.3 227.3,857.2 228.6,857.3 229.9,857.3 231.2,857.3 232.5,857.3 233.8,857.3 235.1,857.3 236.4,857.3 237.7,857.3 239.1,857.3 240.4,857.3 241.7,857.3 243,857.3 244.3,857.3 245.6,857.3 246.9,857.3 248.2,857.3 249.5,857.3 250.8,857.3 252.1,857.3 253.4,857.3 254.7,857.3 256,857.2 257.3,857.3 258.6,857.3 259.9,857.3 261.2,857.3 262.5,857.3 263.8,857.3 265.1,857.3 266.5,857.3 267.8,857.3 269.1,857.3 270.4,857.3 271.7,857.3 273,857.3 274.3,857.3 275.6,857.3 276.9,857.3 278.2,857.3 279.5,857.3 280.8,857.3 282.1,857.3 283.4,857.3 284.7,857.3 286,857.3 287.3,857.3 288.6,857.3 289.9,857.3 291.2,857.3 292.6,857.3 293.9,857.3 295.2,857.3 296.5,857.3 297.8,857.3 299.1,857.3 300.4,857.3 301.7,857.3 303,857.3 304.3,857.3 305.6,857.3 306.9,857.3 308.2,857.3 309.5,857.3 310.8,857.3 312.1,857.3 313.4,857.3 314.7,857.3 316,857.3 317.3,857.3 318.7,857.3 320,857.3 321.3,857.3 322.6,857.3 323.9,857.3 325.2,857.3 326.5,857.3 327.8,857.3 329.1,857.3 330.4,857.3 331.7,857.3 331.7,860.3 330.4,860.3 329.1,860.3 327.8,860.3 326.5,860.3 325.2,860.3 323.9,860.3 322.6,860.3 321.3,860.3 320,860.3 318.7,860.3 317.3,860.3 316,860.3 314.7,860.3 313.4,860.3 312.1,860.3 310.8,860.3 309.5,860.3 308.2,860.3 306.9,860.3 305.6,860.3 304.3,860.3 303,860.3 301.7,860.3 300.4,860.3 299.1,860.3 297.8,860.3 296.5,860.3 295.2,860.3 293.9,860.3 292.6,860.3 291.2,860.3 289.9,860.3 288.6,860.3 287.3,860.3 286,860.3 284.7,860.3 283.4,860.3 282.1,860.3 280.8,860.3 279.5,860.3 278.2,860.3 276.9,860.3 275.6,860.3 274.3,860.3 273,860.3 271.7,860.3 270.4,860.3 269.1,860.3 267.8,860.3 266.5,860.3 265.1,860.3 263.8,860.3 262.5,860.3 261.2,860.3 259.9,860.3 258.6,860.3 257.3,860.3 256,860.3 254.7,860.3 253.4,860.3 252.1,860.3 250.8,860.3 249.5,860.3 248.2,860.3 246.9,860.3 245.6,860.3 244.3,860.3 243,860.3 241.7,860.3 240.4,860.4 239.1,860.3 237.7,860.3 236.4,860.3 235.1,860.3 233.8,860.3 232.5,860.3 231.2,860.3 229.9,860.3 228.6,860.3 227.3,860.3 226,860.3 224.7,860.4 223.4,860.3 222.1,860.3 220.8,860.3 219.5,860.3 218.2,860.3 216.9,860.3 215.6,860.3 214.3,860.3 213,860.3 211.6,860.4 210.3,860.3 209,860.3 207.7,860.3 206.4,860.3 205.1,860.3 203.8,860.3 202.5,860.3 201.2,860.3 199.9,860.3 198.6,860.3 197.3,860.3 196,860.3 194.7,860.4 193.4,860.4 192.1,860.4 190.8,860.3 189.5,860.3 188.2,860.4 186.9,860.4 185.6,860.3 184.2,860.4 182.9,860.4 181.6,860.4 180.3,860.4 179,860.4 177.7,860.4 176.4,860.4 175.1,860.4 173.8,860.4 172.5,860.4 171.2,860.4 169.9,860.4 168.6,860.5 167.3,860.5 166,860.5 164.7,860.4 163.4,860.5 162.1,860.5 160.8,860.5 159.5,860.5 158.1,860.5 156.8,860.5 155.5,860.5 154.2,860.5 152.9,860.5 151.6,860.6 150.3,860.6 149,860.7 147.7,860.7 146.4,860.8 145.1,860.8 143.8,860.8 142.5,860.7 141.2,860.7 139.9,860.8 138.6,860.7 137.3,860.9 136,860.9 134.7,860.9 133.4,861.1 132.1,861 130.7,861.1 129.4,861.1 128.1,860.9 126.8,860.9 125.5,860.8 124.2,860.7 122.9,860.9 121.6,861 120.3,861 119,860.9 117.7,860.9 116.4,861.1 115.1,861.1 113.8,861.1 112.5,861.3 111.2,861.3 109.9,861.4 108.6,861.4 107.3,861.2 106,861.4 104.6,861.4 103.3,861.6 102,861.6 100.7,861.7 99.4,861.8 98.1,862.1 96.8,862.1 95.5,862.2 94.2,862.3 92.9,862.3 91.6,862.3 90.3,862.5 89,861.7 87.7,861.2 86.4,861.2 85.1,861.4 83.8,861.7 82.5,861.8 81.2,861.8 79.9,862.2 78.5,862.3 77.2,862.2 75.9,862.6 74.6,862.8 73.3,863.2 72,862.9 70.7,863.1 69.4,863.5 68.1,862.9 66.8,862.2 65.5,860.5" fill="#efefef"/><polygon points="65.5,923.8 66.8,923.3 68.1,923.1 69.4,922.9 70.7,922.9 72,922.9 73.3,922.9 74.6,922.9 75.9,922.9 77.2,922.9 78.5,922.9 79.9,922.9 81.2,922.9 82.5,922.9 83.8,922.9 85.1,922.9 86.4,922.9 87.7,922.9 89,922.9 90.3,922.9 91.6,922.9 92.9,922.9 94.2,922.9 95.5,922.8 96.8,922.9 98.1,922.9 99.4,922.9 100.7,922.9 102,922.9 103.3,922.9 104.6,922.9 106,922.9 107.3,922.9 108.6,922.9 109.9,922.9 111.2,922.9 112.5,922.9 113.8,922.9 115.1,922.9 116.4,922.9 117.7,922.9 119,922.9 120.3,922.9 121.6,922.9 122.9,922.9 124.2,922.6 125.5,922.2 126.8,921.9 128.1,922 129.4,922.1 130.7,922.2 132.1,922.3 133.4,922.4 134.7,921.9 136,920.2 137.3,918.4 138.6,918.4 139.9,918.8 141.2,919.4 142.5,919.5 143.8,919.9 145.1,919.9 146.4,920.1 147.7,920.7 149,920.9 150.3,921.2 151.6,921 152.9,920.2 154.2,919.8 155.5,920.3 156.8,920.2 158.1,920.7 159.5,920.9 160.8,921.1 162.1,921.2 163.4,921.3 164.7,921.4 166,921.5 167.3,921.7 168.6,921.7 169.9,921.9 171.2,922.2 172.5,922.2 173.8,922.1 175.1,922.2 176.4,922.1 177.7,922.2 179,922.2 180.3,922.2 181.6,922.4 182.9,922.3 184.2,922.5 185.6,922.5 186.9,922.5 188.2,922.5 189.5,922.4 190.8,921.7 192.1,920.9 193.4,920.9 194.7,920.9 196,920.9 197.3,921 198.6,921.2 199.9,921.2 201.2,921.3 202.5,921.3 203.8,921.4 205.1,921.6 206.4,921.8 207.7,921.9 209,921.9 210.3,922.1 211.6,922 213,922.1 214.3,922.1 215.6,922.2 216.9,922 218.2,922.1 219.5,922.1 220.8,922.1 222.1,922 223.4,921.7 224.7,921.4 226,921.3 227.3,921.4 228.6,921.4 229.9,921.7 231.2,921.4 232.5,921.5 233.8,921.7 235.1,921.7 236.4,921.5 237.7,921.7 239.1,921.7 240.4,921.7 241.7,921.8 243,921.9 244.3,922 245.6,922 246.9,921.9 248.2,921.9 249.5,921.9 250.8,922 252.1,922 253.4,922.3 254.7,922.3 256,922.1 257.3,922.1 258.6,922.2 259.9,922.3 261.2,922.2 262.5,922.2 263.8,922.3 265.1,922.4 266.5,922.4 267.8,922.5 269.1,922.4 270.4,922.4 271.7,922.4 273,922.4 274.3,922.4 275.6,922.5 276.9,922.4 278.2,922.5 279.5,922.5 280.8,922.5 282.1,922.5 283.4,922.5 284.7,922.5 286,922.5 287.3,922.5 288.6,922.6 289.9,922.6 291.2,922.6 292.6,922.7 293.9,922.7 295.2,922.7 296.5,922.7 297.8,922.6 299.1,922.6 300.4,922.7 301.7,922.6 303,922.6 304.3,922.7 305.6,922.7 306.9,922.6 308.2,922.7 309.5,922.7 310.8,922.6 312.1,922.7 313.4,922.7 314.7,922.7 316,922.8 317.3,922.8 318.7,922.7 320,922.7 321.3,922.8 322.6,922.8 323.9,922.8 325.2,922.7 326.5,922.8 327.8,922.8 329.1,922.7 330.4,922.7 331.7,922.8 331.7,925.8 330.4,925.9 329.1,925.8 327.8,925.9 326.5,925.9 325.2,925.8 323.9,925.8 322.6,925.8 321.3,925.9 320,925.9 318.7,925.8 317.3,925.8 316,925.9 314.7,925.9 313.4,925.9 312.1,925.9 310.8,925.9 309.5,925.9 308.2,925.9 306.9,926 305.6,926 304.3,926 303,926 301.7,926 300.4,925.9 299.1,926 297.8,925.9 296.5,925.9 295.2,926 293.9,926 292.6,926 291.2,926 289.9,926 288.6,926 287.3,926.1 286,926 284.7,926 283.4,926.1 282.1,926 280.8,926.1 279.5,926 278.2,926.1 276.9,926.2 275.6,926.1 274.3,926.2 273,926.2 271.7,926.2 270.4,926.2 269.1,926.1 267.8,926.2 266.5,926.2 265.1,926.2 263.8,926.3 262.5,926.4 261.2,926.3 259.9,926.4 258.6,926.4 257.3,926.4 256,926.4 254.7,926.3 253.4,926.5 252.1,926.6 250.8,926.6 249.5,926.7 248.2,926.8 246.9,926.6 245.6,926.6 244.3,926.6 243,926.8 241.7,926.8 240.4,926.9 239.1,927 237.7,927.1 236.4,926.9 235.1,927.1 233.8,927.1 232.5,927.1 231.2,927 229.9,927.1 228.6,927.1 227.3,927.3 226,927.3 224.7,927.5 223.4,926.8 222.1,926.6 220.8,926.5 219.5,926.5 218.2,926.4 216.9,926.4 215.6,926.5 214.3,926.5 213,926.5 211.6,926.4 210.3,926.5 209,926.6 207.7,926.8 206.4,927 205.1,927.1 203.8,927.1 202.5,927.4 201.2,927.4 199.9,927.5 198.6,927.5 197.3,927.7 196,927.6 194.7,927.5 193.4,927.7 192.1,927.8 190.8,926.9 189.5,926.2 188.2,926.1 186.9,926.1 185.6,926.1 184.2,926.2 182.9,926.1 181.6,926.4 180.3,926.3 179,926.4 177.7,926.3 176.4,926.4 175.1,926.3 173.8,926.4 172.5,926.3 171.2,926.5 169.9,926.7 168.6,926.8 167.3,926.8 166,927.1 164.7,927.3 163.4,927.4 162.1,927.5 160.8,927.6 159.5,927.9 158.1,928.3 156.8,928.1 155.5,928.4 154.2,928.5 152.9,928.4 151.6,927.4 150.3,927.6 149,927.9 147.7,928.2 146.4,928.5 145.1,928.6 143.8,929.1 142.5,928.9 141.2,929.2 139.9,929.7 138.6,929.8 137.3,929.8 136,928.5 134.7,926.5 133.4,926.3 132.1,926.3 130.7,926.4 129.4,926.5 128.1,926.5 126.8,926.6 125.5,926.6 124.2,926 122.9,925.8 121.6,925.7 120.3,925.7 119,925.7 117.7,925.7 116.4,925.7 115.1,925.7 113.8,925.7 112.5,925.7 111.2,925.7 109.9,925.7 108.6,925.7 107.3,925.7 106,925.7 104.6,925.7 103.3,925.8 102,925.7 100.7,925.7 99.4,925.7 98.1,925.7 96.8,925.7 95.5,925.7 94.2,925.7 92.9,925.7 91.6,925.7 90.3,925.7 89,925.7 87.7,925.7 86.4,925.7 85.1,925.7 83.8,925.7 82.5,925.7 81.2,925.7 79.9,925.7 78.5,925.7 77.2,925.7 75.9,925.7 74.6,925.7 73.3,925.7 72,925.7 70.7,925.7 69.4,925.7 68.1,925.6 66.8,925.3 65.5,924.8" fill="#efefef"/></svg>
<svg style="left:351px;top:210px" width="77" height="76" viewBox="0 0 57 56"><rect width="57" height="56" fill="#f2f2f2"/><ellipse cx="22" cy="10.5" rx="10" ry="7.5" fill="#5e433c"/><ellipse cx="30" cy="13" rx="7" ry="5.5" fill="#6a4c44"/><ellipse cx="19" cy="17" rx="4" ry="4" fill="#5e433c"/><path d="M3 13 Q6 11 9 13 Q13 11 16 13 Q19 14 18 18 Q19 22 16 23 Q12 25 9 23 Q5 24 4 21 Q2 17 3 13 Z" fill="#ffffff" stroke="#8a8a8a" stroke-width="0.6"/><ellipse cx="36.5" cy="15" rx="12.6" ry="5.8" fill="#f0b2d2"/><circle cx="29.6" cy="24" r="11.6" fill="#efb0d2"/><path d="M21 31.5 L40.7 31.5 L44.4 45 L17.4 45 Z" fill="#e8625c"/><rect x="9.5" y="34" width="5.5" height="3.5" fill="#ee6aa0"/><rect x="9.5" y="37.5" width="5.5" height="3.5" fill="#f0a040"/><rect x="9.5" y="41" width="5.5" height="3.5" fill="#d8c838"/><rect x="9.5" y="44.5" width="5.5" height="3.5" fill="#28a8a0"/><path d="M43.7 30.2 L53.7 30.2 L52.2 41.2 L45.2 41.2 Z" fill="#f2c4c6"/><circle cx="48.6" cy="35.8" r="3" fill="#2e7a50"/><path d="M48 30 L50 24" stroke="#2a6a48" stroke-width="1"/><rect x="21.7" y="48" width="9" height="2.6" rx="1" fill="#666"/><rect x="33.4" y="48" width="8" height="2.6" rx="1" fill="#666"/><circle cx="28.2" cy="28" r="10.6" stroke="#80d6a9" stroke-width="2.15" fill="none" opacity="1.0"/><path d="M25.9 22.8 L32.8 28.0 L25.9 33.2 Z" fill="#80d6a9" opacity="1.0"/></svg>
<div class="t" style="left:441px;top:212.5px;font-size:19.6px;color:#80d6a9">1. Sinawi Ensemble.mp3</div>
<svg style="left:442px;top:251px" width="14" height="13" viewBox="0 0 14 13"><path d="M0.5 4.2 H3.2 L7 0.8 V12.2 L3.2 8.8 H0.5 Z" fill="#e6e6e6"/><path d="M9 3.8 C10.3 5 10.3 8 9 9.2" stroke="#e6e6e6" stroke-width="1.4" fill="none"/><path d="M10.8 1.6 C13.6 4 13.6 9 10.8 11.4" stroke="#e6e6e6" stroke-width="1.7" fill="none"/></svg>
<div class="a" style="left:471px;top:257px;width:509px;height:1.2px;background:#c8c8c8"></div>
<div class="a" style="left:500.5px;top:251px;width:12px;height:12px;border-radius:50%;background:#cbcbcb"></div>
<div class="a" style="left:350.5px;top:298.5px;width:107.0px;height:26.0px;border-radius:13.0px;background:#555555;overflow:hidden"><div class="a" style="left:0;top:0;width:26.0px;height:26.0px;border-radius:50%;background:#515151"></div></div>
<svg style="left:356px;top:305px" width="14" height="14" viewBox="0 0 14 14"><rect x="0.7" y="0.7" width="12.6" height="12.6" rx="1.3" stroke="#cfcfcf" stroke-width="1.3" fill="none"/><path d="M3.2 4 H4.3 M5.7 4 H10.8 M3.2 7 H4.3 M5.7 7 H10.8 M3.2 10 H4.3 M5.7 10 H10.8" stroke="#cfcfcf" stroke-width="1.2"/></svg>
<div class="t" style="left:383px;top:304.5px;font-size:13.4px;color:#d8d8d8">Editar info</div>
<div class="a" style="left:463px;top:298.5px;width:143px;height:26.0px;border-radius:13.0px;background:#555555;overflow:hidden"><div class="a" style="left:0;top:0;width:26.0px;height:26.0px;border-radius:50%;background:#515151"></div></div>
<svg style="left:468.5px;top:305px" width="15" height="13" viewBox="0 0 15 13"><rect x="0" y="0" width="15" height="13" rx="1" fill="#cfcfcf"/><path d="M2 11 L5.3 4.5 L7.8 8.2 L10 5.5 L13 11 Z" fill="#555"/></svg>
<div class="t" style="left:495.5px;top:304.5px;font-size:13.3px;color:#d8d8d8">Cambiar imágen</div>
<div class="a" style="left:613px;top:298.5px;width:126px;height:26.0px;border-radius:13.0px;background:#555555;overflow:hidden"><div class="a" style="left:0;top:0;width:26.0px;height:26.0px;border-radius:50%;background:#515151"></div></div>
<svg style="left:619.5px;top:303.5px" width="12" height="16" viewBox="0 0 12 16"><rect x="0" y="1.5" width="12" height="2" fill="#e0626f"/><rect x="4" y="0" width="4" height="2" fill="#e0626f"/><path d="M1 4.5 H11 L10.2 16 H1.8 Z" fill="#e0626f"/></svg>
<div class="t" style="left:645px;top:304.5px;font-size:13.5px;color:#e0626f">Borrar sonido</div>
<div class="t" style="left:351px;top:341px;font-size:13.2px;color:#80d6a9">Sonido en:&nbsp; Pista-3</div>
<div class="a" style="left:351px;top:363px;width:63px;height:20px;border-radius:10.0px;background:#555555;overflow:hidden"></div>
<svg style="left:357px;top:366.5px" width="12" height="13" viewBox="0 0 12 13"><rect x="3" y="3" width="8" height="9.3" rx="1" stroke="#c8c8c8" stroke-width="1.2" fill="none"/><path d="M1 10 V1 H8" stroke="#c8c8c8" stroke-width="1.2" fill="none"/></svg>
<div class="t" style="left:373.5px;top:367.5px;font-size:11.6px;color:#d0d0d0">Copiar</div>
<div class="a" style="left:421px;top:363px;width:62px;height:20px;border-radius:10.0px;background:#555555;overflow:hidden"></div>
<svg style="left:427px;top:368px" width="12" height="10" viewBox="0 0 12 10"><path d="M0 1 H4.5 L5.5 2 H12 V10 H0 Z" fill="#c8c8c8"/><path d="M6 4 V8 M4 6 H8" stroke="#555" stroke-width="1.2"/></svg>
<div class="t" style="left:443px;top:367.5px;font-size:11.6px;color:#d0d0d0">Mover</div>
<div class="t" style="left:351px;top:418px;font-size:16.5px;color:#ededed">Loop</div>
<div class="t" style="left:395px;top:421.5px;font-size:12.5px;font-weight:bold;color:#e6e6e6;-webkit-text-stroke:0">48.61s</div>
<div class="a" style="left:351px;top:443px;width:654px;height:77px;border-radius:2px;background:#416a55"></div>
<div class="a" style="left:479px;top:443px;width:39px;height:77px;border-radius:3px;background:#80d6a9"></div>
<svg style="left:0;top:0" width="1015" height="1013" viewBox="0 0 1015 1013"><defs><clipPath id="hl"><rect x="479" y="443" width="39" height="77"/></clipPath></defs><polygon points="350.9,480.5 357.5,467 364.1,475.3 376.4,469 383.9,473.6 397.1,468 402.8,470.3 409.4,465.4 416,469 424.2,468 430.1,466.4 436.7,471.3 444,466.4 451.3,461.4 457.2,466.4 467.1,464.7 478.7,468 486.9,470.6 495.2,468 501.8,471.3 515,465.4 523.2,468 533.8,459.1 541.4,465.4 549.6,464.7 559.5,467 566.8,473.9 576,471.3 589.2,470.3 599.1,467.3 609,470.6 618.9,469.7 627.2,466.4 635.4,468 643.7,469.7 650.3,468 658.5,473.9 668.4,466.4 675,458.1 678.4,456.8 685.1,469.5 691.8,470.2 698.5,466.8 704.5,460.1 711.9,467.8 721.9,464.5 730.3,465.2 737,463.5 743.7,470.2 755.4,468.5 762.8,470.2 769.8,455.1 777.2,466.8 785.6,469.5 795.6,469.2 804,470.8 815.7,466.8 825.8,467.8 834.1,465.2 840.8,470.2 849.2,460.1 855.9,461.1 860.9,466.8 869.3,463.5 879.4,465.8 887.7,459.1 894.4,454.4 901.1,466.2 907.8,465.8 919.6,470.2 929.6,464.1 934.6,466.8 941.3,462.5 953.1,471.2 959.8,459.1 965.8,465.2 972.5,450.1 979.9,465.2 986.6,473.5 992.6,475.9 998.3,475.2 998.3,485.9 992.6,485.3 979.9,493.6 972.5,500.3 965.8,493.6 959.8,497 953.1,497 946.4,506 939.7,499.7 929.6,497 919.6,496 907.8,502 901.1,500.3 894.4,494.6 887.7,502 879.4,497 869.3,499.7 860.9,499.7 855.9,490.3 849.2,490.9 840.8,494.6 825.8,494.6 815.7,505.4 809,492 802.3,491.3 795.6,496 785.6,492.6 775.5,495.3 769.8,503.7 762.8,496 755.4,497 748.7,493.6 743.7,497 737,497 730.3,494.6 721.9,499.3 711.9,498.7 704.5,502 691.8,498.7 685.1,515.4 678.4,503.7 675,499.4 668.4,495.1 658.5,492.8 651.9,511.9 643.7,499.4 633.8,496.1 625.5,497.7 618.9,489.5 609,492.8 599.1,497 585.9,494.4 576,489.5 566.1,494.4 556.2,497 543,494.4 534.8,493.7 526.5,503.6 516.6,500 506.7,496.1 496.8,492.8 486.9,491.8 480.3,492.8 470.4,494.4 462.2,499.4 444,495.1 437.4,491.1 427.5,493.7 416,492.8 409.4,501 404.4,497 397.1,497.7 389.6,491.8 376.4,492.8 364.1,487.1 358.2,486.2 350.9,480.5" fill="#c5cfc9"/><polygon points="350.9,480.5 357.5,467 364.1,475.3 376.4,469 383.9,473.6 397.1,468 402.8,470.3 409.4,465.4 416,469 424.2,468 430.1,466.4 436.7,471.3 444,466.4 451.3,461.4 457.2,466.4 467.1,464.7 478.7,468 486.9,470.6 495.2,468 501.8,471.3 515,465.4 523.2,468 533.8,459.1 541.4,465.4 549.6,464.7 559.5,467 566.8,473.9 576,471.3 589.2,470.3 599.1,467.3 609,470.6 618.9,469.7 627.2,466.4 635.4,468 643.7,469.7 650.3,468 658.5,473.9 668.4,466.4 675,458.1 678.4,456.8 685.1,469.5 691.8,470.2 698.5,466.8 704.5,460.1 711.9,467.8 721.9,464.5 730.3,465.2 737,463.5 743.7,470.2 755.4,468.5 762.8,470.2 769.8,455.1 777.2,466.8 785.6,469.5 795.6,469.2 804,470.8 815.7,466.8 825.8,467.8 834.1,465.2 840.8,470.2 849.2,460.1 855.9,461.1 860.9,466.8 869.3,463.5 879.4,465.8 887.7,459.1 894.4,454.4 901.1,466.2 907.8,465.8 919.6,470.2 929.6,464.1 934.6,466.8 941.3,462.5 953.1,471.2 959.8,459.1 965.8,465.2 972.5,450.1 979.9,465.2 986.6,473.5 992.6,475.9 998.3,475.2 998.3,485.9 992.6,485.3 979.9,493.6 972.5,500.3 965.8,493.6 959.8,497 953.1,497 946.4,506 939.7,499.7 929.6,497 919.6,496 907.8,502 901.1,500.3 894.4,494.6 887.7,502 879.4,497 869.3,499.7 860.9,499.7 855.9,490.3 849.2,490.9 840.8,494.6 825.8,494.6 815.7,505.4 809,492 802.3,491.3 795.6,496 785.6,492.6 775.5,495.3 769.8,503.7 762.8,496 755.4,497 748.7,493.6 743.7,497 737,497 730.3,494.6 721.9,499.3 711.9,498.7 704.5,502 691.8,498.7 685.1,515.4 678.4,503.7 675,499.4 668.4,495.1 658.5,492.8 651.9,511.9 643.7,499.4 633.8,496.1 625.5,497.7 618.9,489.5 609,492.8 599.1,497 585.9,494.4 576,489.5 566.1,494.4 556.2,497 543,494.4 534.8,493.7 526.5,503.6 516.6,500 506.7,496.1 496.8,492.8 486.9,491.8 480.3,492.8 470.4,494.4 462.2,499.4 444,495.1 437.4,491.1 427.5,493.7 416,492.8 409.4,501 404.4,497 397.1,497.7 389.6,491.8 376.4,492.8 364.1,487.1 358.2,486.2 350.9,480.5" fill="#d4eadf" clip-path="url(#hl)"/></svg>
<div class="a" style="left:351px;top:526px;width:110px;height:26px;border-radius:13.0px;background:#6db392;overflow:hidden"><div class="a" style="left:0;top:0;width:26px;height:26px;border-radius:50%;background:#68ae8d"></div></div>
<svg style="left:355px;top:532px" width="20" height="14" viewBox="0 0 20 14"><path d="M0 7 H4 L5 5 L6 9 L7 2 L8 12 L9 3 L10 11 L11 5 L12 9 L13 6.5 L14 7.5 L15 7 H20" stroke="#c6dcd0" stroke-width="1.2" fill="none" stroke-linejoin="round"/></svg>
<div class="t" style="left:383px;top:532px;font-size:13.3px;color:#ccd6d0">Editar loop</div>
<svg style="left:469px;top:531px" width="15" height="15" viewBox="0 0 15 15"><circle cx="7.5" cy="7.5" r="6.7" stroke="#a8a8a8" stroke-width="1.3" fill="none"/><path d="M7.5 3.8 V10.5 M4.8 8 L7.5 10.7 L10.2 8" stroke="#a8a8a8" stroke-width="1.3" fill="none"/></svg>
<div class="t" style="left:489.5px;top:532px;font-size:13.2px;color:#adadad">Preparar para descargar</div>
<div class="t" style="left:351.5px;top:587.5px;font-size:16.3px;color:#ededed">Duración</div>
<div class="t" style="left:424.5px;top:590.5px;font-size:12.5px;font-weight:bold;color:#e6e6e6;-webkit-text-stroke:0">48.61s</div>
<div class="a" style="left:351px;top:619px;width:143px;height:26px;border-radius:13.0px;background:#555555;overflow:hidden"><div class="a" style="left:0;top:0;width:26px;height:26px;border-radius:50%;background:#515151"></div></div>
<svg style="left:355px;top:625px" width="20" height="14" viewBox="0 0 20 14"><path d="M0 7 H4 L5 5 L6 9 L7 2 L8 12 L9 3 L10 11 L11 5 L12 9 L13 6.5 L14 7.5 L15 7 H20" stroke="#cfcfcf" stroke-width="1.2" fill="none" stroke-linejoin="round"/></svg>
<div class="t" style="left:383px;top:625px;font-size:13.4px;color:#d8d8d8">Ajustar duración</div>
<div class="a" style="left:501px;top:619px;width:120.5px;height:26px;border-radius:13.0px;background:#4c4c4c;overflow:hidden"><div class="a" style="left:0;top:0;width:26px;height:26px;border-radius:50%;background:#505050"></div></div>
<svg style="left:508px;top:626px" width="12" height="12" viewBox="0 0 12 12"><path d="M1 1 L11 11 M11 1 L1 11" stroke="#7a7a7a" stroke-width="1.3"/></svg>
<div class="t" style="left:533.5px;top:625px;font-size:13.3px;color:#767676">Quitar ajuste</div></body></html>
